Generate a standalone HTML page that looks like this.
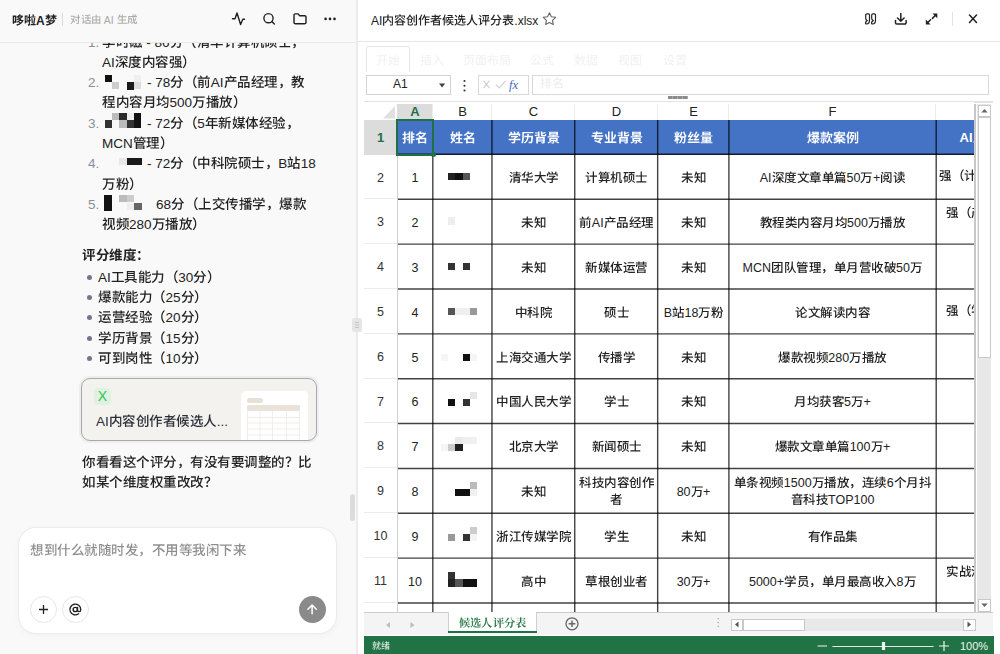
<!DOCTYPE html><html><head><meta charset='utf-8'><style>
*{margin:0;padding:0;box-sizing:border-box}
html,body{width:1000px;height:654px;overflow:hidden;background:#fff;font-family:"Liberation Sans", sans-serif;}
.a{position:absolute;white-space:nowrap}
.ln{position:absolute;left:102px;font-size:13.5px;color:#222;line-height:20px;white-space:nowrap}
.num{position:absolute;left:88px;font-size:13.5px;color:#8a8f99;line-height:20px}
.bul{position:absolute;left:86.5px;width:5px;height:5px;border-radius:50%;background:#717790}
.cell{position:absolute;display:flex;align-items:center;justify-content:center;text-align:center;font-size:12.5px;color:#222;line-height:17px;white-space:normal}
.hd{color:#fff;font-weight:bold;font-size:13px;white-space:nowrap}
.rh{position:absolute;left:364px;width:33px;display:flex;align-items:center;justify-content:center;font-size:12.5px;color:#333}
svg{position:absolute;overflow:visible}
.g{display:inline-block;position:relative;width:1em;height:1em;vertical-align:-0.12em;font-style:normal;text-decoration:none}.g s{position:absolute;left:0;top:0;color:transparent;text-decoration:none}.g svg{position:absolute;left:0;top:0;width:1em;height:1em;fill:currentColor;overflow:visible}</style></head><body><svg width='0' height='0' style='position:absolute'><defs><symbol id='r674e' viewBox='0 0 100 100'><path d='M45 4v10h-39v9h29c-9 8-21 14-32 18c2 2 5 5 6 8c13-5 27-14 36-25v20h9v-20c10 10 23 19 37 24c1-2 4-6 6-8c-12-3-24-10-32-17h30v-9h-41v-10zM45 60v5h-40v9h40v12c0 1-1 1-2 2c-2 0-9 0-15-1c1 3 3 7 4 9c8 0 13 0 17-1c4-2 5-4 5-9v-12h41v-9h-41v-1c9-4 18-9 25-14l-6-5l-2 1h-49v8h37c-5 2-9 4-14 6z'/></symbol><symbol id='r65f6' viewBox='0 0 100 100'><path d='M47 44c5 7 11 18 15 24l8-5c-3-6-10-16-16-23zM31 48v21h-15v-21zM31 40h-15v-20h15zM8 12v74h8v-8h24v-66zM76 4v19h-32v9h32v51c0 2-1 3-3 3c-2 0-10 0-17 0c1 2 3 6 3 9c10 0 17 0 21-1c4-2 5-5 5-11v-51h12v-9h-12v-19z'/></symbol><symbol id='r78c1' viewBox='0 0 100 100'><path d='M4 9v7h10c-2 17-5 32-12 43c2 2 4 7 4 9c2-2 3-5 4-7v31h8v-8h15v-45h-15c2-7 3-15 4-23h12v-7zM18 47h8v29h-8zM66 92c2-1 5-1 23-4c1 2 1 5 1 7l7-2c-1-6-3-16-7-24l-6 2c1 3 2 6 3 10l-12 2c7-11 15-25 20-39l-8-3c-2 4-3 8-5 12l-9 1c4-6 7-14 10-21l-8-3h21v-9h-16c2-4 5-10 7-15l-9-2c-2 5-5 12-7 17h-17l6-3c-1-4-4-10-8-14l-7 3c3 4 5 10 7 14h-16v9h38c-1 8-6 18-7 20c-1 3-2 5-4 5c1 2 3 6 3 8c2-1 4-1 13-2c-4 7-7 13-9 16c-2 4-4 7-6 7c1 3 2 7 2 8zM36 92c1 0 4-1 21-4c1 2 1 5 1 7l7-1c-1-7-3-17-6-24l-6 1c1 3 2 7 3 10l-11 2c7-11 15-25 20-39l-7-3c-2 4-4 8-6 12l-8 1c4-6 8-14 10-21l-8-3c-2 9-6 18-8 21c-1 2-2 4-4 4c1 3 2 7 3 8c1-1 3-1 12-2c-4 8-7 14-9 16c-3 4-5 7-7 8c1 2 2 6 3 7z'/></symbol><symbol id='r5206' viewBox='0 0 100 100'><path d='M68 5l-9 3c6 12 14 24 22 33h-59c8-9 15-21 20-33l-10-3c-6 15-16 29-28 38c2 2 6 5 8 7c2-2 5-4 7-6v6h18c-2 16-8 31-31 38c2 2 5 6 6 9c26-10 32-27 35-47h25c-2 23-3 33-5 35c-1 1-2 1-4 1c-3 0-9 0-15 0c2 2 3 6 4 9c6 1 12 1 15 0c4 0 6-1 8-4c4-4 5-15 7-46v-3c2 3 5 5 7 8c2-3 5-7 8-8c-11-9-23-24-29-37z'/></symbol><symbol id='rff08' viewBox='0 0 100 100'><path d='M68 50c0 20 8 36 20 48l8-4c-11-11-19-26-19-44c0-18 8-33 19-44l-8-4c-12 12-20 28-20 48z'/></symbol><symbol id='r6e05' viewBox='0 0 100 100'><path d='M8 12c5 3 12 8 16 11l6-7c-4-4-11-8-17-11zM3 38c6 3 13 8 17 12l6-8c-4-3-12-8-18-11zM6 89l9 6c5-10 10-22 14-33l-8-5c-4 11-10 24-15 32zM45 68h33v6h-33zM45 61v-6h33v6zM57 4v7h-25v7h25v5h-22v7h22v6h-29v7h68v-7h-30v-6h23v-7h-23v-5h26v-7h-26v-7zM36 48v48h9v-15h33v5c0 2 0 2-2 2c-1 0-6 0-10 0c1 2 2 6 2 8c7 0 12 0 15-1c3-2 4-4 4-8v-39z'/></symbol><symbol id='r534e' viewBox='0 0 100 100'><path d='M53 5v19c-6 2-12 4-18 6c2 2 3 5 4 7c4-1 9-3 14-4v7c0 9 2 12 13 12c2 0 14 0 16 0c9 0 12-4 13-16c-3 0-7-2-9-3c0 9-1 11-4 11c-3 0-13 0-15 0c-4 0-5-1-5-4v-10c11-4 22-8 30-13l-7-8c-6 5-14 9-23 12v-16zM32 3c-7 11-17 21-28 28c2 1 5 5 7 7c3-3 7-6 10-9v25h10v-34c3-5 7-9 9-14zM5 66v9h40v21h10v-21h40v-9h-40v-12h-10v12z'/></symbol><symbol id='r8ba1' viewBox='0 0 100 100'><path d='M13 11c5 5 13 11 16 16l6-7c-3-4-11-11-16-15zM4 35v9h16v34c0 4-4 7-6 8c2 2 4 7 5 9c2-2 5-5 25-19c-1-1-3-6-3-8l-12 8v-41zM62 4v32h-25v10h25v50h10v-50h24v-10h-24v-32z'/></symbol><symbol id='r7b97' viewBox='0 0 100 100'><path d='M27 43h48v5h-48zM27 54h48v5h-48zM27 33h48v4h-48zM58 3c-2 5-5 11-10 15c-1 2-3 3-4 5c2 1 5 2 7 4h-21l6-3c0-1-2-4-3-6h15l1-7h-25c1-2 2-4 3-6l-9-2c-3 8-9 15-15 20c2 1 6 4 7 6c4-3 7-7 9-11h4c2 3 4 6 5 9h-11v37h13v7v1h-25v8h22c-3 3-9 7-20 10c2 1 4 4 6 6c16-4 22-10 25-16h25v16h10v-16h22v-8h-22v-8h12v-37h-10l6-3c-1-2-2-4-4-6h17v-7h-30c1-2 2-4 3-6zM63 72h-23v-8h23zM53 27c2-3 5-6 7-9h7c2 3 5 6 6 9z'/></symbol><symbol id='r673a' viewBox='0 0 100 100'><path d='M49 9v33c0 15-1 35-14 48c2 2 5 5 7 6c14-14 16-38 16-54v-24h17v63c0 8 0 10 2 12c2 2 4 2 6 2c2 0 4 0 6 0c2 0 4 0 5-1c2-1 3-3 3-6c1-3 1-10 1-16c-2 0-5-2-7-4c0 7 0 12 0 14c0 2-1 3-1 4c0 0-1 1-2 1c0 0-1 0-2 0c-1 0-1-1-2-1c0 0 0-2 0-5v-72zM21 4v21h-16v9h15c-4 13-11 28-18 36c2 2 4 6 5 8c5-6 10-16 14-26v44h9v-44c3 5 7 10 9 14l6-8c-3-2-12-13-15-17v-7h14v-9h-14v-21z'/></symbol><symbol id='r7855' viewBox='0 0 100 100'><path d='M70 80c7 4 17 12 21 16l5-7c-4-5-14-11-21-16zM64 38v20c0 10-3 24-26 32c2 1 5 4 6 6c25-9 29-25 29-38v-20zM46 26v48h9v-40h26v39h9v-47h-21l3-9h22v-9h-50v9h19c-1 3-1 6-2 9zM5 8v9h11c-2 15-7 28-14 37c2 2 4 8 4 11c2-3 4-5 5-7v34h8v-8h19v-44h-19c3-8 5-15 6-23h15v-9zM19 48h11v28h-11z'/></symbol><symbol id='r58eb' viewBox='0 0 100 100'><path d='M45 4v31h-40v9h40v38h-34v9h79v-9h-35v-38h40v-9h-40v-31z'/></symbol><symbol id='rff0c' viewBox='0 0 100 100'><path d='M17 100c12-4 19-12 19-23c0-8-4-13-10-13c-4 0-8 3-8 8c0 5 4 8 8 8h1c0 6-5 11-12 14z'/></symbol><symbol id='r6df1' viewBox='0 0 100 100'><path d='M33 9v19h8v-11h43v10h9v-18zM50 22c-4 8-12 15-19 19c2 2 5 5 7 7c7-6 16-14 20-23zM66 26c7 6 15 16 18 21l8-5c-4-6-13-14-20-20zM8 12c5 3 13 7 16 10l5-8c-4-3-11-7-17-9zM3 39c6 3 14 8 18 11l5-8c-4-3-12-8-18-10zM5 88l7 7c6-10 11-21 16-32l-6-6c-6 11-12 24-17 31zM58 42v10h-26v8h20c-6 11-15 20-26 24c2 2 5 5 7 7c9-5 18-14 25-24v29h9v-29c6 10 14 19 22 24c2-2 5-6 7-7c-9-5-18-14-24-24h21v-8h-26v-10z'/></symbol><symbol id='r5ea6' viewBox='0 0 100 100'><path d='M39 24v8h-15v8h15v16h40v-16h15v-8h-15v-8h-10v8h-21v-8zM69 40v9h-21v-9zM74 69c-4 4-10 8-16 10c-6-3-12-6-15-10zM25 61v8h12l-4 1c4 5 9 10 15 13c-9 3-18 4-28 5c1 2 3 6 4 8c12-2 23-4 34-8c9 4 21 7 33 8c1-2 4-6 6-8c-11-1-20-2-29-5c9-5 16-11 20-19l-6-3h-2zM47 5c1 3 2 5 3 8h-38v27c0 15-1 37-9 52c3 1 7 3 9 4c8-16 9-40 9-56v-18h74v-9h-34c-1-3-3-7-5-10z'/></symbol><symbol id='r5185' viewBox='0 0 100 100'><path d='M9 20v77h10v-67h26c0 13-4 28-25 40c2 1 6 5 7 7c12-8 19-17 23-26c9 8 18 18 22 24l8-6c-6-7-17-19-27-27c1-4 2-8 2-12h27v55c0 1-1 2-3 2c-2 0-9 0-15 0c1 3 2 7 3 9c9 0 15 0 19-1c4-2 5-5 5-10v-65h-36v-16h-10v16z'/></symbol><symbol id='r5bb9' viewBox='0 0 100 100'><path d='M32 24c-5 8-14 14-23 19c2 1 5 5 7 7c9-5 19-14 25-23zM58 30c9 6 20 14 25 20l7-7c-6-5-17-13-26-19zM49 33c-10 15-27 27-46 34c3 2 5 5 6 8c5-2 9-4 13-6v27h9v-3h38v3h10v-28c3 2 7 4 11 5c2-2 4-5 6-7c-16-7-29-14-41-26l2-3zM31 85v-14h38v14zM32 62c7-4 13-10 18-16c6 7 13 12 20 16zM42 5c2 2 3 5 4 7h-38v20h9v-11h66v11h9v-20h-35c-1-3-3-6-5-9z'/></symbol><symbol id='r5f3a' viewBox='0 0 100 100'><path d='M54 17h25v10h-25zM45 9v26h17v8h-19v28h19v13l-24 1l2 9c12-1 30-2 46-3c1 2 2 4 3 6l8-3c-2-6-7-16-12-22l-7 2c1 3 3 6 4 8l-11 1v-12h20v-28h-20v-8h17v-26zM51 50h11v13h-11zM71 50h11v13h-11zM8 31c-1 10-2 23-4 32h24c-2 15-3 22-4 23c-1 1-2 2-4 2c-2 0-6 0-10-1c1 3 2 6 2 9c5 0 10 0 12 0c3-1 5-1 7-4c3-3 5-12 6-34c0-1 0-4 0-4h-23c1-4 1-10 2-14h21v-31h-31v8h22v14z'/></symbol><symbol id='rff09' viewBox='0 0 100 100'><path d='M32 50c0-20-8-36-20-48l-8 4c11 11 19 26 19 44c0 18-8 33-19 44l8 4c12-12 20-28 20-48z'/></symbol><symbol id='r524d' viewBox='0 0 100 100'><path d='M60 37v41h8v-41zM80 34v51c0 2-1 2-2 2c-2 0-8 0-13 0c1 3 3 7 3 9c8 0 13 0 16-2c4-1 5-4 5-9v-51zM71 3c-2 5-5 11-9 16h-29l5-2c-2-4-6-9-9-13l-9 3c3 3 6 8 8 12h-23v9h90v-9h-22c3-4 6-8 8-13zM40 59v9h-20v-9zM40 52h-20v-8h20zM11 36v60h9v-21h20v11c0 2-1 2-2 2c-1 0-6 0-10 0c1 2 2 6 3 8c7 0 11 0 14-2c3-1 4-3 4-8v-50z'/></symbol><symbol id='r4ea7' viewBox='0 0 100 100'><path d='M68 25c-2 5-5 12-8 16h-25l7-3c-1-4-5-10-8-14l-8 4c3 4 6 9 8 13h-22v14c0 11-1 25-9 36c2 1 6 5 8 6c9-11 11-29 11-42v-5h71v-9h-23c3-4 6-8 9-13zM42 6c2 2 4 6 5 9h-36v9h80v-9h-33c-1-3-4-8-7-12z'/></symbol><symbol id='r54c1' viewBox='0 0 100 100'><path d='M31 17h38v16h-38zM22 8v34h57v-34zM8 52v44h9v-5h18v5h9v-44zM17 82v-21h18v21zM54 52v44h9v-5h20v5h10v-44zM63 82v-21h20v21z'/></symbol><symbol id='r7ecf' viewBox='0 0 100 100'><path d='M4 82l1 9c10-3 22-6 33-9l-1-8c-12 3-25 6-33 8zM6 46c1-1 4-1 15-3c-4 6-8 10-9 12c-4 4-6 6-9 6c1 3 3 7 3 9c3-1 7-2 32-7c0-2 0-6 0-8l-18 3c8-9 15-18 22-28l-9-6c-2 4-4 7-6 11l-12 1c6-8 12-19 16-28l-9-5c-4 12-11 25-13 28c-3 3-4 6-6 6c1 3 2 7 3 9zM42 9v8h34c-9 13-25 22-40 27c2 2 4 6 5 8c9-3 18-8 26-13c9 4 19 9 25 13l5-8c-5-3-14-7-23-11c7-6 13-13 17-21l-7-4l-2 1zM43 55v8h19v22h-25v9h59v-9h-24v-22h20v-8z'/></symbol><symbol id='r7406' viewBox='0 0 100 100'><path d='M49 35h13v11h-13zM70 35h13v11h-13zM49 16h13v11h-13zM70 16h13v11h-13zM32 85v8h65v-8h-26v-12h23v-9h-23v-10h21v-46h-51v46h21v10h-22v9h22v12zM3 77l2 10c9-3 21-7 32-11l-1-9l-11 3v-22h10v-9h-10v-20h11v-9h-32v9h12v20h-11v9h11v25c-5 2-9 3-13 4z'/></symbol><symbol id='r6559' viewBox='0 0 100 100'><path d='M62 4c-2 12-5 24-10 34v-8h-7c4-6 8-14 11-22l-9-2c-2 5-4 10-7 14v-7h-11v-9h-9v9h-12v9h12v8h-16v8h23c-2 3-4 5-7 7h-8v6c-3 2-6 4-9 6c1 2 5 5 6 7c6-3 11-7 17-12h8c-3 3-6 6-10 8v7l-21 2l1 8l20-2v12c0 1 0 1-1 1c-2 0-6 0-11 0c2 2 3 6 3 8c7 0 11 0 14-1c3-1 4-4 4-8v-13l20-2v-8l-20 2v-4c5-4 11-8 15-13c2 2 4 4 6 5c2-2 4-6 6-9c2 9 4 17 8 24c-6 8-13 15-23 19c2 2 4 7 5 9c10-5 17-11 23-18c5 7 10 13 18 17c1-2 4-6 6-8c-7-4-14-10-18-18c5-11 9-24 11-39h6v-9h-28c2-5 3-11 4-17zM33 45c2-2 4-5 6-7h13c-2 4-3 6-5 9l-4-3l-1 1zM29 22h11c-2 2-4 5-6 8h-5zM80 31c-1 11-3 20-7 28c-3-8-6-18-7-28z'/></symbol><symbol id='r7a0b' viewBox='0 0 100 100'><path d='M55 16h27v16h-27zM46 8v32h45v-32zM45 66v8h19v12h-26v8h59v-8h-24v-12h19v-8h-19v-10h21v-8h-51v8h21v10zM35 5c-7 3-20 6-31 8c1 2 2 5 2 7c5 0 9-1 14-2v14h-16v9h15c-4 10-10 22-17 29c2 2 4 6 5 9c5-6 9-14 13-23v40h9v-41c3 4 7 9 8 11l5-7c-2-3-10-11-13-14v-4h12v-9h-12v-16c5-1 9-2 13-4z'/></symbol><symbol id='r6708' viewBox='0 0 100 100'><path d='M20 9v31c0 16-2 36-17 50c2 1 5 4 7 6c9-8 14-19 17-30h46v17c0 3-1 3-3 3c-2 0-11 0-18 0c1 3 3 7 4 10c10 0 17 0 21-2c4-1 6-4 6-10v-75zM30 18h43v15h-43zM30 42h43v15h-44c0-6 1-11 1-15z'/></symbol><symbol id='r5747' viewBox='0 0 100 100'><path d='M48 43c6 5 14 12 18 16l5-6c-3-4-11-11-17-15zM40 75l4 9c10-6 24-13 37-21l-3-7c-13 7-28 15-38 19zM3 74l3 10c10-5 23-12 34-18l-2-8l-13 6v-28h11l-1 1c2 1 5 5 7 7c4-4 8-10 12-16h30c0 39-2 55-5 58c-1 2-2 2-4 2c-3 0-9 0-16-1c2 3 3 7 3 9c6 0 13 1 16 0c4 0 7-1 9-5c4-5 5-21 6-67c0-1 0-5 0-5h-34c2-4 4-8 6-13l-9-2c-4 12-12 24-20 32v-9h-11v-22h-9v22h-12v9h12v33c-5 2-9 4-13 5z'/></symbol><symbol id='r4e07' viewBox='0 0 100 100'><path d='M6 11v9h26c-1 25-2 54-29 69c2 2 5 5 7 7c19-11 26-29 29-48h36c-1 24-3 35-6 38c-1 1-2 1-5 1c-2 0-9 0-17-1c2 3 3 7 4 9c7 1 13 1 17 1c4-1 7-2 10-5c4-4 6-16 7-48c0-1 0-4 0-4h-45c1-7 1-13 1-19h53v-9z'/></symbol><symbol id='r64ad' viewBox='0 0 100 100'><path d='M16 4v19h-12v9h12v20c-5 1-10 3-14 4l2 9l12-4v25c0 1-1 2-2 2c-1 0-5 0-9 0c1 2 2 6 3 8c6 0 10 0 13-1c2-2 3-4 3-9v-28l8-3c1 2 3 4 4 5l4-2v38h8v-4h33v4h9v-38l2 1c1-2 4-5 6-7c-8-3-16-9-22-15h19v-8h-13c2-3 4-8 6-12l-8-3c-1 5-4 11-7 15h-4v-15c8 0 16-2 22-3l-5-7c-12 3-33 5-50 6c0 1 2 4 2 6c7 0 14 0 22-1v14h-12l7-2c-1-3-4-7-6-11l-7 2c2 4 4 8 5 11h-12v8h18c-5 6-12 11-19 15l-1-6l-9 2v-16h10v-9h-10v-19zM60 40v15h9v-15c5 6 12 13 19 17h-46c7-4 13-10 18-17zM60 64v7h-12v-7zM68 64h13v7h-13zM60 78v7h-12v-7zM68 78h13v7h-13z'/></symbol><symbol id='r653e' viewBox='0 0 100 100'><path d='M20 6c2 4 4 10 5 13l9-2c-2-4-4-9-6-14zM60 4c-2 16-8 33-16 43v-3c1-1 1-4 1-4h-21v-12h24v-9h-44v9h11v20c0 14-1 29-13 42c2 2 5 4 7 6c13-14 15-31 15-47h12c-1 25-2 35-3 37c-1 1-2 1-3 1c-2 0-5 0-9 0c1 2 2 6 3 9c4 0 8 0 10-1c3 0 5-1 7-3c2-4 3-14 3-43c2 2 6 5 7 7c2-4 5-7 7-11c2 9 5 17 8 25c-5 8-13 14-23 18c2 2 5 7 6 9c9-5 16-11 22-19c5 8 12 14 20 18c1-2 5-6 7-8c-9-4-16-10-21-18c6-11 10-24 12-39h8v-9h-31c2-6 3-11 4-17zM63 31h17c-2 11-4 21-8 29c-4-8-7-18-9-28z'/></symbol><symbol id='r5e74' viewBox='0 0 100 100'><path d='M4 65v9h46v22h10v-22h36v-9h-36v-18h28v-9h-28v-14h31v-9h-59c2-3 3-6 4-9l-10-3c-4 13-12 26-22 35c3 1 7 4 9 6c5-6 10-12 14-20h23v14h-29v27zM30 65v-18h20v18z'/></symbol><symbol id='r65b0' viewBox='0 0 100 100'><path d='M36 68c3 4 6 11 8 15l6-4c-1-4-5-10-8-15zM13 65c-2 6-6 12-9 16c1 1 4 3 6 5c4-5 8-12 10-19zM55 13v35c0 13-1 30-9 42c2 1 6 4 8 5c9-13 10-33 10-47v-2h13v50h9v-50h10v-9h-32v-18c10-1 21-4 30-7l-8-7c-7 3-20 6-31 8zM21 5c1 3 2 6 3 9h-18v8h44v-8h-16c-1-4-3-8-5-11zM37 22c-1 4-4 10-5 14h-14l5-1c0-4-2-9-4-13l-7 2c2 4 3 9 3 12h-11v8h20v10h-19v8h19v23c0 1 0 2-1 2c-1 0-4 0-8 0c1 2 3 5 3 7c5 0 9 0 11-1c3-1 4-3 4-7v-24h17v-8h-17v-10h19v-8h-12c2-3 4-8 5-12z'/></symbol><symbol id='r5a92' viewBox='0 0 100 100'><path d='M28 32c0 13-3 24-6 32c-2-2-4-4-7-6c2-7 4-16 5-26zM6 62c4 3 8 6 13 10c-4 8-10 14-16 17c2 2 4 5 5 7c7-4 13-10 17-17c3 3 5 6 7 8l6-7c-2-3-5-6-9-10c5-11 7-26 8-46h-5h-2h-8c1-7 2-14 2-20h-8c0 6-1 13-2 20h-9v8h7c-2 11-4 22-6 30zM47 4v10h-8v8h8v30h16v8h-24v8h19c-6 8-14 15-23 19c2 1 5 5 7 7c7-4 15-12 21-20v22h9v-22c5 8 12 15 19 20c1-3 5-6 7-8c-8-4-16-11-22-18h19v-8h-23v-8h14v-30h9v-8h-9v-10h-9v10h-21v-10zM77 22v8h-21v-8zM77 37v7h-21v-7z'/></symbol><symbol id='r4f53' viewBox='0 0 100 100'><path d='M24 4c-5 15-13 29-22 39c2 2 5 7 6 9c2-2 5-6 7-9v53h9v-69c3-7 6-13 9-20zM42 70v9h15v17h10v-17h15v-9h-15v-31c6 17 14 32 24 42c1-3 5-6 7-8c-10-9-20-25-26-41h24v-9h-29v-19h-10v19h-27v9h22c-6 16-15 33-26 42c2 1 5 5 7 7c9-9 18-25 24-41v30z'/></symbol><symbol id='r9a8c' viewBox='0 0 100 100'><path d='M3 72l1 8c8-2 17-4 26-7l-1-7c-10 3-19 5-26 6zM46 52c3 8 6 18 6 24l8-2c-1-6-4-16-6-24zM64 50c2 7 3 17 4 24l8-2c-1-6-3-16-5-23zM10 23c-1 11-2 26-3 35h26c-1 19-2 27-4 29c-1 1-2 1-4 1c-2 0-6 0-11 0c2 2 2 5 3 7c5 1 9 1 12 0c3 0 5-1 7-3c3-3 4-13 6-38c0-1 0-4 0-4h-8c1-11 3-29 3-42h-31v8h23c-1 12-2 25-3 34h-10c0-8 1-18 2-27zM53 34v8h31v-7c3 3 6 6 9 8c1-3 3-7 5-9c-9-6-20-15-26-24l2-4l-8-3c-6 13-17 25-29 33c1 1 4 5 5 7c9-6 18-15 25-25c5 5 10 11 16 16zM44 84v8h51v-8h-14c5-9 10-22 14-32l-9-2c-3 10-8 24-13 34z'/></symbol><symbol id='r7ba1' viewBox='0 0 100 100'><path d='M20 44v52h10v-3h46v3h9v-25h-55v-6h50v-21zM76 86h-46v-8h46zM43 26c1 1 2 4 3 6h-37v17h9v-10h65v10h9v-17h-36c-1-3-3-6-4-8zM30 51h41v7h-41zM16 3c-2 9-7 17-12 23c2 1 6 3 8 4c3-3 6-7 8-12h6c2 4 4 8 5 11l8-3c-1-2-2-5-4-8h14v-7h-26c1-2 2-4 3-6zM59 3c-2 7-5 15-10 19c2 1 6 3 8 4c2-2 4-5 6-8h5c3 4 6 8 8 11l7-3c-1-2-3-5-5-8h16v-7h-28c1-2 2-4 2-6z'/></symbol><symbol id='r4e2d' viewBox='0 0 100 100'><path d='M45 4v17h-36v49h10v-6h26v32h10v-32h26v6h10v-49h-36v-17zM19 55v-25h26v25zM81 55h-26v-25h26z'/></symbol><symbol id='r79d1' viewBox='0 0 100 100'><path d='M49 16c6 4 13 10 16 14l7-6c-4-4-11-10-17-14zM46 42c6 4 13 10 16 15l7-6c-4-5-11-11-17-15zM37 5c-8 3-21 6-32 8c1 2 2 5 2 7c4 0 9-1 13-2v14h-16v9h15c-4 10-10 22-17 29c2 2 4 6 5 9c5-6 9-14 13-23v40h9v-44c3 5 7 10 8 14l6-8c-2-3-11-13-14-16v-1h14v-9h-14v-16c5-1 9-2 13-4zM42 68l1 9l32-5v24h9v-26l13-2l-1-8l-12 1v-57h-9v59z'/></symbol><symbol id='r9662' viewBox='0 0 100 100'><path d='M58 5c2 3 4 7 5 11h-25v18h8v8h41v-8h8v-18h-22c-1-4-3-9-6-13zM47 34v-10h39v10zM39 52v8h13c-1 14-5 24-22 29c2 2 5 5 6 7c19-6 24-18 25-36h9v24c0 8 2 11 10 11c1 0 6 0 8 0c6 0 8-3 9-17c-2 0-6-2-8-3c0 10 0 12-2 12c-1 0-5 0-6 0c-2 0-2 0-2-3v-24h17v-8zM7 8v88h9v-80h11c-2 7-5 15-7 22c6 8 8 14 8 19c0 3-1 6-2 7c-1 0-2 1-3 1c-1 0-3 0-5 0c1 2 2 6 2 8c2 0 5 0 7 0c2-1 4-1 5-2c3-2 4-7 4-13c0-6-1-13-8-21c3-8 7-18 10-26l-7-4l-1 1z'/></symbol><symbol id='r7ad9' viewBox='0 0 100 100'><path d='M5 22v9h40v-9zM9 36c2 11 4 25 5 35l7-2c0-9-2-23-5-34zM17 6c3 5 5 12 6 16l9-3c-1-4-4-10-7-15zM32 34c-1 12-4 29-6 39c-8 2-16 3-22 5l2 9c11-3 25-6 38-9l-1-9l-9 2c2-10 5-24 7-36zM46 51v45h10v-4h27v4h9v-45h-20v-19h24v-9h-24v-19h-10v47zM56 83v-23h27v23z'/></symbol><symbol id='r7c89' viewBox='0 0 100 100'><path d='M4 12c2 7 5 16 5 22l7-2c0-6-2-15-5-22zM35 10c-1 6-4 16-7 22l7 2c2-6 5-15 8-22zM4 38v9h13c-3 10-9 21-14 27c1 3 3 7 4 10c5-6 9-14 12-22v34h9v-35c3 4 6 9 8 12l6-7c-2-3-11-12-14-16v-3h12v-6c1 2 2 6 3 8c1-1 2-2 3-3v6h11c-2 17-7 30-20 37c2 2 5 5 7 7c13-9 20-23 22-44h13c-1 23-2 32-4 34c-1 1-2 1-3 1c-2 0-6 0-10 0c2 2 3 6 3 8c4 1 9 1 11 0c3 0 5-1 7-3c3-4 4-15 5-45l1-2l2 3c1-3 4-6 6-8c-9-9-14-19-17-35l-9 2c3 15 7 26 15 36h-37c8-9 13-21 16-36l-9-1c-2 14-7 25-16 32h-12v-34h-9v34z'/></symbol><symbol id='r4e0a' viewBox='0 0 100 100'><path d='M42 5v77h-37v10h90v-10h-43v-38h36v-9h-36v-30z'/></symbol><symbol id='r4ea4' viewBox='0 0 100 100'><path d='M31 28c-6 8-16 15-25 20c2 2 6 5 8 7c8-5 19-15 26-23zM61 33c9 7 20 16 25 23l8-7c-5-6-17-15-26-21zM36 46l-8 3c4 9 9 17 15 24c-10 7-23 12-38 15c1 2 4 6 5 8c16-3 29-9 40-17c11 8 24 14 40 17c1-3 4-7 6-9c-16-2-28-7-39-14c7-7 13-15 17-25l-10-3c-3 9-8 16-14 22c-6-6-11-13-14-21zM41 6c2 3 5 7 6 11h-41v9h88v-9h-39l2-1c-1-4-4-9-7-14z'/></symbol><symbol id='r4f20' viewBox='0 0 100 100'><path d='M26 4c-6 15-15 29-24 39c1 2 4 7 5 9c3-2 5-6 8-10v54h9v-68c4-7 8-14 10-21zM46 76c10 6 21 15 27 20l7-6c-3-3-7-6-11-9c8-8 16-17 23-25l-7-4l-2 1h-30l3-11h40v-8h-38l3-10h30v-9h-28l3-9l-10-2l-2 11h-19v9h17l-3 10h-20v8h17c-2 8-4 14-6 20h35c-4 4-9 9-13 14c-3-2-6-4-9-6z'/></symbol><symbol id='r5b66' viewBox='0 0 100 100'><path d='M45 53v7h-39v9h39v16c0 2-1 2-3 2c-2 0-9 0-16 0c2 3 4 7 4 9c9 0 15 0 19-1c4-2 6-4 6-10v-16h40v-9h-40v-3c8-4 17-9 23-15l-6-5l-2 1h-47v8h37c-5 3-10 6-15 7zM42 6c3 4 6 10 7 14h-20l4-2c-2-4-6-9-9-14l-8 4c2 4 6 8 8 12h-17v21h9v-13h68v13h9v-21h-15c3-4 6-8 9-13l-10-3c-2 5-6 11-9 16h-15l5-2c-1-4-5-11-8-15z'/></symbol><symbol id='r7206' viewBox='0 0 100 100'><path d='M8 24c-1 8-2 19-5 25l6 2c3-7 4-18 4-26zM30 21c-1 7-3 16-5 21l5 2c2-5 4-13 6-20zM46 71c2 2 4 5 6 7l6-4c-2-2-4-5-7-7zM48 23h34v5h-34zM48 12h34v5h-34zM16 4v35c0 18-1 36-13 51c2 1 5 4 6 6c6-8 10-16 12-25c3 5 6 11 8 15l6-7c-2-3-9-14-12-18c1-8 1-15 1-22v-35zM71 46v6h-13v-6zM71 40h-13v-6h13zM40 6v28h9v6h-12v6h12v6h-15v7h14c-5 4-11 7-16 9c1 2 4 4 5 6c7-3 15-9 20-15h18c4 6 11 12 18 16c1-2 3-5 5-6c-5-2-11-6-16-10h14v-7h-16v-6h13v-6h-13v-6h11v-28zM34 86l2 7c8-3 16-7 25-10v5c0 1-1 2-2 2c-1 0-5 0-9 0c2 2 3 4 3 6c6 0 10 0 13-1c2-1 3-3 3-7v-5c7 3 15 7 19 10l5-5c-4-3-10-6-16-8c3-3 5-6 7-8l-5-4c-2 3-5 6-8 9l-2-1v-14h-8v14c-10 4-21 8-27 10z'/></symbol><symbol id='r6b3e' viewBox='0 0 100 100'><path d='M11 66c-2 7-5 15-8 20c2 1 5 2 7 4c3-6 7-14 9-22zM37 69c3 5 6 12 7 16l7-3c-1-4-4-11-7-16zM67 37v5c0 13-2 33-19 48c2 2 6 5 7 7c9-9 14-18 17-27c4 11 10 21 19 26c1-2 4-6 7-8c-12-6-19-20-23-36c1-4 1-7 1-10v-5zM24 4v8h-19v8h19v7h-17v8h42v-8h-17v-7h19v-8h-19v-8zM4 56v8h20v23c0 1-1 1-2 1c-1 0-4 0-8 0c1 2 2 6 3 8c5 0 9 0 12-1c3-1 4-4 4-8v-23h19v-8zM88 22h-1h-21c1-6 2-11 2-17l-9-1c-2 15-5 29-11 39v-2h-40v8h40v-3c2 1 6 3 7 5c3-6 6-13 8-21h23c-2 7-4 13-5 18l8 2c2-7 5-18 7-27l-6-2z'/></symbol><symbol id='r89c6' viewBox='0 0 100 100'><path d='M44 8v54h9v-46h29v46h10v-54zM63 23v18c0 16-3 35-28 49c2 1 5 5 6 6c13-7 21-16 26-26v16c0 7 3 9 10 9h8c10 0 11-4 12-20c-2-1-5-2-8-4c0 14-1 17-4 17h-6c-3 0-3-1-3-4v-24h-6c2-6 2-13 2-18v-19zM14 8c4 4 7 9 9 13h-17v8h23c-6 12-16 24-26 31c2 2 4 6 4 9c4-2 7-6 11-9v36h9v-41c3 4 6 9 8 12l6-7c-2-2-8-10-12-14c5-7 8-15 11-22l-5-4l-2 1h-9l7-5c-2-3-5-8-9-12z'/></symbol><symbol id='r9891' viewBox='0 0 100 100'><path d='M70 39c-1 34-2 45-25 51c1 2 3 5 4 7c26-8 28-21 28-58zM72 80c7 5 16 12 20 17l5-6c-4-5-13-11-19-16zM12 48c-2 7-5 15-9 20c2 1 5 3 7 4c4-5 8-14 10-22zM54 27v47h8v-40h22v40h9v-47h-18l4-9h16v-9h-43v9h18c-1 3-2 6-3 9zM42 49c-2 9-5 16-10 22v-29h18v-8h-16v-11h14v-8h-14v-11h-8v30h-8v-22h-8v22h-6v8h20v31h7c-6 8-15 13-27 16c2 2 4 5 5 8c23-8 35-22 41-46z'/></symbol><symbol id='b8bc4' viewBox='0 0 100 100'><path d='M82 23c-1 7-3 17-5 24l9 2c2-6 5-15 8-24zM38 25c2 8 4 17 5 24l10-3c0-6-3-16-5-23zM8 12c5 5 12 12 15 16l8-8c-3-4-11-11-16-15zM36 8v11h23v34h-25v11h25v33h12v-33h26v-11h-26v-34h22v-11zM4 34v11h11v32c0 4-3 7-5 9c2 2 5 7 6 10c1-3 5-5 22-20c-2-2-4-7-5-10l-7 6v-38h-11z'/></symbol><symbol id='b5206' viewBox='0 0 100 100'><path d='M69 4l-11 4c5 11 12 22 20 32h-53c7-9 14-20 19-32l-13-4c-6 15-16 30-28 38c3 2 8 7 10 9c3-1 5-3 7-5v6h16c-2 14-8 27-30 35c2 2 6 7 7 10c26-9 33-26 35-45h21c-1 20-2 29-4 31c-1 1-2 1-4 1c-2 0-7 0-13 0c2 3 4 8 4 12c6 0 12 0 15 0c4-1 7-2 9-5c4-4 5-16 6-46c2 2 4 4 6 5c2-3 6-7 9-10c-10-8-22-23-28-36z'/></symbol><symbol id='b7ef4' viewBox='0 0 100 100'><path d='M3 81l3 12c10-3 23-7 35-10l-1-10c-14 3-28 7-37 8zM6 47c1-1 4-2 13-3c-4 5-7 9-8 10c-3 4-5 6-8 7c1 3 3 8 4 10c2-1 6-3 31-7c0-3 0-7 0-10l-16 2c6-8 13-18 18-28l-9-5c-2 4-4 8-6 11l-9 1c6-8 11-18 15-27l-11-5c-3 11-10 24-12 27c-2 3-4 6-6 6c1 3 3 8 4 11zM69 51v9h-12v-9zM66 8c3 4 5 9 7 13h-13c2-5 4-10 5-14l-11-4c-3 12-10 27-18 36c2 3 5 8 6 11c1-1 2-3 4-5v52h11v-7h40v-11h-17v-9h13v-10h-13v-9h13v-11h-13v-8h15v-11h-19l8-3c-2-4-4-10-7-14zM69 40h-12v-8h12zM69 70v9h-12v-9z'/></symbol><symbol id='b5ea6' viewBox='0 0 100 100'><path d='M39 25v7h-14v9h14v16h41v-16h14v-9h-14v-7h-12v7h-18v-7zM68 41v7h-18v-7zM71 70c-3 4-8 6-13 8c-5-2-10-5-13-8zM26 61v9h11l-5 2c4 4 8 8 13 11c-8 1-16 3-24 3c2 3 4 7 5 10c11-1 22-3 32-6c9 3 20 6 32 7c2-3 5-8 7-11c-9 0-17-1-25-3c7-5 13-11 18-19l-8-4l-2 1zM46 5c1 2 2 4 3 7h-38v26c0 16-1 38-9 54c4 0 9 3 11 5c9-17 10-42 10-59v-15h73v-11h-34c-1-3-2-7-4-10z'/></symbol><symbol id='bff1a' viewBox='0 0 100 100'><path d='M25 41c5 0 9-4 9-9c0-6-4-10-9-10c-5 0-9 4-9 10c0 5 4 9 9 9zM25 89c5 0 9-4 9-10c0-5-4-9-9-9c-5 0-9 4-9 9c0 6 4 10 9 10z'/></symbol><symbol id='r5de5' viewBox='0 0 100 100'><path d='M5 80v9h90v-9h-40v-56h35v-10h-80v10h34v56z'/></symbol><symbol id='r5177' viewBox='0 0 100 100'><path d='M21 8v58h-16v9h27c-6 5-19 11-28 15c2 1 5 5 6 6c10-3 23-10 31-16l-8-5h32l-5 5c10 5 22 12 29 17l8-7c-7-5-19-11-30-15h28v-9h-15v-58zM30 66v-8h41v8zM30 30h41v7h-41zM30 23v-7h41v7zM30 44h41v8h-41z'/></symbol><symbol id='r80fd' viewBox='0 0 100 100'><path d='M37 47v7h-19v-7zM10 39v57h8v-19h19v9c0 1-1 2-2 2c-1 0-5 0-9 0c1 2 2 6 3 8c6 0 10 0 13-1c3-2 4-4 4-9v-47zM18 62h19v7h-19zM85 11c-5 3-13 6-21 9v-16h-9v32c0 9 3 12 13 12c2 0 14 0 16 0c8 0 11-4 12-16c-3-1-6-2-8-4c-1 10-2 12-5 12c-3 0-12 0-14 0c-4 0-5-1-5-4v-9c10-2 20-6 28-9zM86 55c-5 4-13 7-22 11v-16h-9v33c0 10 3 13 13 13c2 0 14 0 16 0c9 0 12-4 13-18c-3 0-7-2-9-3c0 10-1 12-4 12c-3 0-13 0-14 0c-5 0-6 0-6-4v-10c10-3 21-6 29-11zM8 33c3-1 6-1 32-3c1 2 2 4 3 5l8-3c-2-7-7-16-12-22l-8 3c2 3 4 6 6 10l-19 1c4-5 9-12 12-18l-10-3c-3 8-8 15-10 17c-2 3-3 4-5 4c1 3 3 8 3 9z'/></symbol><symbol id='r529b' viewBox='0 0 100 100'><path d='M40 4v19v2h-32v10h31c-1 18-8 39-34 54c2 2 6 5 7 8c29-17 36-41 37-62h32c-2 33-4 46-7 50c-2 1-3 1-5 1c-3 0-9 0-15 0c2 2 3 7 3 9c6 1 12 1 16 0c4 0 7-1 9-4c5-5 7-20 9-61c0-2 0-5 0-5h-41v-2v-19z'/></symbol><symbol id='r8fd0' viewBox='0 0 100 100'><path d='M38 9v9h51v-9zM6 14c6 4 14 10 18 14l6-7c-4-3-12-9-18-13zM38 76c3-1 8-2 44-5c1 3 2 5 4 8l8-5c-4-7-12-20-18-30l-8 4c3 4 6 10 9 15l-29 2c5-7 10-16 14-24h34v-9h-65v9h19c-3 9-8 18-10 20c-2 3-4 5-6 6c2 3 3 7 4 9zM26 38h-22v9h13v30c-4 2-9 6-14 11l7 9c4-6 9-12 12-12c3 0 6 3 10 5c7 4 15 6 28 6c11 0 27-1 34-1c1-3 2-8 3-11c-10 2-26 2-37 2c-11 0-20 0-26-4c-4-2-6-4-8-5z'/></symbol><symbol id='r8425' viewBox='0 0 100 100'><path d='M33 48h35v7h-35zM24 41v21h53v-21zM8 28v20h9v-12h66v12h9v-20zM16 67v30h9v-4h51v3h9v-29zM25 85v-10h51v10zM63 4v7h-27v-7h-9v7h-21v9h21v6h9v-6h27v6h10v-6h21v-9h-21v-7z'/></symbol><symbol id='r5386' viewBox='0 0 100 100'><path d='M11 8v34c0 14-1 35-8 49c2 1 7 4 8 5c8-15 9-38 9-54v-25h75v-9zM49 22c0 5 0 10-1 16h-22v8h22c-2 19-8 34-27 43c3 2 5 5 7 7c20-11 27-29 29-50h24c-2 25-3 36-6 38c-1 1-2 2-4 2c-2 0-8 0-14-1c1 3 3 7 3 9c6 1 12 1 15 0c4 0 6-1 9-4c3-4 5-16 6-48c0-2 0-4 0-4h-32c0-6 1-11 1-16z'/></symbol><symbol id='r80cc' viewBox='0 0 100 100'><path d='M72 51v7h-44v-7zM19 44v52h9v-17h44v7c0 2 0 2-2 2c-2 0-8 0-13 0c1 2 3 6 3 8c8 0 14 0 17-1c4-1 5-4 5-9v-42zM28 65h44v8h-44zM32 4v8h-24v7h24v8c-10 2-20 3-27 4l2 8l25-5v8h9v-38zM54 4v25c0 9 3 12 13 12c3 0 14 0 16 0c8 0 11-3 12-13c-3-1-7-2-9-4c0 7 0 9-4 9c-2 0-12 0-13 0c-5 0-5-1-5-4v-6c9-2 19-5 27-9l-6-6c-5 2-13 5-21 7v-11z'/></symbol><symbol id='r666f' viewBox='0 0 100 100'><path d='M26 24h48v6h-48zM26 13h48v5h-48zM28 60h44v8h-44zM62 82c8 4 20 9 26 13l6-6c-6-4-18-9-26-12zM28 77c-6 4-16 9-24 11c2 2 5 5 7 7c8-3 19-9 26-15zM43 38c1 1 1 2 2 3h-39v8h88v-8h-39c-1-1-2-3-3-5h31v-29h-67v29h32zM19 54v21h26v13c0 1 0 1-1 1c-2 0-7 0-12 0c2 2 3 5 3 7c7 0 12 0 15-1c4-1 5-3 5-7v-13h27v-21z'/></symbol><symbol id='r53ef' viewBox='0 0 100 100'><path d='M5 10v10h68v64c0 2-1 2-3 2c-2 0-11 0-18 0c1 3 3 8 4 10c10 0 17 0 21-2c5-1 6-4 6-10v-64h12v-10zM24 42h23v20h-23zM15 33v46h9v-8h33v-38z'/></symbol><symbol id='r5230' viewBox='0 0 100 100'><path d='M63 12v61h9v-61zM83 5v78c0 2-1 2-2 3c-2 0-8 0-13-1c1 3 3 7 3 9c8 0 13 0 17-1c3-2 4-4 4-10v-78zM6 83l2 9c13-2 32-6 50-10l-1-8l-20 4v-14h19v-8h-19v-10h-9v10h-19v8h19v15c-8 2-16 3-22 4zM12 45c2-1 6-2 36-4c1 2 2 4 3 5l7-5c-2-5-9-14-14-21l-7 4c2 3 4 6 7 9l-23 2c4-5 8-11 11-17h26v-8h-51v8h14c-3 6-6 12-7 14c-2 2-4 4-5 4c1 2 2 7 3 9z'/></symbol><symbol id='r5c97' viewBox='0 0 100 100'><path d='M11 7v21h78v-21h-9v12h-26v-15h-9v15h-25v-12zM10 34v62h10v-53h61v42c0 2-1 3-3 3c-2 0-8 0-15-1c2 3 3 7 3 9c9 0 15 0 19-1c4-2 5-4 5-9v-52zM24 53c7 4 14 8 21 13c-7 5-15 10-23 13c2 2 5 5 6 7c9-4 17-9 24-15c7 5 12 10 16 14l7-7c-4-4-10-8-16-13c5-5 10-11 14-17l-8-3c-4 5-8 11-13 15c-8-4-15-9-22-13z'/></symbol><symbol id='r6027' viewBox='0 0 100 100'><path d='M7 23c0 8-2 19-5 26l8 2c2-7 4-19 4-27zM34 84v9h62v-9h-25v-23h20v-9h-20v-19h22v-9h-22v-20h-9v20h-11c1-4 2-9 3-14l-9-2c-1 10-4 19-7 27c-1-4-4-11-6-15l-6 2v-18h-10v92h10v-72c2 5 5 12 6 16l5-3c-1 3-2 5-3 7c2 1 6 3 8 4c2-4 5-9 6-15h14v19h-21v9h21v23z'/></symbol><symbol id='r521b' viewBox='0 0 100 100'><path d='M82 5v80c0 1 0 2-2 2c-2 0-9 0-15 0c1 3 2 7 3 9c9 0 15 0 19-2c3-1 5-4 5-9v-80zM63 15v56h9v-56zM18 40h-2c6-6 12-14 17-22c7 8 13 16 18 22zM31 4c-6 12-16 26-29 35c2 1 6 5 7 7c2-2 3-3 5-4v40c0 10 3 13 14 13c2 0 15 0 17 0c10 0 12-4 13-18c-2-1-6-2-8-4c0 12-1 14-6 14c-2 0-13 0-15 0c-5 0-6-1-6-5v-34h19c0 11-1 15-2 17c-1 1-2 1-3 1c-2 0-5 0-9-1c2 2 3 6 3 8c4 0 8 0 10 0c3 0 5-1 6-3c3-2 4-9 5-26v-3l1 2l7-6c-5-7-15-18-23-27l2-4z'/></symbol><symbol id='r4f5c' viewBox='0 0 100 100'><path d='M52 5c-5 14-13 29-22 38c2 1 6 5 8 7c4-6 9-13 13-21h6v67h10v-23h29v-9h-29v-13h27v-9h-27v-13h30v-9h-41c2-4 4-9 5-13zM27 4c-5 15-14 29-24 39c2 2 4 7 5 10c3-3 6-7 9-10v53h9v-68c4-7 7-14 10-21z'/></symbol><symbol id='r8005' viewBox='0 0 100 100'><path d='M83 7c-4 4-7 9-11 13v-5h-24v-11h-9v11h-25v9h25v11h-34v8h37c-12 8-25 14-39 19c1 2 4 6 5 8c6-2 12-5 18-8v34h9v-3h38v3h10v-43h-39c4-3 9-6 14-10h37v-8h-27c9-7 16-15 23-24zM48 35v-11h20c-4 4-9 7-13 11zM35 76h38v9h-38zM35 69v-8h38v8z'/></symbol><symbol id='r5019' viewBox='0 0 100 100'><path d='M30 24v53h8v-53zM41 63v8h22c-3 7-9 13-25 19c2 1 4 4 6 6c14-5 21-11 25-18c4 7 11 14 23 18c1-3 4-6 6-8c-15-4-21-11-24-17h22v-8h-23v-1v-11h20v-8h-35c1-2 2-4 3-7l-9-2c-2 9-7 17-12 22c2 2 6 4 7 5c3-2 5-6 7-10h10v11v1zM46 8v8h32l-2 10h-35v8h54v-8h-10c1-5 2-12 3-18h-7h-1zM22 4c-4 15-11 30-19 40c1 2 4 8 5 10c2-3 4-6 6-9v51h9v-68c3-7 6-14 8-22z'/></symbol><symbol id='r9009' viewBox='0 0 100 100'><path d='M5 12c6 5 13 12 16 17l7-6c-3-5-10-12-16-16zM44 7c-3 8-7 17-12 23c2 1 6 4 7 5c3-3 5-6 7-10h14v13h-28v9h17c-1 11-5 20-20 25c3 2 5 6 6 8c17-7 22-18 24-33h8v20c0 9 2 12 11 12c1 0 7 0 8 0c7 0 10-3 11-16c-3-1-7-2-9-4c0 10 0 11-2 11c-2 0-6 0-7 0c-2 0-2 0-2-3v-20h18v-9h-26v-13h22v-8h-22v-13h-9v13h-10c1-3 2-6 2-8zM26 42h-21v9h12v28c-4 2-9 6-13 10l6 8c6-6 11-12 15-12c2 0 5 3 9 5c7 4 15 6 27 6c9 0 26-1 33-2c0-2 2-7 3-9c-10 1-25 2-36 2c-11 0-19-1-25-5c-5-2-7-5-10-5z'/></symbol><symbol id='r4eba' viewBox='0 0 100 100'><path d='M44 4c0 16 1 63-40 84c3 3 6 6 7 8c23-13 34-33 39-52c5 18 16 40 40 52c2-3 4-6 7-8c-35-16-41-56-43-69c1-6 1-11 1-15z'/></symbol><symbol id='r4f60' viewBox='0 0 100 100'><path d='M44 47c-3 12-7 23-13 31c2 1 6 4 8 5c6-8 11-21 14-34zM75 49c5 11 10 25 11 34l10-3c-2-10-7-23-12-34zM46 4c-3 14-9 28-17 37c2 2 6 5 8 7c3-5 7-11 9-17h14v54c0 2 0 2-2 2c-1 0-5 0-10 0c2 3 3 7 4 9c6 0 10 0 14-1c3-2 4-5 4-10v-54h16c-1 5-1 10-2 13l8 2c1-6 3-15 4-23l-6-1h-2h-38c2-5 4-10 5-16zM25 4c-5 15-14 29-24 39c2 2 5 7 5 9c4-3 6-6 9-10v54h9v-68c4-7 8-14 10-21z'/></symbol><symbol id='r770b' viewBox='0 0 100 100'><path d='M35 67h40v6h-40zM35 61v-6h40v6zM35 79h40v7h-40zM82 4c-16 3-46 5-70 5c0 2 1 5 1 7c9 0 18 0 27-1l-2 6h-25v7h22c-1 2-1 4-2 6h-27v8h22c-6 10-14 19-25 25c2 2 5 6 6 8c6-4 12-9 17-14v36h9v-4h40v4h10v-49h-49c1-2 2-4 3-6h55v-8h-51l3-6h43v-7h-41l2-6c14-1 28-2 38-4z'/></symbol><symbol id='r8fd9' viewBox='0 0 100 100'><path d='M5 13c5 5 12 11 14 16l8-6c-3-4-9-11-14-15zM26 41h-21v9h12v27c-5 1-9 5-14 9l7 10c4-6 9-11 12-11c2 0 6 2 10 5c7 3 16 4 28 4c10 0 26 0 34-1c0-3 2-7 3-10c-11 1-26 2-37 2c-11 0-20-1-26-4c-4-2-6-3-8-5zM32 37c8 5 16 12 24 18c-7 7-16 12-27 16c2 2 5 6 6 8c11-5 21-11 28-19c9 7 16 14 21 19l7-7c-5-5-13-12-22-18c6-8 10-16 13-26h13v-9h-31l4-2c-2-4-5-10-8-14l-9 3c3 4 5 9 7 13h-29v9h43c-2 7-6 14-10 20c-8-6-16-12-23-16z'/></symbol><symbol id='r4e2a' viewBox='0 0 100 100'><path d='M45 34v62h10v-62zM50 3c-10 17-28 31-47 39c3 2 5 6 7 9c15-7 29-18 40-31c15 15 28 24 40 31c2-3 5-7 8-9c-14-6-28-15-42-30l3-5z'/></symbol><symbol id='r8bc4' viewBox='0 0 100 100'><path d='M82 22c-1 8-4 18-6 25l8 2c2-6 5-16 8-25zM39 24c2 8 4 18 5 24l8-2c0-6-3-16-5-24zM9 12c5 5 12 12 15 16l6-7c-3-4-10-10-15-15zM36 8v10h24v35h-27v9h27v34h9v-34h27v-9h-27v-35h23v-10zM4 35v9h13v34c0 5-3 8-5 9c2 2 4 5 4 8c2-3 5-5 22-18c-1-2-3-6-4-8l-8 7v-41z'/></symbol><symbol id='r6709' viewBox='0 0 100 100'><path d='M38 4c-1 4-3 8-4 12h-28v9h24c-6 13-15 24-27 32c2 1 5 5 7 7c5-4 10-9 15-14v46h9v-19h40v8c0 2-1 2-3 2c-1 0-8 0-13 0c1 3 2 7 2 9c9 0 14 0 18-1c4-2 5-5 5-9v-51h-48c2-3 4-7 5-10h54v-9h-50c1-3 2-7 4-10zM34 60h40v9h-40zM34 52v-9h40v9z'/></symbol><symbol id='r6ca1' viewBox='0 0 100 100'><path d='M8 12c6 3 14 8 18 11l6-7c-4-3-13-8-19-11zM3 39c6 3 15 8 19 11l5-8c-4-3-13-7-19-10zM6 89l8 6c6-9 12-22 17-32l-7-6c-5 11-13 24-18 32zM44 7v11c0 8-2 16-15 21c2 2 5 5 6 7c15-7 18-18 18-28v-2h18v12c0 9 1 13 10 13c2 0 7 0 9 0c2 0 5 0 6-1c0-2 0-6 0-9c-2 1-5 1-6 1c-2 0-7 0-8 0c-2 0-2-1-2-4v-21zM77 56c-4 7-9 13-15 17c-6-5-11-10-15-17zM34 47v9h8l-4 2c4 8 10 15 16 20c-8 5-17 8-27 10c2 2 4 6 5 8c11-2 21-6 30-11c8 5 18 9 29 11c1-2 4-6 6-8c-10-2-19-5-27-10c9-7 16-16 20-28l-6-3h-2z'/></symbol><symbol id='r8981' viewBox='0 0 100 100'><path d='M66 66c-3 4-7 8-12 12c-7-2-14-4-21-5c2-2 4-5 6-7zM11 23v27h27c-2 2-3 5-5 8h-28v8h23c-4 4-7 8-10 12c8 1 16 3 24 5c-10 3-22 5-36 5c2 2 3 6 4 8c19-1 34-4 45-10c12 4 22 7 30 10l8-7c-8-3-17-6-28-9c4-4 8-8 11-14h19v-8h-51c2-3 3-5 4-7l-5-1h47v-27h-25v-7h28v-8h-87v8h27v7zM42 16h14v7h-14zM20 31h13v11h-13zM42 31h14v11h-14zM65 31h15v11h-15z'/></symbol><symbol id='r8c03' viewBox='0 0 100 100'><path d='M9 11c6 5 13 12 16 16l6-6c-3-5-10-11-15-15zM4 35v9h13v32c0 6-4 10-6 12c2 1 5 4 6 6c1-2 4-4 17-15c-1 5-3 9-6 12c2 1 6 4 7 5c10-13 11-35 11-50v-30h38v70c0 1 0 2-2 2c-1 0-6 0-10 0c1 2 2 6 2 8c8 0 12 0 15-1c3-2 4-5 4-9v-78h-55v38c0 9 0 19-3 29c-1-2-2-4-2-6l-7 6v-40zM61 19v7h-9v7h9v9h-11v7h31v-7h-12v-9h10v-7h-10v-7zM51 56v29h7v-5h20v-24zM58 63h13v10h-13z'/></symbol><symbol id='r6574' viewBox='0 0 100 100'><path d='M20 70v16h-16v8h92v-8h-42v-7h28v-7h-28v-7h35v-7h-78v7h34v21h-16v-16zM63 4c-3 9-7 18-14 24v-8h-16v-4h18v-7h-18v-5h-8v5h-19v7h19v4h-17v19h14c-5 4-12 9-18 11c1 2 4 4 5 6c5-2 11-6 16-11v10h8v-12c4 3 9 6 12 9l4-6c-3-2-8-5-12-7h12v-10c2 1 5 4 6 6c2-2 4-4 5-6c2 4 5 8 8 11c-5 4-11 8-19 10c2 1 5 5 6 7c7-3 13-6 19-11c4 5 10 8 17 11c1-2 4-6 6-8c-7-2-13-5-18-9c4-5 8-11 10-18h6v-8h-27c2-2 3-5 4-8zM16 26h9v7h-9zM33 26h8v7h-8zM33 39h3l-3 3zM80 22c-2 5-4 9-7 13c-3-4-6-9-8-13z'/></symbol><symbol id='r7684' viewBox='0 0 100 100'><path d='M54 46c6 8 12 18 15 24l8-5c-3-6-10-16-15-23zM59 3c-3 14-8 27-15 36v-19h-16c2-5 4-10 5-15l-10-2c-1 5-2 12-3 17h-12v74h9v-8h27v-46c2 1 6 3 8 5c3-5 6-11 9-17h23c-1 38-2 53-5 57c-1 1-3 1-5 1c-2 0-8 0-14 0c1 2 2 6 3 9c5 0 11 0 15 0c4-1 6-2 9-5c4-5 5-21 7-66c0-2 0-5 0-5h-30c2-4 3-9 4-13zM17 28h19v19h-19zM17 78v-23h19v23z'/></symbol><symbol id='rff1f' viewBox='0 0 100 100'><path d='M19 63h10c-2-15 17-17 17-32c0-12-8-19-20-19c-10 0-17 4-23 11l7 6c4-5 9-8 14-8c8 0 11 5 11 11c0 10-19 15-16 31zM24 89c4 0 7-3 7-8c0-4-3-7-7-7c-4 0-8 3-8 7c0 5 4 8 8 8z'/></symbol><symbol id='r6bd4' viewBox='0 0 100 100'><path d='M12 96c2-2 7-4 34-13c-1-2-1-7-1-10l-23 8v-38h24v-9h-24v-29h-10v75c0 4-3 7-5 8c2 2 4 6 5 8zM52 4v74c0 12 4 16 14 16c2 0 12 0 14 0c11 0 14-7 15-28c-3 0-7-2-9-4c-1 18-2 23-6 23c-3 0-11 0-13 0c-4 0-5-1-5-7v-26c11-7 23-15 32-23l-8-9c-6 7-15 15-24 21v-37z'/></symbol><symbol id='r5982' viewBox='0 0 100 100'><path d='M39 33c-2 12-5 23-9 31c-3-3-7-6-11-9c2-7 4-15 5-22zM8 58c6 4 12 9 18 14c-6 8-13 14-22 17c2 2 4 5 6 8c9-5 17-10 23-18c3 3 7 7 9 9l6-8c-2-3-6-6-10-10c6-11 9-26 10-46h-5h-2h-15c2-7 3-14 4-20h-10c0 6-2 13-3 20h-13v9h11c-2 9-4 19-7 25zM53 14v80h9v-8h21v6h10v-78zM62 77v-54h21v54z'/></symbol><symbol id='r67d0' viewBox='0 0 100 100'><path d='M23 4v9h-17v8h17v31h22v7h-39v9h32c-9 8-22 15-35 19c2 2 5 5 7 7c12-4 26-13 35-23v25h10v-25c9 10 23 19 36 23c1-2 4-6 6-8c-12-3-26-10-35-18h33v-9h-40v-7h21v-31h18v-8h-18v-9h-10v9h-33v-9zM66 21v7h-33v-7zM66 36v8h-33v-8z'/></symbol><symbol id='r7ef4' viewBox='0 0 100 100'><path d='M4 82l2 9c9-3 22-6 34-9l-1-8c-13 3-26 6-35 8zM6 46c2-1 4-1 15-3c-4 6-8 11-9 13c-4 3-6 6-8 6c1 2 2 7 3 8c2-1 6-2 30-7c0-2 0-5 1-8l-19 3c7-8 15-19 21-30l-8-4c-2 4-4 8-6 12l-11 1c5-9 11-19 15-30l-8-3c-4 11-11 24-13 28c-2 3-4 5-6 6c1 2 3 6 3 8zM70 50v10h-15v-10zM66 7c3 5 6 11 7 15h-16c3-5 5-10 6-15l-9-3c-3 12-10 26-18 36c2 2 4 6 5 8c1-2 3-4 5-7v55h9v-6h41v-9h-18v-12h14v-9h-14v-10h14v-9h-14v-11h17v-8h-21l7-4c-1-4-4-10-7-14zM70 41h-15v-11h15zM70 69v12h-15v-12z'/></symbol><symbol id='r6743' viewBox='0 0 100 100'><path d='M84 22c-3 16-9 29-16 40c-6-11-10-24-13-40zM86 12h-1h-42v10h4h-1c3 20 8 35 16 48c-7 8-16 14-25 18c2 2 4 6 6 8c9-4 17-10 25-18c6 7 13 13 22 19c2-3 4-6 7-8c-10-6-17-12-23-19c10-14 17-32 20-56l-6-2zM20 4v20h-16v9h14c-3 13-10 28-16 36c1 3 4 7 5 10c5-7 10-17 13-28v45h10v-48c4 5 9 12 11 16l5-9c-2-3-13-15-16-18v-4h12v-9h-12v-20z'/></symbol><symbol id='r91cd' viewBox='0 0 100 100'><path d='M16 34v31h29v6h-33v8h33v7h-40v7h90v-7h-41v-7h35v-8h-35v-6h31v-31h-31v-5h41v-8h-41v-6c12-1 22-2 31-4l-5-7c-16 3-44 4-67 5c1 2 2 5 2 7c9 0 20 0 30-1v6h-39v8h39v5zM25 53h20v6h-20zM54 53h22v6h-22zM25 40h20v7h-20zM54 40h22v7h-22z'/></symbol><symbol id='r6539' viewBox='0 0 100 100'><path d='M61 31h19c-2 11-5 22-9 30c-5-9-8-19-10-30zM7 10v10h27v19h-26v38c0 3-1 5-3 6c1 2 3 7 4 9c2-2 6-4 35-15c0-2-1-6-1-9l-25 9v-29h25c2 2 5 5 6 6c2-3 5-6 6-10c3 10 6 19 10 26c-5 8-13 14-23 18c2 2 5 6 6 9c9-5 17-11 23-18c5 7 12 13 20 17c1-3 4-6 6-8c-8-4-15-10-20-17c6-11 10-24 13-40h6v-9h-32c2-6 3-11 4-17l-9-1c-3 16-8 31-16 41v-35z'/></symbol><symbol id='r60f3' viewBox='0 0 100 100'><path d='M27 68v15c0 9 3 11 16 11c2 0 17 0 19 0c10 0 13-3 14-16c-2-1-6-2-8-4c-1 10-2 12-6 12c-4 0-16 0-19 0c-5 0-6-1-6-3v-15zM41 65c5 5 11 11 14 15l6-6c-3-4-9-10-13-14zM76 68c4 7 9 16 11 21l9-4c-2-6-8-14-12-21zM13 66c-2 7-5 15-9 21l8 4c4-6 7-15 9-21zM60 31h22v8h-22zM60 46h22v8h-22zM60 16h22v8h-22zM51 9v53h40v-53zM23 4v14h-18v8h16c-4 10-11 20-18 25c2 1 5 4 6 6c5-4 10-10 14-17v23h9v-23c4 4 9 8 11 10l5-7c-2-2-13-9-16-12v-5h15v-8h-15v-14z'/></symbol><symbol id='r4ec0' viewBox='0 0 100 100'><path d='M28 4c-6 15-15 30-25 39c2 3 5 8 5 10c4-3 7-7 10-11v54h9v-69c4-7 7-13 9-20zM60 5v33h-27v9h27v49h10v-49h26v-9h-26v-33z'/></symbol><symbol id='r4e48' viewBox='0 0 100 100'><path d='M43 4c-8 14-23 31-38 42c3 2 6 5 8 7c15-12 30-29 40-45zM64 58c4 6 8 12 12 18l-47 4c16-14 32-31 47-52l-10-5c-15 23-35 43-42 49c-7 6-11 9-14 10c1 2 3 7 4 9c4-1 11-1 67-6c2 4 4 7 5 10l9-5c-4-10-14-25-23-36z'/></symbol><symbol id='r5c31' viewBox='0 0 100 100'><path d='M18 38h20v11h-20zM13 60c-2 9-5 17-9 23c2 1 5 3 7 5c4-7 7-17 10-26zM36 62c3 6 6 13 7 18l7-3c-1-5-4-12-7-18zM77 11c4 5 8 12 10 16l6-4c-1-5-6-11-10-15zM10 31v25h15v31c0 1-1 1-2 1c-1 0-4 0-7 0c1 2 2 6 2 8c6 0 9 0 12-2c2-1 3-3 3-7v-31h14v-25zM21 5c2 3 3 7 4 11h-20v8h46v-8h-16c-1-4-3-9-5-13zM65 4c0 8 0 17 0 25h-13v9h12c-1 20-6 40-20 53c2 1 5 4 6 6c13-12 19-30 22-49v34c0 7 0 9 2 10c2 2 4 2 7 2c1 0 5 0 6 0c2 0 4 0 6-1c2-1 3-2 3-4c1-2 2-7 2-12c-3-1-6-3-8-4c0 5 0 9 0 11c0 2-1 2-1 3c-1 0-2 0-3 0c-1 0-2 0-3 0c-1 0-2 0-2 0c-1-1-1-2-1-4v-38h-8l1-7h23v-9h-22c0-8 0-17 0-25z'/></symbol><symbol id='r968f' viewBox='0 0 100 100'><path d='M67 4c-1 3-2 7-3 10h-14v8h11c-3 8-8 14-14 19l1 1h-15v8h8v27c-4 1-8 5-12 11l6 8c3-6 7-13 9-13c2 0 6 3 9 6c6 4 12 5 21 5c6 0 16 0 21 0c0-3 1-7 2-9c-7 1-17 1-23 1c-8 0-14-1-20-5c-2-1-3-2-5-3v-35c2 1 4 3 5 4c2-2 4-4 5-6v40h8v-16h17v8c0 1-1 1-2 1c0 0-3 0-6 0c1 2 2 5 2 7c5 0 8 0 11-1c2-2 3-4 3-7v-43h-26c2-2 3-5 4-8h26v-8h-23c1-3 2-6 2-9zM67 51h17v7h-17zM67 44v-7h17v7zM8 8v88h8v-80h9c-2 7-4 17-6 24c5 8 7 14 7 20c0 3-1 5-2 6c-1 1-2 1-3 1c-1 0-2 0-4 0c2 3 2 6 2 8c2 0 4 0 6 0c2 0 3-1 5-2c2-2 4-6 4-12c0-7-2-14-8-22c3-7 5-15 7-23c4 5 8 11 10 16l6-4c-1-4-6-11-10-16l-5 3l1-4l-6-3h-1z'/></symbol><symbol id='r53d1' viewBox='0 0 100 100'><path d='M67 9c4 5 10 11 12 15l8-5c-3-4-9-10-13-15zM14 37c1-2 5-2 11-2h13c-6 20-17 36-36 46c3 2 6 5 8 8c12-8 22-17 28-29c4 6 8 12 14 17c-9 5-18 9-28 11c2 2 4 6 5 9c11-3 21-8 30-14c9 7 19 11 32 14c1-3 4-7 6-9c-12-2-22-6-30-11c8-7 15-17 19-30l-6-3h-2h-32c1-3 2-6 3-9h45v-9h-42c1-7 2-14 3-21l-10-2c-1 8-3 16-4 23h-17c3-6 6-12 8-18l-10-2c-2 8-6 16-7 18c-1 2-3 4-4 4c1 2 2 7 3 9zM59 72c-6-6-11-12-15-18h29c-3 6-8 12-14 18z'/></symbol><symbol id='r4e0d' viewBox='0 0 100 100'><path d='M55 42c12 8 27 20 34 28l8-8c-8-8-23-19-34-27zM7 10v10h42c-9 16-26 33-45 42c2 2 5 6 6 8c14-6 25-16 35-27v53h10v-66c3-3 5-6 7-10h31v-10z'/></symbol><symbol id='r7528' viewBox='0 0 100 100'><path d='M15 10v36c0 15-1 32-12 45c2 1 6 4 7 6c8-8 11-19 13-31h23v29h10v-29h24v18c0 2-1 3-3 3c-1 0-8 0-15 0c2 2 3 6 3 9c10 0 16 0 19-2c4-1 5-4 5-10v-74zM24 20h22v14h-22zM80 20v14h-24v-14zM24 42h22v15h-22c0-3 0-7 0-10zM80 42v15h-24v-15z'/></symbol><symbol id='r7b49' viewBox='0 0 100 100'><path d='M22 76c6 5 13 11 16 16l7-6c-3-4-9-10-15-14h35v14c0 1 0 2-2 2c-2 0-8 0-14 0c1 2 3 6 4 8c8 0 13 0 17-1c4-1 5-4 5-9v-14h18v-8h-18v-8h21v-8h-41v-7h31v-8h-31v-6h-1c2-2 4-5 6-8h5c3 4 6 9 7 12l8-4c-1-2-2-5-4-8h19v-7h-31c1-3 2-5 3-7l-9-2c-2 6-5 11-9 16v-7h-25c2-2 2-4 3-7l-9-2c-3 9-9 17-15 23c2 1 6 4 7 5c4-3 7-7 10-12h3c2 4 3 9 4 11l8-3c0-2-1-5-3-8h17c-2 2-4 4-5 5l3 3h-2v6h-30v8h30v7h-40v8h60v8h-57v8h19z'/></symbol><symbol id='r6211' viewBox='0 0 100 100'><path d='M70 11c6 5 13 12 16 17l7-5c-3-5-10-12-15-17zM82 46c-3 5-7 11-11 16c-2-6-3-13-4-20h28v-9h-29c0-9-1-19-1-29h-10c0 10 1 20 2 29h-22v-16c6-1 12-3 17-5l-7-8c-9 4-25 7-40 9c2 3 3 6 3 8c6 0 12-1 18-2v14h-21v9h21v16c-9 1-16 2-22 4l2 9l20-4v18c0 1-1 2-3 2c-1 0-7 0-13 0c1 3 3 7 3 9c8 0 14 0 17-1c4-2 5-5 5-10v-20l18-4l-1-9l-17 4v-14h23c1 10 2 20 5 28c-7 6-15 11-23 15c2 2 5 6 6 8c7-4 14-8 20-14c4 11 10 18 18 18c8 0 12-5 13-22c-2-1-6-3-8-5c0 12-1 17-4 17c-4 0-8-5-11-15c6-7 12-14 17-23z'/></symbol><symbol id='r95f2' viewBox='0 0 100 100'><path d='M8 26v70h8v-70zM11 9c6 5 12 13 15 19l8-6c-4-5-10-12-16-18zM36 8v8h47v68c0 2-1 2-3 2c-2 0-8 0-15 0c2 3 3 7 3 10c10 0 16-1 19-2c4-2 5-4 5-10v-76zM46 26v12h-22v8h18c-5 10-13 20-21 25c1 1 4 4 5 7c8-6 14-14 20-23v33h8v-33c7 7 13 15 17 20l7-6c-5-6-13-15-21-23h21v-8h-24v-12z'/></symbol><symbol id='r4e0b' viewBox='0 0 100 100'><path d='M5 11v9h38v76h10v-50c11 6 23 13 30 19l7-9c-8-6-24-15-35-20l-2 2v-18h42v-9z'/></symbol><symbol id='r6765' viewBox='0 0 100 100'><path d='M75 25c-3 6-7 14-10 20l8 2c4-5 8-12 12-19zM18 29c3 5 7 13 8 18l9-3c-1-5-5-13-9-18zM45 4v11h-35v9h35v24h-40v9h34c-9 11-23 22-36 27c2 2 5 6 7 8c12-6 26-17 35-29v33h10v-34c9 13 23 24 35 31c2-3 5-6 7-8c-13-6-27-17-36-28h34v-9h-40v-24h36v-9h-36v-11z'/></symbol><symbol id='b54c6' viewBox='0 0 100 100'><path d='M6 13v68h12v-8h18v-48c2 2 6 5 7 7c6-3 11-6 16-10h17c-3 3-6 6-10 9c-3-2-6-4-8-5l-9 5c2 2 5 4 7 5c-6 3-13 6-19 7c2 2 5 7 6 9c7-2 14-4 21-8c-6 8-14 16-27 21c2 2 6 6 7 8c9-4 16-9 22-14h15c-2 4-5 8-9 11c-2-2-6-4-8-5l-9 5c3 2 6 5 9 7c-9 5-19 9-29 11c2 2 5 7 6 10c26-7 47-20 56-46l-8-4l-2 1h-12c1-3 3-5 4-7l-8-1c9-7 17-15 22-25l-8-4h-2h-14c1-2 3-4 5-6l-12-3c-5 7-14 15-26 21v-11zM18 24h7v37h-7z'/></symbol><symbol id='b5566' viewBox='0 0 100 100'><path d='M60 36c3 14 4 33 4 44l10-2c0-11-2-29-4-44zM6 12v68h9v-9h15v-59zM15 23h6v37h-6zM59 20v10h37v-10h-21l9-3c-1-4-3-10-5-15l-10 2c2 5 4 12 4 16zM55 83v11h42v-11h-11c3-13 6-32 8-48l-11-2c-1 15-4 36-7 50zM40 3v20h-7v10h7v18l-9 3l3 11l6-2v22c0 1 0 1-2 1c-1 0-4 0-7 0c2 3 3 8 3 11c6 0 10-1 13-2c2-2 3-5 3-10v-27l8-3l-1-9l-7 2v-15h7v-10h-7v-20z'/></symbol><symbol id='b68a6' viewBox='0 0 100 100'><path d='M42 43c-6 8-21 16-34 21c2 2 7 6 9 8c7-2 14-6 20-10h31c-4 4-10 8-16 12c-5-3-12-6-16-9l-10 7c4 2 9 4 13 7c-9 3-21 5-32 7c2 2 5 8 6 11c31-5 60-16 73-40l-8-6l-2 1h-26c2-2 3-3 4-4zM22 3v9h-17v10h13c-4 6-10 12-16 15c3 2 6 6 8 9c4-4 8-8 12-14v15h11v-15c3 3 7 7 9 9l6-10c-2-1-10-7-14-9h14v-10h-15v-9zM66 3v9h-15v10h12c-5 6-11 11-17 14c2 2 6 6 8 9c4-3 8-7 12-12v14h11v-16c4 6 9 11 14 14c1-2 5-6 7-8c-6-4-12-9-16-15h14v-10h-19v-9z'/></symbol><symbol id='r5bf9' viewBox='0 0 100 100'><path d='M49 49c5 7 9 16 11 22l8-4c-2-6-6-15-11-22zM8 43c6 5 12 12 18 18c-6 12-13 22-22 27c2 2 5 6 7 8c9-6 16-15 22-27c4 5 8 10 10 15l7-7c-3-5-7-12-13-18c5-11 8-25 9-41l-6-2h-1h-32v9h29c-1 10-3 19-6 27c-5-6-10-10-16-15zM75 4v23h-27v9h27v48c0 2 0 2-2 2c-2 0-7 0-13 0c1 3 2 8 3 10c8 0 14 0 17-2c4-1 5-4 5-10v-48h11v-9h-11v-23z'/></symbol><symbol id='r8bdd' viewBox='0 0 100 100'><path d='M9 12c5 4 12 11 15 15l6-7c-3-4-10-10-15-14zM42 59v37h9v-3h30v3h10v-37h-20v-16h25v-9h-25v-18c7-1 15-2 21-4l-7-8c-11 4-31 7-49 8c1 2 3 6 3 8c7 0 15-1 22-2v16h-25v9h25v16zM51 84v-17h30v17zM4 35v9h13v32c0 5-3 9-6 11c2 1 5 5 6 7c1-2 4-5 22-19c-1-2-3-5-4-8l-9 8v-40z'/></symbol><symbol id='r7531' viewBox='0 0 100 100'><path d='M20 61h25v20h-25zM80 61v20h-26v-20zM20 52v-20h25v20zM80 52h-26v-20h26zM45 4v19h-34v73h9v-5h60v5h9v-73h-35v-19z'/></symbol><symbol id='r751f' viewBox='0 0 100 100'><path d='M22 5c-3 14-10 28-18 37c3 1 7 4 9 5c3-4 7-9 10-15h22v20h-29v9h29v23h-40v9h90v-9h-40v-23h31v-9h-31v-20h35v-10h-35v-18h-10v18h-18c2-4 4-10 5-15z'/></symbol><symbol id='r6210' viewBox='0 0 100 100'><path d='M53 4c0 5 0 10 1 16h-42v28c0 13-1 31-9 43c2 1 7 4 8 6c9-13 11-33 11-47h16c0 15-1 21-2 22c-1 1-2 1-3 1c-2 0-6 0-10 0c1 2 3 6 3 9c4 0 9 0 12 0c2-1 4-2 6-4c2-2 3-11 3-33c0-1 0-4 0-4h-25v-12h32c1 16 4 30 7 42c-6 7-13 13-22 17c2 2 6 6 7 8c7-4 14-9 19-15c5 9 11 15 18 15c8 0 12-5 13-23c-2-1-6-3-8-5c0 13-2 18-4 18c-4 0-8-5-12-14c8-10 13-21 18-34l-10-2c-3 9-6 17-11 25c-3-9-4-20-5-32h32v-9h-11l5-6c-4-3-11-8-17-11l-6 6c5 3 12 7 16 11h-20c0-6 0-11 0-16z'/></symbol><symbol id='r8868' viewBox='0 0 100 100'><path d='M24 96c3-1 7-3 35-11c0-2-1-6-1-9l-23 7v-20c5-4 10-8 14-12c8 21 21 35 42 43c1-3 4-7 6-9c-9-3-17-7-24-13c6-4 13-8 19-13l-8-6c-4 4-11 9-16 13c-4-5-7-10-10-16h36v-8h-40v-7h32v-8h-32v-7h36v-8h-36v-8h-9v8h-35v8h35v7h-30v8h30v7h-39v8h31c-9 8-22 15-34 19c2 2 5 5 6 7c5-2 11-4 16-7v12c0 4-3 6-5 7c2 2 4 6 4 8z'/></symbol><symbol id='r5f00' viewBox='0 0 100 100'><path d='M64 19v27h-26v-4v-23zM5 46v9h23c-2 12-7 25-23 35c2 1 6 5 7 7c18-12 24-27 26-42h26v41h10v-41h21v-9h-21v-27h18v-9h-84v9h20v23v4z'/></symbol><symbol id='r59cb' viewBox='0 0 100 100'><path d='M46 55v41h8v-4h28v4h9v-41zM54 84v-20h28v20zM43 48c3-1 8-2 43-5c2 3 3 5 3 7l9-4c-3-8-10-19-17-28l-8 4c3 4 6 8 9 13l-28 2c6-9 12-20 17-31l-10-2c-4 12-12 25-15 29c-2 3-4 6-6 6c1 3 3 7 3 9zM21 33h9c-1 11-3 21-6 29c-3-2-6-5-9-7c2-7 4-14 6-22zM6 58c4 4 10 8 14 12c-4 9-10 15-16 19c2 1 4 5 5 7c8-4 13-11 18-19c3 3 6 7 8 9l6-7c-2-3-6-7-10-11c4-11 7-26 8-44h-5h-2h-10c2-7 2-13 3-19l-9-1c0 6-1 13-2 20h-10v9h8c-2 9-4 19-6 25z'/></symbol><symbol id='r63d2' viewBox='0 0 100 100'><path d='M74 63v8h10v12h-14v-47h25v-9h-25v-11c8-1 15-3 21-4l-5-8c-11 3-30 6-46 6c1 3 2 6 2 8c6 0 13-1 20-1v10h-25v9h25v47h-14v-12h10v-8h-10v-11c3-1 7-2 11-3l-5-8c-4 2-10 4-15 6v49h9v-4h36v5h8v-53h-18v8h10v11zM15 4v19h-10v9h10v21l-12 3l2 9l10-3v24c0 1 0 1-1 1c-1 0-4 0-8 0c2 3 3 7 3 9c6 0 9 0 12-2c2-1 3-4 3-8v-26l11-4l-1-8l-10 2v-18h9v-9h-9v-19z'/></symbol><symbol id='r5165' viewBox='0 0 100 100'><path d='M28 13c7 5 12 10 16 16c-6 28-18 48-40 59c2 2 7 6 8 8c20-12 32-30 40-54c11 19 18 41 40 54c1-4 3-9 5-11c-33-20-31-57-63-80z'/></symbol><symbol id='r9875' viewBox='0 0 100 100'><path d='M45 42v18c0 11-5 22-40 29c2 2 4 5 5 7c39-8 45-22 45-36v-18zM54 78c12 5 27 13 34 19l6-8c-8-5-23-13-34-18zM16 28v47h10v-38h49v38h10v-47h-36c2-3 3-7 5-10h40v-9h-87v9h36c-1 3-2 7-4 10z'/></symbol><symbol id='r9762' viewBox='0 0 100 100'><path d='M40 55h19v10h-19zM40 48v-9h19v9zM40 73h19v9h-19zM6 10v9h37c0 3-1 7-2 11h-31v66h9v-5h61v5h10v-66h-39l3-11h41v-9zM19 82v-43h13v43zM80 82h-13v-43h13z'/></symbol><symbol id='r5e03' viewBox='0 0 100 100'><path d='M39 3c-1 5-3 10-5 15h-28v10h24c-7 12-16 24-28 32c2 2 5 6 6 8c5-3 10-7 14-12v31h9v-34h19v43h10v-43h20v23c0 2-1 2-2 2c-2 0-8 0-13 0c1 2 3 6 3 8c8 0 13 0 17-1c3-1 4-4 4-9v-32h-29v-12h-10v12h-19c3-5 7-11 9-16h54v-10h-50c2-4 3-8 5-12z'/></symbol><symbol id='r5c40' viewBox='0 0 100 100'><path d='M15 9v24c0 16-1 39-13 55c2 1 6 4 8 6c8-12 12-28 13-42h59c-1 23-2 32-4 34c-1 2-2 2-3 2c-2 0-7 0-11-1c1 3 2 7 2 9c6 0 10 0 13 0c3 0 6-1 8-4c3-3 4-15 5-45c0-1 0-4 0-4h-68v-7h61v-27zM24 17h51v11h-51zM31 59v32h8v-6h30v-26zM39 66h21v12h-21z'/></symbol><symbol id='r516c' viewBox='0 0 100 100'><path d='M31 6c-5 15-15 29-26 38c2 2 6 5 8 7c11-10 22-26 29-42zM68 6l-10 3c8 15 20 32 31 42c2-3 5-7 8-9c-11-8-23-23-29-36zM16 90c4-1 10-2 61-5c3 4 5 8 6 11l10-5c-5-9-15-23-24-34l-9 4c4 4 8 10 11 15l-42 2c9-11 19-25 27-40l-11-4c-7 16-20 34-24 38c-3 5-6 8-9 8c1 3 3 8 4 10z'/></symbol><symbol id='r5f0f' viewBox='0 0 100 100'><path d='M71 9c5 4 11 9 14 13l6-6c-3-4-9-9-14-12zM56 4c0 6 0 12 0 18h-51v9h51c3 36 11 65 28 65c8 0 12-4 13-22c-3-2-6-4-8-6c-1 13-2 19-4 19c-9 0-16-24-19-56h29v-9h-29c0-6 0-12 0-18zM6 84l2 10c13-3 31-7 48-11l-1-9l-20 4v-25h18v-9h-44v9h17v27z'/></symbol><symbol id='r6570' viewBox='0 0 100 100'><path d='M44 5c-2 4-5 10-8 13l6 3c3-3 6-8 9-13zM8 8c2 5 5 10 6 14l7-4c-1-3-4-8-6-12zM39 63c-2 4-5 8-8 12c-3-2-7-4-10-5l4-7zM10 73c4 2 10 4 15 7c-7 4-14 7-21 9c1 1 3 5 4 7c9-3 17-6 24-12c4 2 6 4 8 6l6-7c-2-1-5-3-8-5c6-5 10-12 12-21l-5-2h-1h-15l2-4l-9-2c0 2-1 4-2 6h-13v8h9c-2 4-4 7-6 10zM25 4v18h-20v7h17c-5 6-12 12-19 14c2 2 4 5 5 7c6-3 12-8 17-13v11h8v-13c5 4 10 8 12 10l5-7c-2-1-9-6-14-9h17v-7h-20v-18zM62 4c-2 18-7 35-15 45c2 2 6 5 7 6c3-3 5-7 6-11c3 9 5 17 9 24c-6 9-13 16-24 21c2 2 4 6 5 8c10-5 18-12 23-20c5 8 11 14 18 19c2-3 5-6 7-8c-8-4-15-11-20-20c5-10 9-22 11-37h6v-8h-27c1-6 2-12 3-18zM80 31c-2 11-4 19-6 27c-4-8-6-17-8-27z'/></symbol><symbol id='r636e' viewBox='0 0 100 100'><path d='M48 64v32h9v-3h28v3h8v-32h-19v-11h22v-8h-22v-10h19v-27h-54v30c0 16-1 38-11 53c2 1 6 4 8 5c8-11 11-28 12-43h18v11zM48 16h36v11h-36zM48 35h18v10h-18v-7zM57 85v-13h28v13zM16 4v19h-12v9h12v20l-13 4l2 9l11-3v23c0 1-1 2-2 2c-1 0-5 0-9 0c1 2 2 6 3 8c6 1 10 0 13-1c2-2 3-4 3-9v-26l11-4l-1-8l-10 3v-18h11v-9h-11v-19z'/></symbol><symbol id='r56fe' viewBox='0 0 100 100'><path d='M37 61c8 1 18 5 24 8l4-6c-6-3-16-6-24-8zM27 73c14 2 31 6 41 9l4-6c-10-4-27-7-40-9zM8 8v88h9v-4h66v4h9v-88zM17 84v-68h66v68zM41 17c-5 8-13 16-22 21c2 1 5 4 7 5c2-1 5-3 7-6c3 3 6 5 10 8c-8 3-17 6-25 8c1 1 3 5 4 7c9-2 20-6 29-10c8 4 17 7 26 9c1-2 3-5 5-7c-8-2-16-4-24-7c8-5 14-11 18-17l-5-3h-2h-24c1-1 3-3 4-5zM39 32h24c-4 4-8 6-13 9c-4-3-8-5-11-9z'/></symbol><symbol id='r8bbe' viewBox='0 0 100 100'><path d='M11 11c6 5 13 11 16 16l6-7c-3-4-10-10-16-15zM4 35v9h13v33c0 5-3 8-5 10c2 1 4 5 5 8c2-3 5-5 23-19c-1-2-3-6-4-8l-10 8v-41zM48 7v11c0 7-2 15-15 21c2 1 5 5 7 7c14-7 17-18 17-28v-2h16v14c0 8 1 12 10 12c1 0 5 0 7 0c2 0 4 0 6-1c-1-2-1-6-1-8c-2 0-4 1-5 1c-2 0-5 0-6 0c-2 0-2-2-2-4v-23zM79 56c-4 7-8 13-14 18c-6-5-11-11-14-18zM38 47v9h6l-2 1c4 9 9 16 15 22c-7 4-15 7-24 9c1 2 3 6 4 8c10-2 19-6 27-11c8 5 17 9 27 12c1-3 4-7 6-9c-9-2-18-5-25-9c8-7 15-17 19-29l-6-3h-2z'/></symbol><symbol id='r7f6e' viewBox='0 0 100 100'><path d='M66 14h14v7h-14zM43 14h14v7h-14zM20 14h14v7h-14zM18 45v42h-13v7h90v-7h-13v-42h-31l1-5h40v-7h-39l1-5h36v-21h-79v21h33v5h-37v7h36l-1 5zM27 87v-5h45v5zM27 61h45v5h-45zM27 56v-5h45v5zM27 71h45v5h-45z'/></symbol><symbol id='r6392' viewBox='0 0 100 100'><path d='M17 4v19h-12v9h12v20l-13 4l1 9l12-3v23c0 2 0 2-2 2c-1 0-5 0-9 0c2 2 3 6 3 9c7 0 11-1 13-2c3-2 4-4 4-9v-26l11-3l-1-9l-10 3v-18h10v-9h-10v-19zM38 62v9h16v25h9v-92h-9v16h-14v8h14v13h-14v9h14v12zM71 4v92h9v-25h16v-9h-16v-12h14v-9h-14v-13h15v-8h-15v-16z'/></symbol><symbol id='r540d' viewBox='0 0 100 100'><path d='M25 36c5 4 10 8 14 12c-11 5-23 10-35 12c2 2 4 6 5 9c5-2 10-3 16-5v32h9v-4h42v4h9v-43h-36c15-9 28-21 36-36l-7-4l-1 1h-33c2-3 4-6 6-9l-10-2c-6 10-18 20-34 28c2 1 5 5 6 7c10-4 17-10 24-16h35c-6 8-14 15-23 21c-4-4-11-9-16-12zM76 83h-42v-21h42z'/></symbol><symbol id='b6392' viewBox='0 0 100 100'><path d='M16 3v19h-12v11h12v18c-5 1-10 2-13 3l2 12l11-3v21c0 1-1 1-2 1c-1 0-5 0-9 0c2 3 3 8 4 11c6 0 11 0 14-2c3-2 4-5 4-10v-24l10-3l-1-11l-9 2v-15h9v-11h-9v-19zM37 61v11h15v25h12v-93h-12v15h-13v10h13v11h-12v11h12v10zM70 4v93h12v-25h15v-10h-15v-11h13v-11h-13v-11h14v-10h-14v-15z'/></symbol><symbol id='b540d' viewBox='0 0 100 100'><path d='M24 38c3 3 8 6 12 10c-10 5-22 9-33 11c2 3 5 8 6 11c5-1 10-3 15-4v31h12v-4h38v4h12v-45h-33c14-9 26-20 33-35l-9-5l-2 1h-29c2-3 4-5 6-8l-14-3c-6 10-17 20-33 27c2 2 6 7 8 10c9-5 16-10 23-15h32c-6 7-13 13-21 18c-4-4-10-8-14-11zM74 82h-38v-19h38z'/></symbol><symbol id='b59d3' viewBox='0 0 100 100'><path d='M28 34c-1 9-2 17-4 24l-7-5c1-6 3-12 5-19zM40 84v11h57v-11h-21v-20h17v-11h-17v-17h19v-11h-19v-21h-12v21h-9c2-5 3-10 3-14l-11-2c-2 11-5 22-9 31c1-5 1-11 2-16l-7-1h-2h-7c1-7 2-13 3-19l-12-1c0 6-1 13-2 20h-9v11h7c-2 9-4 17-6 24c4 3 9 7 14 11c-4 9-9 15-16 18c2 3 5 7 7 10c7-5 13-11 18-20c3 3 5 6 7 8l7-10c-3-3-6-6-9-9c2-6 3-13 5-21c2 1 6 3 8 5c2-4 4-9 6-14h12v17h-18v11h18v20z'/></symbol><symbol id='b5b66' viewBox='0 0 100 100'><path d='M44 53v7h-39v11h39v12c0 2-1 2-3 2c-2 0-9 0-16 0c2 3 4 8 5 11c9 0 15 0 20-1c4-2 6-5 6-11v-13h39v-11h-39v-2c8-4 17-10 23-15l-8-6h-2h-46v11h32c-4 2-8 4-11 5zM41 6c2 4 5 9 6 13h-17l4-2c-1-4-5-9-9-13l-10 4c3 4 5 8 7 11h-15v22h11v-11h64v11h12v-22h-15c3-4 6-8 9-11l-13-4c-2 4-5 10-8 15h-13l5-2c-1-5-4-11-7-15z'/></symbol><symbol id='b5386' viewBox='0 0 100 100'><path d='M10 7v35c0 15-1 35-8 48c3 2 9 5 11 7c8-15 9-38 9-55v-24h73v-11zM48 23c0 5 0 9 0 14h-22v11h21c-2 17-8 30-25 40c2 2 6 6 7 8c20-11 27-28 30-48h20c-1 22-2 32-4 34c-2 1-3 1-5 1c-2 0-8 0-14 0c3 3 4 8 4 12c6 0 12 0 16 0c4-1 6-2 9-5c4-5 5-17 7-48c0-1 0-5 0-5h-32c1-5 1-9 1-14z'/></symbol><symbol id='b80cc' viewBox='0 0 100 100'><path d='M71 53v5h-41v-5zM17 44v53h13v-17h41v5c0 1-1 2-3 2c-1 0-8 0-13-1c2 3 4 8 4 11c8 0 14 0 18-2c5-1 6-4 6-10v-41zM30 66h41v6h-41zM31 3v8h-23v9h23v6c-10 2-19 3-26 4l2 10l24-5v7h12v-39zM53 3v25c0 10 3 13 15 13c2 0 12 0 14 0c9 0 12-3 13-13c-3-1-8-3-10-4c-1 6-1 7-4 7c-2 0-10 0-11 0c-4 0-5 0-5-3v-5c9-2 19-5 27-8l-7-8c-5 2-13 4-20 6v-10z'/></symbol><symbol id='b666f' viewBox='0 0 100 100'><path d='M27 25h45v4h-45zM27 14h45v4h-45zM30 62h40v5h-40zM60 83c9 4 21 9 26 13l8-8c-6-3-17-8-26-11zM27 76c-6 5-15 9-24 11c3 2 7 6 9 9c8-4 19-9 26-15zM42 38l2 2h-39v10h89v-10h-38c0-1-1-2-2-4h30v-30h-68v30h30zM18 54v22h26v10c0 1 0 2-2 2c-1 0-6 0-10 0c1 2 2 6 3 9c7 0 12 0 16-1c4-2 5-4 5-9v-11h26v-22z'/></symbol><symbol id='b4e13' viewBox='0 0 100 100'><path d='M40 2l-3 10h-24v12h21l-2 8h-27v12h24c-3 7-5 14-7 19h10h3h32c-4 5-9 9-14 13c-7-2-15-4-22-6l-6 9c16 5 37 13 48 19l7-11c-4-2-9-4-14-6c8-8 17-17 24-24l-10-6l-2 1h-39l2-8h53v-12h-49l2-8h40v-12h-37l2-8z'/></symbol><symbol id='b4e1a' viewBox='0 0 100 100'><path d='M6 27c5 13 10 29 12 39l12-5c-2-9-8-25-13-37zM83 24c-3 12-9 26-14 36v-56h-12v76h-14v-76h-12v76h-26v12h90v-12h-26v-19l9 5c5-10 12-24 16-36z'/></symbol><symbol id='b7c89' viewBox='0 0 100 100'><path d='M4 12c1 7 3 16 4 22l9-2c-1-6-3-15-5-22zM34 9c-1 6-3 14-5 21v-27h-11v34h-14v11h11c-3 9-8 19-13 26c2 3 5 8 6 12c4-5 7-12 10-19v30h11v-32c3 3 5 7 7 10l7-10c-2-2-10-11-14-14v-3h11v-8c2 3 3 7 3 9c1-1 2-2 3-3v6h9c-1 17-6 29-18 36c2 2 6 7 7 9c14-9 20-24 23-45h11c-1 22-2 30-4 32c-1 1-2 2-3 2c-2 0-5 0-9-1c2 3 3 8 4 11c4 0 8 0 11 0c3-1 5-2 7-5c3-3 4-15 5-44l1 1c1-4 5-8 8-10c-9-8-14-18-17-34l-11 2c3 15 7 26 14 35h-33c8-9 12-21 15-34l-12-2c-2 13-6 25-15 31v1h-10v-5l7 2c3-6 6-15 8-23z'/></symbol><symbol id='b4e1d' viewBox='0 0 100 100'><path d='M5 81v11h91v-11zM12 75c3-1 8-2 36-3c-1-3 0-8 0-11l-22 1c9-11 19-24 26-37l-10-5c-3 5-6 11-10 16l-10 1c6-9 11-19 16-30l-12-4c-4 12-11 26-13 29c-3 3-4 6-6 6c1 3 3 9 3 11c2-1 5-1 15-2c-3 5-6 8-8 10c-3 4-6 7-9 7c2 3 3 9 4 11zM54 75c3-2 8-2 39-4c0-2 0-7 1-11l-26 2c10-11 20-23 28-36l-11-6c-3 6-6 11-9 16h-12c6-8 12-18 16-29l-11-4c-4 12-11 25-14 29c-2 3-4 5-6 6c1 3 3 8 3 10c2 0 5-1 16-2c-4 5-7 9-9 11c-4 4-6 6-9 7c1 3 3 8 4 11z'/></symbol><symbol id='b91cf' viewBox='0 0 100 100'><path d='M29 21h41v4h-41zM29 12h41v4h-41zM17 6v25h65v-25zM5 34v8h91v-8zM27 61h17v4h-17zM56 61h17v4h-17zM27 52h17v3h-17zM56 52h17v3h-17zM4 86v8h92v-8h-40v-4h31v-8h-31v-3h29v-25h-69v25h28v3h-31v8h31v4z'/></symbol><symbol id='b7206' viewBox='0 0 100 100'><path d='M6 24c0 8-1 19-4 25l8 3c2-8 3-19 4-27zM29 20c0 7-2 16-4 21l6 3c2-5 5-14 7-21zM46 72c2 2 4 5 5 7l7-5c-1-2-4-5-6-7zM50 23h30v4h-30zM50 13h30v3h-30zM15 4v34c0 18-1 36-13 50c3 2 6 6 8 8c6-7 9-15 12-24c2 6 5 11 7 15l7-8c-2-3-9-15-12-19c1-7 1-14 1-22v-34zM70 47v4h-10v-4zM70 39h-10v-5h10zM40 5v29h9v5h-12v8h12v4h-15v9h12c-4 3-10 5-14 7c2 1 4 5 6 7c7-3 15-9 20-14h17c4 6 11 12 17 14c2-2 5-5 7-7c-5-1-10-4-14-7h11v-9h-15v-4h12v-8h-12v-5h10v-29zM34 86l4 8c6-3 14-7 22-10v3c0 1 0 2-1 2c-1 0-5 0-8 0c1 2 3 5 3 8c6 0 10 0 13-1c3-2 4-4 4-8v-4c6 4 12 7 16 10l6-7c-3-2-8-5-14-8c3-2 5-4 7-6l-7-5c-2 3-4 6-7 8h-1v-14h-11v13c-9 4-19 8-26 11z'/></symbol><symbol id='b6b3e' viewBox='0 0 100 100'><path d='M9 66c-1 7-4 15-7 20c2 1 7 3 9 4c3-5 6-14 8-21zM36 70c3 5 5 12 6 16l10-4c-1-4-4-11-7-16zM66 39v4c0 13-2 32-18 46c2 2 7 6 9 8c7-7 12-15 15-23c4 10 10 18 18 23c2-3 5-8 8-10c-11-6-18-19-21-34c0-3 0-7 0-9v-5zM22 4v7h-18v10h18v5h-15v10h42v-10h-15v-5h17v-10h-17v-7zM3 55v9h19v22c0 0 0 1-1 1c-1 0-4 0-7 0c1 3 2 7 3 10c5 0 9 0 13-2c3-1 4-4 4-9v-22h18v-9zM87 21h-2h-18c1-5 2-11 3-16l-12-2c-1 14-4 28-10 38v-1h-41v10h41v-4c3 2 6 4 8 6c3-6 6-12 8-20h20c-1 6-3 12-4 17l10 3c2-8 5-19 7-29l-8-2z'/></symbol><symbol id='b6848' viewBox='0 0 100 100'><path d='M5 64v10h30c-8 6-21 10-33 12c3 3 6 7 8 10c12-3 24-9 34-16v17h12v-18c9 8 22 14 35 17c1-3 5-8 7-10c-12-2-24-6-33-12h31v-10h-40v-6h-12v6zM41 6l2 4h-36v15h11v-5h22c-2 2-4 4-5 7h-30v9h22c-4 4-7 7-10 10c7 1 13 2 19 3c-8 2-18 3-30 4c2 2 3 6 4 9c19-2 33-4 44-9c12 3 22 6 29 9l10-8c-7-2-17-5-27-8c4-2 7-6 9-10h20v-9h-47l4-5l-8-2h38v5h11v-15h-38c-1-3-3-6-4-8zM62 36c-3 3-6 6-9 8c-6-2-12-3-18-4l4-4z'/></symbol><symbol id='b4f8b' viewBox='0 0 100 100'><path d='M67 14v57h10v-57zM83 4v78c0 2-1 3-3 3c-2 0-7 0-13-1c1 4 3 9 3 12c9 0 15 0 19-2c3-2 5-5 5-12v-78zM35 61c3 2 6 5 8 8c-4 8-9 15-15 19c3 2 6 6 8 9c16-12 24-34 27-66l-7-1h-2h-8c1-4 2-7 2-11h16v-11h-34v11h7c-3 15-7 28-14 37c3 2 7 6 9 8c4-6 8-14 11-23h9c-1 6-3 12-4 17l-7-5zM18 3c-4 14-9 27-16 37c2 3 4 10 5 13c2-2 3-4 4-6v50h11v-73c3-6 5-12 7-18z'/></symbol><symbol id='b5de5' viewBox='0 0 100 100'><path d='M4 78v12h92v-12h-40v-52h34v-13h-80v13h33v52z'/></symbol><symbol id='b5177' viewBox='0 0 100 100'><path d='M20 8v57h-16v10h25c-6 5-17 10-26 13c3 3 7 7 9 9c10-3 22-10 30-16l-8-6h30l-6 7c11 4 23 11 29 15l10-9c-6-3-16-8-26-13h25v-10h-15v-57zM32 65v-6h36v6zM32 31h36v5h-36zM32 23v-6h36v6zM32 45h36v5h-36z'/></symbol><symbol id='b80fd' viewBox='0 0 100 100'><path d='M35 49v5h-15v-5zM9 39v58h11v-19h15v7c0 1 0 1-2 1c-1 0-5 0-8 0c1 3 3 8 3 11c6 0 11 0 14-2c4-2 5-5 5-10v-46zM20 63h15v6h-15zM85 9c-5 3-12 6-19 9v-15h-11v31c0 11 3 14 14 14c3 0 11 0 14 0c9 0 12-4 14-16c-4-1-8-3-11-5c0 9-1 11-4 11c-2 0-10 0-11 0c-4 0-5-1-5-4v-6c9-3 19-6 26-10zM86 54c-5 4-12 7-19 10v-14h-12v32c0 11 3 14 15 14c2 0 11 0 14 0c9 0 12-4 14-18c-4-1-8-2-11-4c0 10-1 12-5 12c-2 0-9 0-11 0c-4 0-4-1-4-4v-8c9-3 19-7 26-11zM9 34c2-1 6-1 30-3c1 1 2 3 2 5l11-5c-2-6-7-15-11-22l-11 4c2 3 4 6 5 9l-14 1c3-5 7-11 10-17l-12-3c-3 7-8 14-9 16c-2 2-4 4-5 4c1 3 3 9 4 11z'/></symbol><symbol id='b529b' viewBox='0 0 100 100'><path d='M38 3v21h-30v12h30c-2 18-9 38-34 52c3 2 8 6 10 10c28-16 35-41 37-62h28c-2 30-4 43-7 46c-1 2-2 2-5 2c-2 0-8 0-15 0c3 3 4 8 5 12c6 0 12 0 16 0c4-1 7-2 10-6c5-5 6-20 9-60c0-2 0-6 0-6h-41v-21z'/></symbol><symbol id='r5927' viewBox='0 0 100 100'><path d='M45 4c0 8 0 17-1 28h-38v9h36c-4 19-14 37-38 47c3 2 6 6 7 8c23-11 34-28 39-46c8 21 20 37 39 46c2-3 5-7 7-9c-19-8-32-25-38-46h36v-9h-40c1-10 1-20 1-28z'/></symbol><symbol id='r672a' viewBox='0 0 100 100'><path d='M45 4v15h-32v10h32v15h-39v10h34c-9 12-23 23-37 29c2 2 5 6 7 8c12-6 25-17 35-29v34h10v-35c9 13 23 24 35 30c2-2 5-6 7-8c-14-6-28-17-37-29h35v-10h-40v-15h33v-10h-33v-15z'/></symbol><symbol id='r77e5' viewBox='0 0 100 100'><path d='M54 12v82h9v-8h19v6h9v-80zM63 77v-56h19v56zM14 4c-2 11-6 23-11 31c2 1 6 4 7 5c3-4 6-9 8-14h6v14v4h-20v9h19c-1 12-6 26-20 36c2 1 5 5 7 7c10-8 16-18 20-28c5 6 12 15 15 20l7-8c-3-4-15-17-20-22l1-5h18v-9h-17v-3v-15h14v-9h-27c1-4 2-8 3-12z'/></symbol><symbol id='r6587' viewBox='0 0 100 100'><path d='M42 6c3 4 5 11 7 15h-44v9h15c6 15 14 28 23 38c-10 9-24 15-40 19c2 3 5 7 6 9c16-5 30-12 41-21c11 9 25 16 41 21c1-3 4-7 6-9c-15-4-29-11-39-19c9-10 17-23 22-38h16v-9h-46l9-3c-1-4-4-10-7-15zM50 61c-8-9-15-19-20-31h39c-4 13-10 23-19 31z'/></symbol><symbol id='r7ae0' viewBox='0 0 100 100'><path d='M25 59h50v6h-50zM25 46h50v6h-50zM16 40v31h29v6h-40v8h40v11h10v-11h40v-8h-40v-6h29v-31zM65 19c-1 2-3 6-4 9h-22c-1-3-3-7-4-9zM42 4c2 2 3 5 4 7h-35v8h23l-8 1c1 3 2 5 3 8h-24v7h90v-7h-24l4-8l-8-1h22v-8h-33c-1-3-2-6-4-9z'/></symbol><symbol id='r5355' viewBox='0 0 100 100'><path d='M24 45h21v9h-21zM55 45h22v9h-22zM24 29h21v9h-21zM55 29h22v9h-22zM70 4c-2 5-6 12-10 17h-23l4-2c-2-4-6-11-10-15l-8 4c3 4 7 9 9 13h-18v41h31v8h-40v9h40v17h10v-17h40v-9h-40v-8h32v-41h-16c3-4 6-9 9-14z'/></symbol><symbol id='r7bc7' viewBox='0 0 100 100'><path d='M24 60v36h9v-15h11v13h7v-13h11v13h8v-13h12v7c0 1-1 2-2 2c-1 0-5 0-8 0c0 2 2 4 2 6c6 0 10 0 13-1c3-1 3-3 3-7v-28zM33 74v-7h11v7zM82 74h-12v-7h12zM51 74v-7h11v7zM44 26c1 2 2 4 4 6h-32v16c0 14-1 30-12 43c2 1 6 4 7 6c11-13 13-29 13-43h64v-22h-30c-1-2-2-5-4-7c2-2 4-4 6-7h7c3 4 5 8 7 11l8-3c-1-2-3-5-4-8h16v-7h-30c1-2 2-4 3-6l-9-2c-3 7-8 14-14 19c1 0 3 1 5 2zM25 39h54v8h-54zM18 3c-3 9-9 18-16 23c3 2 6 4 8 6c4-4 7-9 10-14h4c2 4 4 8 5 11l8-3c-1-2-2-5-4-8h15v-7h-24c1-2 2-4 3-6z'/></symbol><symbol id='r9605' viewBox='0 0 100 100'><path d='M36 45h27v10h-27zM8 27v69h10v-69zM10 9c4 5 9 11 11 15l8-6c-2-4-8-9-12-13zM31 25c3 3 6 8 7 12h-10v25h10c-1 10-5 17-17 21c2 1 5 5 5 7c14-6 19-15 20-28h6v16c0 7 2 10 10 10c1 0 6 0 8 0c5 0 8-3 8-13c-2-1-5-2-7-3c0 7 0 8-2 8c-1 0-5 0-6 0c-2 0-2 0-2-2v-16h11v-25h-10c2-4 5-9 8-14l-9-2c-2 5-6 11-9 16h-11l5-3c-1-3-5-9-8-13zM35 9v8h48v69c0 1-1 2-2 2c-1 0-5 0-9-1c1 3 2 7 2 9c7 0 11 0 14-2c3-1 4-4 4-8v-77z'/></symbol><symbol id='r8bfb' viewBox='0 0 100 100'><path d='M44 43c5 3 11 7 14 10l4-5c-3-3-9-7-14-9zM68 78c8 6 18 14 23 19l6-6c-5-6-15-13-23-18zM9 12c6 4 13 11 16 15l7-7c-4-4-11-10-17-15zM36 28v8h48c-1 4-3 8-4 11l8 2c2-5 4-13 6-20l-6-1h-1h-17v-8h20v-8h-20v-8h-10v8h-20v8h20v8zM4 35v9h13v34c0 6-3 9-4 10c1 2 3 5 4 7c2-2 5-5 20-18c-1-2-2-4-3-7h24c-4 7-12 14-26 20c2 1 5 5 6 7c18-7 27-17 31-27h26v-8h-24c1-4 1-8 1-11v-12h-9v12c0 3 0 7-1 11h-10l4-4c-4-4-10-8-15-10l-5 4c5 3 11 7 14 10h-16v8v-1l-8 6v-40z'/></symbol><symbol id='r7c7b' viewBox='0 0 100 100'><path d='M74 5c-3 5-7 11-10 15l8 2c3-3 8-9 12-14zM17 9c4 4 8 10 10 14h-20v8h31c-8 8-21 14-33 17c2 2 4 5 6 8c13-4 25-11 34-21v15h10v-12c12 5 26 13 34 17l5-7c-8-5-22-11-34-17h34v-8h-39v-19h-10v19h-16l7-4c-2-4-6-9-11-13zM45 52c0 4-1 7-1 10h-38v9h34c-5 8-15 13-36 17c2 2 4 6 5 8c24-4 35-12 41-23c8 13 21 20 41 23c1-2 4-6 6-8c-18-2-31-8-38-17h35v-9h-40c0-3 1-6 1-10z'/></symbol><symbol id='r56e2' viewBox='0 0 100 100'><path d='M8 8v88h10v-3h64v3h10v-88zM18 84v-68h64v68zM54 20v12h-31v8h28c-8 11-20 20-30 25c2 2 5 5 6 6c9-5 19-12 27-21v20c0 1 0 1-2 1c-1 0-5 0-9 0c1 2 2 6 3 8c6 0 10 0 13-1c3-2 4-4 4-8v-30h14v-8h-14v-12z'/></symbol><symbol id='r961f' viewBox='0 0 100 100'><path d='M9 8v88h9v-80h14c-2 7-5 15-8 22c8 7 10 14 10 19c0 3-1 6-3 7c-1 0-2 0-3 0c-2 0-3 0-6 0c2 3 3 7 3 9c2 0 5 0 7 0c2 0 4-1 6-2c3-2 5-7 5-13c0-6-2-13-10-21c4-8 8-17 11-26l-7-4l-1 1zM61 4c0 33 1 68-27 85c2 2 6 5 7 7c14-9 21-22 25-38c4 14 11 29 25 38c1-2 4-5 7-7c-23-15-27-46-28-56c1-9 1-19 1-29z'/></symbol><symbol id='r6536' viewBox='0 0 100 100'><path d='M60 32h20c-2 11-5 21-9 30c-5-9-9-18-11-28zM58 4c-3 17-8 33-17 43c2 2 6 6 7 8c2-3 5-7 7-10c3 9 6 18 11 25c-6 8-13 14-23 19c2 2 5 6 6 8c9-5 16-11 22-19c5 8 12 14 19 18c2-2 5-6 7-8c-8-4-15-10-21-18c6-10 11-23 13-38h7v-9h-33c2-6 3-12 4-18zM9 79c2-2 5-3 23-9v26h9v-91h-9v55l-14 5v-50h-9v48c0 5-2 6-3 7c1 2 3 7 3 9z'/></symbol><symbol id='r7834' viewBox='0 0 100 100'><path d='M5 8v9h11c-2 15-7 28-14 37c2 2 4 8 4 11c2-3 4-5 5-7v34h8v-8h18v-44h-17c2-8 4-15 6-23h13v-9zM19 48h10v28h-10zM44 19v26c0 14-1 33-10 47c2 0 6 3 7 4c8-11 10-27 11-41c3 8 8 16 13 22c-6 5-12 9-19 12c2 2 4 5 6 7c6-3 13-7 19-12c5 5 12 9 19 12c2-2 4-6 6-7c-7-3-14-7-19-12c7-9 12-19 15-33l-5-2h-2h-13v-15h13c-1 4-2 9-3 11l7 2c2-5 4-13 6-20l-6-2l-2 1h-15v-15h-8v15zM64 27v15h-12v-15zM82 51c-3 7-7 14-11 20c-5-6-9-13-12-20z'/></symbol><symbol id='r8bba' viewBox='0 0 100 100'><path d='M10 12c6 4 14 12 18 16l6-7c-4-4-12-11-18-16zM80 45c-6 5-17 10-25 15v-19h-9c8-7 14-16 19-24c7 12 17 23 27 29c1-2 4-5 6-7c-10-6-22-19-28-31l2-3l-10-2c-6 12-16 27-31 37c2 2 5 5 7 8c2-2 5-4 7-7v39c0 11 3 14 15 14c3 0 17 0 20 0c10 0 13-4 14-19c-2-1-6-2-8-4c-1 12-2 14-7 14c-3 0-15 0-18 0c-5 0-6-1-6-5v-11c9-4 22-10 31-16zM4 35v9h14v34c0 5-2 9-4 10c1 2 4 5 5 7c1-2 4-5 21-19c-1-1-2-5-3-8l-9 8v-41z'/></symbol><symbol id='r89e3' viewBox='0 0 100 100'><path d='M26 36v11h-8v-11zM32 36h8v11h-8zM17 29c2-3 3-6 5-9h11c-1 3-2 6-4 9zM18 4c-3 12-8 24-15 31c2 1 5 4 7 6v-1v16c0 11 0 26-7 36c2 1 5 3 7 5c4-7 6-16 7-24h9v18h6v-3c1 2 2 5 3 7c4 0 7 0 10-1c2-2 3-4 3-8v-57h-10c2-4 4-9 6-13l-6-4l-1 1h-13c1-3 2-5 2-8zM26 54v12h-8c0-4 0-7 0-10v-2zM32 54h8v12h-8zM32 73h8v13c0 1 0 1-1 1c-1 1-4 1-7 0zM58 42c-2 8-5 17-9 22c2 1 5 3 7 4c2-2 3-6 5-9h10v11h-20v8h20v18h9v-18h16v-8h-16v-11h14v-8h-14v-9h-9v9h-8c1-2 2-5 2-7zM51 9v7h12c-1 9-5 16-15 21c2 1 4 4 5 6c13-5 17-15 19-27h13c-1 11-1 15-2 16c-1 1-2 1-3 1c-1 0-5 0-8 0c1 2 2 5 2 7c4 1 8 1 10 0c3 0 4-1 6-2c2-3 3-10 4-26c0-1 0-3 0-3z'/></symbol><symbol id='r6d77' viewBox='0 0 100 100'><path d='M9 11c6 3 14 8 18 11l5-7c-4-3-11-7-17-10zM4 40c6 3 13 8 16 11l6-7c-4-3-11-8-17-10zM7 90l8 5c4-10 9-22 13-33l-7-5c-5 12-10 25-14 33zM56 42c4 3 7 7 10 10h-18l1-13h11zM29 52v8h9c-1 8-3 16-4 22h43c0 2-1 4-1 4c-2 2-2 2-4 2c-2 0-6 0-11 0c1 2 2 5 2 7c5 1 10 1 13 0c3 0 5-1 7-4c2-1 3-4 3-9h8v-9h-6c0-3 0-8 1-13h8v-8h-8l1-17c0-1 0-4 0-4h-49c0 6-1 13-2 21zM54 63c3 3 8 7 10 10h-19l2-13h11zM62 39h19l-1 13h-12l4-3c-2-3-6-7-10-10zM60 60h20c0 6-1 10-1 13h-13l4-2c-2-3-6-8-10-11zM44 4c-4 11-10 22-17 30c2 1 7 4 8 5c4-4 7-10 11-16h48v-9h-44c1-2 2-5 3-8z'/></symbol><symbol id='r901a' viewBox='0 0 100 100'><path d='M6 13c6 5 13 13 17 17l7-6c-4-5-12-12-18-17zM26 41h-22v9h13v27c-4 2-9 6-14 11l6 8c5-7 10-13 13-13c2 0 6 4 10 6c7 4 15 5 27 5c11 0 28 0 36-1c0-2 1-7 2-9c-10 1-26 2-37 2c-12 0-20 0-27-4c-3-2-5-4-7-5zM37 7v7h39c-4 3-8 6-11 8c-5-2-10-4-15-6l-6 5c6 2 12 5 18 8h-26v51h9v-15h15v15h8v-15h15v7c0 1 0 1-1 1c-2 0-6 0-10 0c2 2 2 5 3 8c6 0 11 0 13-2c3-1 4-3 4-7v-43h-13c-2-1-4-3-6-4c7-4 14-9 19-14l-6-5l-2 1zM83 36v7h-15v-7zM45 50h15v8h-15zM45 43v-7h15v7zM83 50v8h-15v-8z'/></symbol><symbol id='r56fd' viewBox='0 0 100 100'><path d='M59 56c3 4 7 8 9 11h-14v-15h19v-8h-19v-12h21v-8h-51v8h21v12h-18v8h18v15h-22v8h54v-8h-9l6-3c-2-4-6-8-9-11zM8 8v88h10v-5h64v5h10v-88zM18 83v-66h64v66z'/></symbol><symbol id='r6c11' viewBox='0 0 100 100'><path d='M11 97c3-2 7-3 37-11c0-2-1-6-1-9l-26 7v-22h29c5 19 16 33 30 33c8 0 11-3 13-19c-3-1-6-3-9-5c0 11-1 15-4 15c-7 0-15-10-20-24h31v-9h-34c-1-5-1-9-2-14h28v-31h-72v72c0 5-3 7-5 8c2 2 4 6 5 9zM48 53h-27v-14h25c0 5 1 9 2 14zM21 17h53v13h-53z'/></symbol><symbol id='r83b7' viewBox='0 0 100 100'><path d='M71 33c5 3 10 9 13 12l7-5c-3-4-9-8-13-12zM60 28v15v3h-22v8h22c-2 12-8 26-25 36c2 2 5 5 7 7c14-9 20-20 24-30c5 13 12 23 24 29c1-2 4-6 6-8c-14-5-22-18-26-34h24v-8h-25v-2v-16zM62 4v7h-24v-7h-9v7h-23v9h23v7h9v-7h24v6h10v-6h22v-9h-22v-7zM32 28c-2 3-5 5-7 7c-3-3-6-6-10-8l-6 5c4 2 7 5 9 8c-4 3-9 6-14 8c1 1 4 4 5 6c5-2 9-5 14-8c1 3 2 5 3 8c-5 7-15 14-23 17c2 2 5 5 6 7c6-3 13-8 18-14v3c0 9-1 16-3 19c-1 1-2 1-3 2c-2 0-6 0-11 0c2 2 3 5 3 8c5 0 8 0 12-1c2 0 4-1 5-3c5-5 6-14 6-25c0-9-1-18-6-26c3-2 7-5 9-8z'/></symbol><symbol id='r5ba2' viewBox='0 0 100 100'><path d='M37 36h27c-4 4-8 8-14 11c-5-3-10-7-14-10zM38 22c-5 7-15 16-29 21c2 2 5 5 7 7c5-2 10-5 14-8c3 4 7 7 11 10c-11 5-25 9-38 11c2 2 4 6 5 8c5-1 10-2 14-3v28h10v-3h37v3h9v-29c4 1 9 2 13 3c1-3 4-7 6-9c-14-2-27-5-38-10c8-5 15-11 19-19l-6-4l-2 1h-26c1-2 3-3 4-5zM50 57c6 3 13 6 21 8h-41c7-2 14-5 20-8zM32 85v-12h37v12zM42 5c2 2 3 5 4 7h-39v21h10v-12h66v12h10v-21h-36c-1-3-4-6-5-9z'/></symbol><symbol id='r5317' viewBox='0 0 100 100'><path d='M3 74l4 10l24-10v22h10v-91h-10v23h-25v10h25v26c-11 4-21 8-28 10zM88 20c-6 6-14 12-22 17v-32h-10v73c0 13 3 16 13 16c2 0 13 0 15 0c10 0 13-7 14-25c-3-1-7-3-9-5c-1 17-2 21-6 21c-2 0-11 0-13 0c-4 0-4-1-4-6v-32c10-5 21-12 29-18z'/></symbol><symbol id='r4eac' viewBox='0 0 100 100'><path d='M27 40h46v14h-46zM68 72c6 7 14 16 17 22l9-6c-4-5-12-14-19-21zM22 68c-3 6-11 14-17 20c2 1 5 4 7 6c7-6 14-15 20-23zM41 6c2 3 4 6 5 10h-40v9h88v-9h-36c-2-4-5-9-8-13zM18 32v30h27v24c0 1 0 2-2 2c-2 0-8 0-14 0c1 2 3 6 3 9c9 0 14 0 18-2c4-1 5-4 5-9v-24h28v-30z'/></symbol><symbol id='r95fb' viewBox='0 0 100 100'><path d='M8 27v69h10v-69zM10 9c4 4 10 10 12 14l7-5c-2-4-8-10-12-14zM35 8v9h48v68c0 2-1 2-2 2c-1 0-6 0-10 0c1 3 2 7 3 9c6 0 11 0 14-2c3-1 4-4 4-9v-77zM60 34v7h-21v-7zM21 72l1 8l38-3v11h9v-12l9-1v-7l-9 1v-35h6v-7h-51v7h6v37zM60 48v7h-21v-7zM60 62v7l-21 2v-9z'/></symbol><symbol id='r6280' viewBox='0 0 100 100'><path d='M61 4v15h-23v9h23v13h-21v9h4h-1c4 10 9 19 15 26c-7 6-16 9-26 12c2 2 4 6 5 8c11-3 20-7 28-13c7 6 16 11 26 13c2-2 4-6 6-8c-9-2-18-6-25-11c9-9 16-20 20-34l-6-2h-2h-14v-13h24v-9h-24v-15zM52 50h28c-3 8-8 15-14 21c-6-6-11-13-14-21zM17 4v19h-13v9h13v20c-5 2-10 3-14 4l3 9l11-3v24c0 1-1 1-2 1c-1 1-6 1-10 0c1 3 2 7 3 9c7 0 11 0 14-2c3-1 4-4 4-8v-27l12-3l-2-9l-10 3v-18h11v-9h-11v-19z'/></symbol><symbol id='r6761' viewBox='0 0 100 100'><path d='M29 70c-5 6-14 12-21 16c2 2 5 5 7 7c7-5 16-13 21-20zM63 75c7 5 15 13 18 19l7-6c-4-5-12-13-18-18zM65 20c-4 5-9 9-15 12c-6-3-11-7-15-12zM37 3c-5 9-15 19-30 26c2 2 5 5 7 7c5-3 10-6 15-10c4 4 8 8 12 11c-11 5-25 8-38 10c2 2 4 6 5 9c14-3 30-7 42-14c12 6 26 10 41 13c1-3 4-7 6-9c-14-2-27-4-37-9c8-6 15-13 20-21l-6-4h-2h-30c2-2 4-4 5-7zM45 49v10h-31v8h31v19c0 2 0 2-1 2c-2 0-6 0-10 0c2 2 3 6 3 8c6 0 11 0 14-1c3-2 4-4 4-8v-20h31v-8h-31v-10z'/></symbol><symbol id='r8fde' viewBox='0 0 100 100'><path d='M8 9c5 6 11 14 13 19l8-6c-3-5-9-12-14-17zM26 37h-22v9h13v30c-5 2-10 6-15 12l7 9c4-7 9-13 12-13c2 0 5 3 10 6c7 4 15 5 29 5c10 0 28 0 35-1c0-3 2-8 3-10c-10 1-26 2-38 2c-12 0-21-1-27-5c-3-2-5-3-7-5zM38 48c0-1 4-2 9-2h15v12h-30v9h30v17h9v-17h23v-9h-23v-12h19v-8h-19v-12h-9v12h-15c3-5 6-10 8-16h38v-8h-35l3-8l-10-2c-1 3-2 6-3 10h-16v8h13c-2 5-4 9-5 11c-2 3-4 6-6 6c2 3 3 7 4 9z'/></symbol><symbol id='r7eed' viewBox='0 0 100 100'><path d='M47 43c4 3 9 7 12 9l4-5c-2-3-8-6-12-8zM40 52c4 3 10 7 12 10l5-6c-3-2-9-6-13-8zM69 78c7 6 17 13 21 19l6-6c-4-5-14-13-22-18zM4 81l2 9c9-3 20-8 30-12l-1-8c-12 5-23 9-31 11zM40 28v8h44c-1 4-3 8-4 11l8 2c2-5 4-13 6-20l-6-1h-1h-16v-8h18v-8h-18v-8h-10v8h-17v8h17v8zM64 39v12c0 3 0 7-1 11h-25v8h22c-4 7-11 14-24 20c2 1 4 5 5 7c17-7 25-17 29-27h24v-8h-22c0-4 1-8 1-11v-12zM6 46c2-1 4-1 14-2c-4 5-7 10-9 12c-3 4-5 6-7 7c1 2 2 6 3 7c2-1 5-2 29-9c-1-2-1-5-1-8l-15 4c6-8 13-18 18-28l-7-5c-2 4-4 8-6 12h-10c5-8 11-18 15-28l-8-4c-4 12-11 24-13 28c-2 3-4 5-6 6c1 2 3 6 3 8z'/></symbol><symbol id='r6296' viewBox='0 0 100 100'><path d='M46 16c7 4 14 10 18 14l5-8c-3-4-11-9-17-12zM42 42c6 3 14 8 18 12l6-8c-5-3-13-8-19-11zM74 4v57l-35 6l1 9l34-6v26h9v-27l14-3l-1-8l-13 2v-56zM18 4v19h-14v9h14v20c-6 2-11 3-15 4l3 9l12-3v23c0 2-1 2-2 2c-2 0-6 0-10 0c1 2 2 6 2 9c7 0 12 0 15-2c3-2 4-4 4-9v-26l13-4l-2-9l-11 4v-18h12v-9h-12v-19z'/></symbol><symbol id='r97f3' viewBox='0 0 100 100'><path d='M42 4c2 3 3 6 4 8h-35v9h56c-1 4-4 10-6 15h-23l1-1c-1-4-3-10-6-14l-9 2c2 3 4 9 5 13h-24v8h90v-8h-24c2-4 5-9 7-13l-10-2h22v-9h-33c-1-3-3-6-5-9zM28 76h45v9h-45zM28 68v-8h45v8zM18 52v44h10v-3h45v3h10v-44z'/></symbol><symbol id='r6d59' viewBox='0 0 100 100'><path d='M8 11c5 3 12 8 16 11l6-7c-4-3-12-8-17-10zM3 38c6 3 13 8 17 10l6-7c-4-3-12-7-17-10zM5 90l9 5c4-9 9-21 12-32l-7-5c-4 12-10 24-14 32zM38 4v19h-11v9h11v20l-13 4l3 9l10-3v22c0 1 0 2-2 2c-1 0-5 0-9-1c1 3 2 7 2 10c7 0 11-1 14-2c3-2 4-4 4-9v-25l11-5l-1-8l-10 3v-17h10v-9h-10v-19zM61 13v34c0 14-1 31-10 43c2 1 6 4 7 5c10-12 12-33 12-48v-2h9v51h9v-51h8v-9h-26v-17c8-2 17-5 24-8l-7-7c-6 3-17 7-26 9z'/></symbol><symbol id='r6c5f' viewBox='0 0 100 100'><path d='M10 12c5 3 14 8 17 12l6-8c-4-3-12-8-18-11zM4 39c6 3 14 8 18 11l6-8c-5-3-13-7-19-10zM7 89l8 6c6-9 13-21 18-32l-7-6c-6 11-13 24-19 32zM32 81v9h64v-9h-28v-59h23v-10h-54v10h21v59z'/></symbol><symbol id='r96c6' viewBox='0 0 100 100'><path d='M45 59v6h-40v8h32c-9 6-23 12-35 15c2 2 5 5 6 8c13-4 27-11 37-19v19h9v-20c11 8 25 15 37 19c1-2 4-6 6-8c-12-3-25-8-34-14h32v-8h-41v-6zM49 33v6h-23v-6zM47 6c1 2 2 5 3 8h-19c2-3 3-6 5-9l-10-2c-4 9-12 20-23 28c2 1 5 4 6 6c3-2 5-4 8-6v30h9v-3h66v-7h-34v-6h27v-6h-27v-6h27v-6h-27v-6h31v-7h-29c-1-3-3-8-5-11zM49 27h-23v-6h23zM49 45v6h-23v-6z'/></symbol><symbol id='r9ad8' viewBox='0 0 100 100'><path d='M30 33h41v8h-41zM20 26v21h61v-21zM43 5l3 9h-40v8h88v-8h-38c-1-4-2-8-4-11zM9 52v44h9v-36h64v27c0 1-1 2-2 2c-1 0-6 0-11 0c1 2 3 5 3 7c7 0 12 0 15-2c3-1 4-2 4-7v-35zM28 65v26h9v-5h34v-21zM37 72h25v8h-25z'/></symbol><symbol id='r8349' viewBox='0 0 100 100'><path d='M26 49h48v8h-48zM26 35h48v7h-48zM16 28v36h29v8h-39v9h39v15h9v-15h41v-9h-41v-8h30v-36zM6 10v9h22v7h9v-7h25v7h10v-7h22v-9h-22v-6h-10v6h-25v-6h-9v6z'/></symbol><symbol id='r6839' viewBox='0 0 100 100'><path d='M19 4v19h-15v8h15c-3 13-9 29-16 37c2 2 4 6 5 9c4-6 8-16 11-26v45h9v-49c2 5 5 10 6 13l6-6c-2-3-9-15-12-18v-5h11v-8h-11v-19zM79 34v10h-27v-10zM79 26h-27v-10h27zM43 96c2-1 6-2 26-7c0-2 0-6 0-9l-17 4v-31h8c6 20 15 35 31 43c1-3 4-6 6-8c-8-4-14-9-19-15c5-3 11-7 16-11l-6-7c-4 3-9 8-14 11c-2-4-4-9-5-13h19v-45h-45v74c0 4-2 6-4 7c2 2 4 5 4 7z'/></symbol><symbol id='r4e1a' viewBox='0 0 100 100'><path d='M84 26c-3 12-10 26-15 36l7 4c6-10 12-24 17-36zM7 28c5 12 11 28 13 37l10-4c-3-9-9-24-14-35zM58 5v77h-16v-77h-9v77h-27v10h89v-10h-28v-77z'/></symbol><symbol id='r5458' viewBox='0 0 100 100'><path d='M28 16h44v10h-44zM18 8v26h64v-26zM44 56v9c0 7-3 18-38 24c2 2 5 6 6 8c37-8 43-21 43-32v-9zM53 82c12 4 28 11 37 15l4-8c-8-4-25-10-36-13zM15 42v37h9v-29h52v28h10v-36z'/></symbol><symbol id='r6700' viewBox='0 0 100 100'><path d='M26 25h48v6h-48zM26 13h48v6h-48zM17 7v30h66v-30zM38 49v6h-15v-6zM4 83l1 8l33-4v9h10v-10h5v-8h-5v-29h47v-7h-90v7h9v33zM51 55v7h7l-3 1c3 7 6 13 11 18c-5 4-10 6-16 8c2 2 4 5 5 7c6-2 12-5 17-10c6 5 12 8 19 10c1-2 4-6 6-7c-7-2-13-5-18-8c6-7 11-15 14-25l-5-2l-2 1zM63 62h19c-2 5-6 10-10 14c-4-4-7-9-9-14zM38 62v6h-15v-6zM38 74v6l-15 1v-7z'/></symbol><symbol id='r5b9e' viewBox='0 0 100 100'><path d='M53 79c13 5 27 11 35 17l5-8c-8-5-22-12-35-16zM24 33c5 3 11 8 14 11l6-6c-3-4-9-8-15-11zM14 48c5 3 12 8 15 12l6-8c-4-3-10-8-16-10zM8 14v22h10v-13h64v13h10v-22h-34c-2-3-4-8-6-11l-10 3c2 2 3 5 4 8zM7 62v8h35c-6 8-16 14-34 18c2 2 4 6 5 8c23-5 34-14 40-26h41v-8h-38c2-10 3-21 3-34h-10c0 13 0 25-4 34z'/></symbol><symbol id='r6218' viewBox='0 0 100 100'><path d='M76 11c4 5 8 11 10 15l7-4c-2-4-6-10-10-15zM8 48v47h8v-6h25v5h9v-46h-18v-18h20v-8h-20v-18h-10v44zM16 80v-23h25v23zM63 4c0 10 1 20 1 29l-13 2l1 8l13-1c1 11 3 22 5 30c-6 7-13 12-20 16c2 2 5 4 7 6c5-3 11-7 16-12c3 9 8 14 14 14c4 0 9-4 11-20c-2 0-6-3-7-5c-1 10-2 15-4 15c-3-1-5-5-8-12c7-9 12-19 15-29l-7-4c-2 8-6 15-10 22c-2-7-3-14-3-23l22-3l-1-8l-22 3c-1-9-1-18-1-28z'/></symbol><symbol id='r6d3e' viewBox='0 0 100 100'><path d='M8 12c6 3 14 8 18 11l5-7c-4-4-12-8-18-11zM3 39c6 3 14 7 17 11l5-8c-4-3-11-8-17-10zM6 88l7 7c5-10 11-22 15-32l-6-6c-5 11-12 24-16 31zM53 95c2-1 5-3 24-11c-1-2-2-5-2-8l-13 6v-45l6-1c3 26 9 47 23 59c1-3 4-7 7-8c-8-5-13-14-16-25c4-3 10-7 15-11l-7-7c-3 3-7 7-11 11c-1-7-3-13-4-21c6-1 11-2 15-4l-7-7c-7 3-19 6-30 7v51c0 4-2 6-3 7c1 2 2 5 3 7zM36 14v25c0 16-1 38-11 53c2 1 6 3 7 5c11-17 13-41 13-58v-18c16-2 34-5 47-9l-8-8c-11 4-31 8-48 10z'/></symbol><symbol id='s5019' viewBox='0 0 100 100'><path d='M42 21l-14-1v61h2c4 0 8-2 8-3v-54c3 0 4-1 4-3zM86 56l-6 8h-9c1-5 1-10 1-16h18c2 0 3-1 3-2c-4-3-11-9-11-9l-6 8h-20c2-2 3-5 4-7c2 0 3-1 4-2l-14-4h45c1 0 2-1 2-2c-3-4-9-9-9-9l-5 8h-3l2-15c2 0 2-1 3-2l-10-7l-4 5h-27l1 3h27l-3 16h-29l1 3h8c-1 10-5 21-8 28h1c5-3 9-7 12-12h6c0 6 0 11 0 16h-20l1 2h18c-2 12-8 21-26 29l1 2c24-7 33-17 36-31c2 10 7 24 19 31c0-7 3-10 9-11v-1c-14-4-22-12-26-19h23c1 0 2 0 3-1c-5-4-12-9-12-9zM26 33l-6-2c3-6 6-13 8-21c3 0 4-1 4-2l-15-5c-3 19-9 39-15 53h1c3-3 6-6 9-10v51h2c4 0 8-2 8-3v-59c2 0 3-1 4-2z'/></symbol><symbol id='s9009' viewBox='0 0 100 100'><path d='M8 5l-1 1c4 6 9 14 11 21c11 8 20-14-10-22zM85 33l-6 9h-11v-16h22c2 0 3-1 3-2c-4-4-11-9-11-9l-6 8h-8v-15c3 0 4-1 4-2l-15-2v19h-9c1-3 3-7 4-10c2 0 3-1 4-3l-15-3c-1 12-4 24-7 32l1 1c4-4 8-9 11-14h11v16h-23l1 2h12c-1 15-3 26-17 35c-1-1-2-2-4-3v-32c3-1 5-2 6-3l-12-9l-6 7h-10v3h12v35c-4 2-8 5-12 7l8 12c0-1 1-1 0-2c3-6 7-12 9-15c1-1 2-2 4 0c8 11 17 15 37 15c10 0 20 0 28 0c0-4 3-8 7-9v-1c-11 0-20 0-31 0c-16 0-26-1-34-4c18-7 25-18 27-36h6v26c0 6 1 8 9 8h6c11 0 15-2 15-6c0-2-1-3-3-4v-13h-2c-1 5-3 11-3 12c-1 1-1 1-2 1c-1 0-2 0-4 0h-3c-2 0-2 0-2-1v-23h18c1 0 2 0 2-1c-4-4-11-10-11-10z'/></symbol><symbol id='s4eba' viewBox='0 0 100 100'><path d='M52 9c2 0 3-1 3-3l-16-1c0 31 1 64-36 90l1 2c38-18 45-44 47-69c3 32 10 55 35 68c2-6 5-10 11-11l1-2c-35-12-44-35-46-74z'/></symbol><symbol id='s8bc4' viewBox='0 0 100 100'><path d='M94 27l-14-5c-1 8-4 20-8 29l1 1c7-6 14-16 18-23c2 0 3-1 3-2zM38 24h-2c3 7 6 16 6 24c10 9 21-11-4-24zM11 4h-1c3 5 7 11 8 17c11 7 20-13-7-17zM26 35c2-1 4-1 4-2l-10-8l-5 5h-12l1 3h11v41c0 3-1 4-5 6l8 12c1 0 3-2 4-4c8-9 15-17 19-22l-1-1l-14 8zM87 47l-6 8h-12v-39h22c2 0 3 0 3-2c-4-4-12-9-12-9l-6 8h-41v3h22v39h-27l1 3h26v39h2c6 0 10-3 10-4v-35h26c2 0 3-1 3-2c-4-4-11-9-11-9z'/></symbol><symbol id='s5206' viewBox='0 0 100 100'><path d='M48 10l-15-6c-5 15-15 34-31 47l1 1c21-9 34-26 41-41c3 0 4 0 4-1zM68 5l-8-3l-1 1c4 24 14 39 30 49c1-5 5-9 9-11v-1c-14-5-28-16-34-30c1-2 3-4 4-5zM49 45h-32l1 3h18c-1 14-4 32-30 48l1 1c34-13 39-32 41-49h18c-1 20-2 33-5 35c-1 1-2 1-4 1c-3 0-10 0-15 0v1c4 1 9 2 11 4c1 2 2 5 2 8c7 0 11-1 14-4c5-5 8-18 9-43c2-1 3-1 4-2l-10-9l-7 6z'/></symbol><symbol id='s8868' viewBox='0 0 100 100'><path d='M60 4l-16-2v13h-34v3h34v11h-30l1 3h29v12h-40l1 2h32c-7 11-20 22-35 29l1 1c9-2 17-5 25-9v14c0 2-1 3-6 5l8 12c1 0 2-1 2-2c13-7 24-14 29-18v-1c-8 2-15 4-21 5v-22c5-4 10-8 14-13c5 25 16 40 34 47c0-5 4-10 9-13v-1c-10-2-20-6-27-12c8-3 16-7 21-10c2 0 3 0 4-1l-13-9c-3 5-9 12-15 18c-5-5-8-12-11-20h37c2 0 3 0 3-1c-4-4-11-10-11-10l-6 9h-23v-12h30c1 0 2-1 2-2c-4-4-10-9-10-9l-6 8h-16v-11h34c1 0 2 0 2-2c-4-4-11-9-11-9l-6 8h-19v-8c3-1 3-2 4-3z'/></symbol><symbol id='r7eea' viewBox='0 0 100 100'><path d='M4 82l2 9c9-3 22-6 34-9l-1-8c-13 3-26 6-35 8zM6 46c2-1 4-1 15-3c-4 6-7 11-9 13c-3 4-6 6-8 6c1 3 2 7 3 8c2-1 5-2 28-6v-5c2 2 5 6 6 7c3-1 5-2 8-4v34h9v-4h24v4h9v-44h-27c3-3 6-6 9-9h23v-9h-16c6-7 11-14 14-23l-8-2c-2 4-4 7-6 11v-5h-13v-11h-9v11h-15v8h15v11h-20v9h22c-7 6-16 12-25 16v-3l-16 2c8-8 15-18 21-29l-8-4c-2 3-4 7-6 11l-11 1c5-9 11-19 15-29l-8-4c-4 12-11 24-13 28c-2 3-4 5-6 6c1 2 3 6 3 8zM67 23h11c-3 4-6 8-9 11h-2zM58 76h24v8h-24zM58 68v-8h24v8z'/></symbol></defs></svg>
<div class='a' style='left:0px;top:0px;width:356px;height:654px;background:#f9f9f9'></div>
<div class='num' style='top:32.5px'>1.</div>
<div class='ln' style='top:32.5px'><i class=g><s>李</s><svg><use href='#r674e'/></svg></i><i class=g><s>时</s><svg><use href='#r65f6'/></svg></i><i class=g><s>磁</s><svg><use href='#r78c1'/></svg></i> - 86<i class=g><s>分</s><svg><use href='#r5206'/></svg></i><i class=g><s>（</s><svg><use href='#rff08'/></svg></i><i class=g><s>清</s><svg><use href='#r6e05'/></svg></i><i class=g><s>华</s><svg><use href='#r534e'/></svg></i><i class=g><s>计</s><svg><use href='#r8ba1'/></svg></i><i class=g><s>算</s><svg><use href='#r7b97'/></svg></i><i class=g><s>机</s><svg><use href='#r673a'/></svg></i><i class=g><s>硕</s><svg><use href='#r7855'/></svg></i><i class=g><s>士</s><svg><use href='#r58eb'/></svg></i><i class=g><s>，</s><svg><use href='#rff0c'/></svg></i></div>
<div class='ln' style='top:52.5px'>AI<i class=g><s>深</s><svg><use href='#r6df1'/></svg></i><i class=g><s>度</s><svg><use href='#r5ea6'/></svg></i><i class=g><s>内</s><svg><use href='#r5185'/></svg></i><i class=g><s>容</s><svg><use href='#r5bb9'/></svg></i><i class=g><s>强</s><svg><use href='#r5f3a'/></svg></i><i class=g><s>）</s><svg><use href='#rff09'/></svg></i></div>
<div class='num' style='top:72.5px'>2.</div>
<div class='a' style='left:104.5px;top:75px;width:7.5px;height:7px;background:#111'></div>
<div class='a' style='left:112px;top:82px;width:7.3px;height:7px;background:#cdcdcd'></div>
<div class='a' style='left:126.7px;top:82px;width:7.5px;height:7.5px;background:#1a1a1a'></div>
<div class='a' style='left:134.2px;top:75px;width:7.3px;height:7px;background:#efefef'></div>
<div class='a' style='left:134.2px;top:82px;width:7.3px;height:7px;background:#dcdcdc'></div>
<div class='ln' style='top:72.5px;left:147px'>- 78<i class=g><s>分</s><svg><use href='#r5206'/></svg></i><i class=g><s>（</s><svg><use href='#rff08'/></svg></i><i class=g><s>前</s><svg><use href='#r524d'/></svg></i>AI<i class=g><s>产</s><svg><use href='#r4ea7'/></svg></i><i class=g><s>品</s><svg><use href='#r54c1'/></svg></i><i class=g><s>经</s><svg><use href='#r7ecf'/></svg></i><i class=g><s>理</s><svg><use href='#r7406'/></svg></i><i class=g><s>，</s><svg><use href='#rff0c'/></svg></i><i class=g><s>教</s><svg><use href='#r6559'/></svg></i></div>
<div class='ln' style='top:92.5px'><i class=g><s>程</s><svg><use href='#r7a0b'/></svg></i><i class=g><s>内</s><svg><use href='#r5185'/></svg></i><i class=g><s>容</s><svg><use href='#r5bb9'/></svg></i><i class=g><s>月</s><svg><use href='#r6708'/></svg></i><i class=g><s>均</s><svg><use href='#r5747'/></svg></i>500<i class=g><s>万</s><svg><use href='#r4e07'/></svg></i><i class=g><s>播</s><svg><use href='#r64ad'/></svg></i><i class=g><s>放</s><svg><use href='#r653e'/></svg></i><i class=g><s>）</s><svg><use href='#rff09'/></svg></i></div>
<div class='num' style='top:113.5px'>3.</div>
<div class='a' style='left:104.6px;top:120px;width:7.5px;height:7.7px;background:#333'></div>
<div class='a' style='left:112.1px;top:113px;width:7.2px;height:7px;background:#bbb'></div>
<div class='a' style='left:119.3px;top:113px;width:7.5px;height:7px;background:#2a2a2a'></div>
<div class='a' style='left:119.3px;top:120px;width:7.5px;height:7.7px;background:#bbb'></div>
<div class='a' style='left:126.8px;top:113px;width:7.5px;height:7px;background:#eee'></div>
<div class='a' style='left:126.8px;top:120px;width:7.5px;height:7.7px;background:#333'></div>
<div class='a' style='left:134.3px;top:113px;width:7.2px;height:14.7px;background:#111'></div>
<div class='ln' style='top:113.5px;left:147px'>- 72<i class=g><s>分</s><svg><use href='#r5206'/></svg></i><i class=g><s>（</s><svg><use href='#rff08'/></svg></i>5<i class=g><s>年</s><svg><use href='#r5e74'/></svg></i><i class=g><s>新</s><svg><use href='#r65b0'/></svg></i><i class=g><s>媒</s><svg><use href='#r5a92'/></svg></i><i class=g><s>体</s><svg><use href='#r4f53'/></svg></i><i class=g><s>经</s><svg><use href='#r7ecf'/></svg></i><i class=g><s>验</s><svg><use href='#r9a8c'/></svg></i><i class=g><s>，</s><svg><use href='#rff0c'/></svg></i></div>
<div class='ln' style='top:133.5px'>MCN<i class=g><s>管</s><svg><use href='#r7ba1'/></svg></i><i class=g><s>理</s><svg><use href='#r7406'/></svg></i><i class=g><s>）</s><svg><use href='#rff09'/></svg></i></div>
<div class='num' style='top:153.5px'>4.</div>
<div class='a' style='left:119.4px;top:158px;width:7.4px;height:7px;background:#e8e8e8'></div>
<div class='a' style='left:126.8px;top:158px;width:14.9px;height:7px;background:#1a1a1a'></div>
<div class='ln' style='top:153.5px;left:147px'>- 72<i class=g><s>分</s><svg><use href='#r5206'/></svg></i><i class=g><s>（</s><svg><use href='#rff08'/></svg></i><i class=g><s>中</s><svg><use href='#r4e2d'/></svg></i><i class=g><s>科</s><svg><use href='#r79d1'/></svg></i><i class=g><s>院</s><svg><use href='#r9662'/></svg></i><i class=g><s>硕</s><svg><use href='#r7855'/></svg></i><i class=g><s>士</s><svg><use href='#r58eb'/></svg></i><i class=g><s>，</s><svg><use href='#rff0c'/></svg></i>B<i class=g><s>站</s><svg><use href='#r7ad9'/></svg></i>18</div>
<div class='ln' style='top:174.5px'><i class=g><s>万</s><svg><use href='#r4e07'/></svg></i><i class=g><s>粉</s><svg><use href='#r7c89'/></svg></i><i class=g><s>）</s><svg><use href='#rff09'/></svg></i></div>
<div class='num' style='top:194.5px'>5.</div>
<div class='a' style='left:104.2px;top:195.2px;width:7.7px;height:15.4px;background:#111'></div>
<div class='a' style='left:119.4px;top:195.2px;width:7.4px;height:7.3px;background:#bbb'></div>
<div class='a' style='left:126.8px;top:195.2px;width:7.5px;height:7.3px;background:#ccc'></div>
<div class='a' style='left:126.8px;top:202.5px;width:7.5px;height:7.5px;background:#eee'></div>
<div class='a' style='left:134.3px;top:202.5px;width:7.4px;height:7.5px;background:#666'></div>
<div class='ln' style='top:194.5px;left:156px'>68<i class=g><s>分</s><svg><use href='#r5206'/></svg></i><i class=g><s>（</s><svg><use href='#rff08'/></svg></i><i class=g><s>上</s><svg><use href='#r4e0a'/></svg></i><i class=g><s>交</s><svg><use href='#r4ea4'/></svg></i><i class=g><s>传</s><svg><use href='#r4f20'/></svg></i><i class=g><s>播</s><svg><use href='#r64ad'/></svg></i><i class=g><s>学</s><svg><use href='#r5b66'/></svg></i><i class=g><s>，</s><svg><use href='#rff0c'/></svg></i><i class=g><s>爆</s><svg><use href='#r7206'/></svg></i><i class=g><s>款</s><svg><use href='#r6b3e'/></svg></i></div>
<div class='ln' style='top:214.5px'><i class=g><s>视</s><svg><use href='#r89c6'/></svg></i><i class=g><s>频</s><svg><use href='#r9891'/></svg></i>280<i class=g><s>万</s><svg><use href='#r4e07'/></svg></i><i class=g><s>播</s><svg><use href='#r64ad'/></svg></i><i class=g><s>放</s><svg><use href='#r653e'/></svg></i><i class=g><s>）</s><svg><use href='#rff09'/></svg></i></div>
<div class='ln' style='top:245.5px;left:82px;font-weight:bold'><i class=g><s>评</s><svg><use href='#b8bc4'/></svg></i><i class=g><s>分</s><svg><use href='#b5206'/></svg></i><i class=g><s>维</s><svg><use href='#b7ef4'/></svg></i><i class=g><s>度</s><svg><use href='#b5ea6'/></svg></i><i class=g><s>：</s><svg><use href='#bff1a'/></svg></i></div>
<div class='bul' style='top:274.5px'></div>
<div class='ln' style='top:267.5px;left:98px'>AI<i class=g><s>工</s><svg><use href='#r5de5'/></svg></i><i class=g><s>具</s><svg><use href='#r5177'/></svg></i><i class=g><s>能</s><svg><use href='#r80fd'/></svg></i><i class=g><s>力</s><svg><use href='#r529b'/></svg></i><i class=g><s>（</s><svg><use href='#rff08'/></svg></i>30<i class=g><s>分</s><svg><use href='#r5206'/></svg></i><i class=g><s>）</s><svg><use href='#rff09'/></svg></i></div>
<div class='bul' style='top:294.5px'></div>
<div class='ln' style='top:287.5px;left:98px'><i class=g><s>爆</s><svg><use href='#r7206'/></svg></i><i class=g><s>款</s><svg><use href='#r6b3e'/></svg></i><i class=g><s>能</s><svg><use href='#r80fd'/></svg></i><i class=g><s>力</s><svg><use href='#r529b'/></svg></i><i class=g><s>（</s><svg><use href='#rff08'/></svg></i>25<i class=g><s>分</s><svg><use href='#r5206'/></svg></i><i class=g><s>）</s><svg><use href='#rff09'/></svg></i></div>
<div class='bul' style='top:314.5px'></div>
<div class='ln' style='top:307.5px;left:98px'><i class=g><s>运</s><svg><use href='#r8fd0'/></svg></i><i class=g><s>营</s><svg><use href='#r8425'/></svg></i><i class=g><s>经</s><svg><use href='#r7ecf'/></svg></i><i class=g><s>验</s><svg><use href='#r9a8c'/></svg></i><i class=g><s>（</s><svg><use href='#rff08'/></svg></i>20<i class=g><s>分</s><svg><use href='#r5206'/></svg></i><i class=g><s>）</s><svg><use href='#rff09'/></svg></i></div>
<div class='bul' style='top:335.5px'></div>
<div class='ln' style='top:328.5px;left:98px'><i class=g><s>学</s><svg><use href='#r5b66'/></svg></i><i class=g><s>历</s><svg><use href='#r5386'/></svg></i><i class=g><s>背</s><svg><use href='#r80cc'/></svg></i><i class=g><s>景</s><svg><use href='#r666f'/></svg></i><i class=g><s>（</s><svg><use href='#rff08'/></svg></i>15<i class=g><s>分</s><svg><use href='#r5206'/></svg></i><i class=g><s>）</s><svg><use href='#rff09'/></svg></i></div>
<div class='bul' style='top:355.5px'></div>
<div class='ln' style='top:348.5px;left:98px'><i class=g><s>可</s><svg><use href='#r53ef'/></svg></i><i class=g><s>到</s><svg><use href='#r5230'/></svg></i><i class=g><s>岗</s><svg><use href='#r5c97'/></svg></i><i class=g><s>性</s><svg><use href='#r6027'/></svg></i><i class=g><s>（</s><svg><use href='#rff08'/></svg></i>10<i class=g><s>分</s><svg><use href='#r5206'/></svg></i><i class=g><s>）</s><svg><use href='#rff09'/></svg></i></div>
<div class='a' style='left:81px;top:378px;width:236px;height:63px;border:1.5px solid #a9a9ad;border-radius:9px;background:#f3f2ef;box-shadow:0 0 0 2px #eeeeee;overflow:hidden'>
<div class='a' style='left:12px;top:9px;width:17px;height:17px;border-radius:4px;background:#dff2e1;color:#2fc553;font-size:14px;line-height:17px;text-align:center'>X</div>
<div class='a' style='left:14px;top:33px;font-size:13.5px;color:#2b2f36;line-height:20px'>AI<i class=g><s>内</s><svg><use href='#r5185'/></svg></i><i class=g><s>容</s><svg><use href='#r5bb9'/></svg></i><i class=g><s>创</s><svg><use href='#r521b'/></svg></i><i class=g><s>作</s><svg><use href='#r4f5c'/></svg></i><i class=g><s>者</s><svg><use href='#r8005'/></svg></i><i class=g><s>候</s><svg><use href='#r5019'/></svg></i><i class=g><s>选</s><svg><use href='#r9009'/></svg></i><i class=g><s>人</s><svg><use href='#r4eba'/></svg></i>...</div>
<div class='a' style='left:159px;top:12px;width:67px;height:60px;background:#fff;border-radius:5px'>
 <div class='a' style='left:6px;top:7px;width:16px;height:5px;border-radius:3px;background:#e8e0d7'></div>
 <div class='a' style='left:6px;top:14px;width:53px;height:6px;border-radius:1px;background:#ebe3da'></div>
 <svg style='left:0;top:0' width='67' height='60'><g stroke='#efe8e2' stroke-width='0.8' fill='none'>
 <path d='M6.5 20v40M19 20v40M31.5 20v40M45.5 20v40M58.5 20v40M6 26.5h53M6 32h53M6 38h53M6 44h53'/></g></svg>
</div>
</div>
<div class='ln' style='top:452.5px;left:82px'><i class=g><s>你</s><svg><use href='#r4f60'/></svg></i><i class=g><s>看</s><svg><use href='#r770b'/></svg></i><i class=g><s>看</s><svg><use href='#r770b'/></svg></i><i class=g><s>这</s><svg><use href='#r8fd9'/></svg></i><i class=g><s>个</s><svg><use href='#r4e2a'/></svg></i><i class=g><s>评</s><svg><use href='#r8bc4'/></svg></i><i class=g><s>分</s><svg><use href='#r5206'/></svg></i><i class=g><s>，</s><svg><use href='#rff0c'/></svg></i><i class=g><s>有</s><svg><use href='#r6709'/></svg></i><i class=g><s>没</s><svg><use href='#r6ca1'/></svg></i><i class=g><s>有</s><svg><use href='#r6709'/></svg></i><i class=g><s>要</s><svg><use href='#r8981'/></svg></i><i class=g><s>调</s><svg><use href='#r8c03'/></svg></i><i class=g><s>整</s><svg><use href='#r6574'/></svg></i><i class=g><s>的</s><svg><use href='#r7684'/></svg></i><i class=g><s>？</s><svg><use href='#rff1f'/></svg></i><i class=g><s>比</s><svg><use href='#r6bd4'/></svg></i></div>
<div class='ln' style='top:472.5px;left:82px'><i class=g><s>如</s><svg><use href='#r5982'/></svg></i><i class=g><s>某</s><svg><use href='#r67d0'/></svg></i><i class=g><s>个</s><svg><use href='#r4e2a'/></svg></i><i class=g><s>维</s><svg><use href='#r7ef4'/></svg></i><i class=g><s>度</s><svg><use href='#r5ea6'/></svg></i><i class=g><s>权</s><svg><use href='#r6743'/></svg></i><i class=g><s>重</s><svg><use href='#r91cd'/></svg></i><i class=g><s>改</s><svg><use href='#r6539'/></svg></i><i class=g><s>改</s><svg><use href='#r6539'/></svg></i><i class=g><s>？</s><svg><use href='#rff1f'/></svg></i></div>
<div class='a' style='left:19px;top:528px;width:317px;height:105px;background:#fff;border-radius:17px;box-shadow:0 0 0 1px #ececec, 0 2px 8px rgba(0,0,0,0.04)'>
<div class='a' style='left:11px;top:12.5px;font-size:13.5px;color:#8e8e8e;line-height:20px'><i class=g><s>想</s><svg><use href='#r60f3'/></svg></i><i class=g><s>到</s><svg><use href='#r5230'/></svg></i><i class=g><s>什</s><svg><use href='#r4ec0'/></svg></i><i class=g><s>么</s><svg><use href='#r4e48'/></svg></i><i class=g><s>就</s><svg><use href='#r5c31'/></svg></i><i class=g><s>随</s><svg><use href='#r968f'/></svg></i><i class=g><s>时</s><svg><use href='#r65f6'/></svg></i><i class=g><s>发</s><svg><use href='#r53d1'/></svg></i><i class=g><s>，</s><svg><use href='#rff0c'/></svg></i><i class=g><s>不</s><svg><use href='#r4e0d'/></svg></i><i class=g><s>用</s><svg><use href='#r7528'/></svg></i><i class=g><s>等</s><svg><use href='#r7b49'/></svg></i><i class=g><s>我</s><svg><use href='#r6211'/></svg></i><i class=g><s>闲</s><svg><use href='#r95f2'/></svg></i><i class=g><s>下</s><svg><use href='#r4e0b'/></svg></i><i class=g><s>来</s><svg><use href='#r6765'/></svg></i></div>
<div class='a' style='left:11px;top:68px;width:27px;height:27px;border-radius:50%;border:1px solid #e6e6e6;background:#fff'></div>
<div class='a' style='left:43px;top:68px;width:27px;height:27px;border-radius:50%;border:1px solid #e6e6e6;background:#fff'></div>
<div class='a' style='left:280px;top:68px;width:27px;height:27px;border-radius:50%;background:#8a8a8a'></div>
<svg style='left:0;top:0' width='317' height='105'>
 <g stroke='#222' stroke-width='1.3' fill='none'><path d='M20 81.5h9M24.5 77v9'/></g>
 <g stroke='#fff' stroke-width='1.5' fill='none' stroke-linecap='round' stroke-linejoin='round'><path d='M293.1 85.8V77M288.9 81.2l4.2-4.2 4.2 4.2'/></g>
</svg>
<svg style='left:0;top:0' width='317' height='105'><g transform='translate(56.3 81.5) scale(0.54) translate(-12 -12)' fill='none' stroke='#222' stroke-width='2.6' stroke-linecap='round' stroke-linejoin='round'><circle cx='12' cy='12' r='4'/><path d='M16 8v5a3 3 0 0 0 6 0v-1a10 10 0 1 0-3.92 7.94'/></g></svg>
</div>
<div class='a' style='left:0px;top:0px;width:356px;height:43px;background:#f9f9f9;border-bottom:1px solid #e9e9e9'></div>
<div class='a' style='left:12px;top:12.5px;font-size:12px;font-weight:bold;color:#222;line-height:16px'><i class=g><s>哆</s><svg><use href='#b54c6'/></svg></i><i class=g><s>啦</s><svg><use href='#b5566'/></svg></i>A<i class=g><s>梦</s><svg><use href='#b68a6'/></svg></i></div>
<div class='a' style='left:62px;top:13px;width:1px;height:13px;background:#dcdcdc'></div>
<div class='a' style='left:70px;top:12.5px;font-size:10.5px;color:#aaa;line-height:14px'><i class=g><s>对</s><svg><use href='#r5bf9'/></svg></i><i class=g><s>话</s><svg><use href='#r8bdd'/></svg></i><i class=g><s>由</s><svg><use href='#r7531'/></svg></i> AI <i class=g><s>生</s><svg><use href='#r751f'/></svg></i><i class=g><s>成</s><svg><use href='#r6210'/></svg></i></div>
<svg style='left:0;top:0' width='356' height='42'>
<g stroke='#1f1f1f' stroke-width='1.4' fill='none' stroke-linecap='round' stroke-linejoin='round'>
<path d='M232.5 18.8h2.5l2-5.8 3.6 11.5 2.2-5.2h1.7'/>
<circle cx='268.5' cy='18.2' r='4.6'/><path d='M271.9 21.6l2.4 2.4'/>
<path d='M294 15.2v7.2a1.3 1.3 0 0 0 1.3 1.3h9.4a1.3 1.3 0 0 0 1.3-1.3v-5.4a1.3 1.3 0 0 0-1.3-1.3h-5l-1.6-1.8h-2.8a1.3 1.3 0 0 0-1.3 1.3z'/>
</g>
<g fill='#1f1f1f'><circle cx='325.6' cy='18.9' r='1.3'/><circle cx='330' cy='18.9' r='1.3'/><circle cx='334.5' cy='18.9' r='1.3'/></g>
</svg>
<div class='a' style='left:356px;top:0px;width:2px;height:654px;background:#ececec'></div>
<div class='a' style='left:352px;top:318px;width:10px;height:14px;border-radius:2px;background:#e6e6e6'></div>
<svg style='left:0;top:0' width='400' height='400'><g stroke='#bdbdbd' stroke-width='0.8'><path d='M355 322.5h4M355 325h4M355 327.5h4'/></g></svg>
<div class='a' style='left:350px;top:494px;width:5px;height:27px;border-radius:3px;background:#dcdcdc'></div>
<div class='a' style='left:358px;top:0px;width:642px;height:42px;background:#fff;border-bottom:1px solid #e6e6e6'></div>
<div class='a' style='left:371px;top:13px;font-size:12px;color:#222;line-height:16px'>AI<i class=g><s>内</s><svg><use href='#r5185'/></svg></i><i class=g><s>容</s><svg><use href='#r5bb9'/></svg></i><i class=g><s>创</s><svg><use href='#r521b'/></svg></i><i class=g><s>作</s><svg><use href='#r4f5c'/></svg></i><i class=g><s>者</s><svg><use href='#r8005'/></svg></i><i class=g><s>候</s><svg><use href='#r5019'/></svg></i><i class=g><s>选</s><svg><use href='#r9009'/></svg></i><i class=g><s>人</s><svg><use href='#r4eba'/></svg></i><i class=g><s>评</s><svg><use href='#r8bc4'/></svg></i><i class=g><s>分</s><svg><use href='#r5206'/></svg></i><i class=g><s>表</s><svg><use href='#r8868'/></svg></i>.xlsx</div>
<svg style='left:0;top:0' width='1000' height='42'>
<path d='M549.45 12.80 L551.33 16.71 L555.63 17.29 L552.49 20.29 L553.27 24.56 L549.45 22.50 L545.63 24.56 L546.41 20.29 L543.27 17.29 L547.57 16.71Z' fill='none' stroke='#666' stroke-width='1.1' stroke-linejoin='round'/>
<g stroke='#222' stroke-width='1.5' fill='none' stroke-linecap='round' stroke-linejoin='round'>
<path d='M900.8 13.5v7.5M897.5 18l3.3 3.2 3.3-3.2M895.5 20.5v2.2a1.3 1.3 0 0 0 1.3 1.3h8a1.3 1.3 0 0 0 1.3-1.3v-2.2'/>
<path d='M932.4 18.4l3.6-3.6M926.9 23.3l3.7-3.6'/>
<path d='M969.5 15l7 7.5M976.5 15l-7 7.5'/>
</g>
<g fill='#222'><path d='M932.5 13.5h4.8v4.8z'/><path d='M925.8 19.6v4.8h4.8z'/></g>
<g fill='none' stroke='#222' stroke-width='1.2'>
<path d='M865.7 15Q865.7 13.8 867 13.8H868.3Q869.5 13.8 869.5 15V20.5Q869.5 23.8 866.5 24Q865.3 24 865.6 22.5Q866 21.5 867.2 20.5Q865.7 19.8 865.7 18.5Z'/>
<path d='M871.7 15Q871.7 13.8 873 13.8H874.3Q875.5 13.8 875.5 15V20.5Q875.5 23.8 872.5 24Q871.3 24 871.6 22.5Q872 21.5 873.2 20.5Q871.7 19.8 871.7 18.5Z'/>
</g>
</svg>
<div class='a' style='left:952px;top:12px;width:1px;height:14px;background:#e3e3e3'></div>
<div class='a' style='left:366px;top:46px;width:44px;height:26px;border:1px solid #e6e6e6;border-bottom:none;border-radius:2px 2px 0 0'></div>
<div class='a' style='left:348px;top:53px;width:80px;text-align:center;font-size:12px;color:#f2f2f2;line-height:16px'><i class=g><s>开</s><svg><use href='#r5f00'/></svg></i><i class=g><s>始</s><svg><use href='#r59cb'/></svg></i></div>
<div class='a' style='left:392px;top:53px;width:80px;text-align:center;font-size:12px;color:#f2f2f2;line-height:16px'><i class=g><s>插</s><svg><use href='#r63d2'/></svg></i><i class=g><s>入</s><svg><use href='#r5165'/></svg></i></div>
<div class='a' style='left:446.5px;top:53px;width:80px;text-align:center;font-size:12px;color:#f2f2f2;line-height:16px'><i class=g><s>页</s><svg><use href='#r9875'/></svg></i><i class=g><s>面</s><svg><use href='#r9762'/></svg></i><i class=g><s>布</s><svg><use href='#r5e03'/></svg></i><i class=g><s>局</s><svg><use href='#r5c40'/></svg></i></div>
<div class='a' style='left:502px;top:53px;width:80px;text-align:center;font-size:12px;color:#f2f2f2;line-height:16px'><i class=g><s>公</s><svg><use href='#r516c'/></svg></i><i class=g><s>式</s><svg><use href='#r5f0f'/></svg></i></div>
<div class='a' style='left:546px;top:53px;width:80px;text-align:center;font-size:12px;color:#f2f2f2;line-height:16px'><i class=g><s>数</s><svg><use href='#r6570'/></svg></i><i class=g><s>据</s><svg><use href='#r636e'/></svg></i></div>
<div class='a' style='left:590px;top:53px;width:80px;text-align:center;font-size:12px;color:#f2f2f2;line-height:16px'><i class=g><s>视</s><svg><use href='#r89c6'/></svg></i><i class=g><s>图</s><svg><use href='#r56fe'/></svg></i></div>
<div class='a' style='left:634.5px;top:53px;width:80px;text-align:center;font-size:12px;color:#f2f2f2;line-height:16px'><i class=g><s>设</s><svg><use href='#r8bbe'/></svg></i><i class=g><s>置</s><svg><use href='#r7f6e'/></svg></i></div>
<div class='a' style='left:366px;top:75px;width:85px;height:20px;border:1px solid #d4d4d4'></div>
<div class='a' style='left:393px;top:77px;font-size:12px;color:#222;line-height:15px'>A1</div>
<svg style='left:0;top:0' width='1000' height='100'>
<path d='M439 83.5h6.2l-3.1 4z' fill='#444'/>
<g fill='#333'><circle cx='464.5' cy='81' r='1.05'/><circle cx='464.5' cy='85.8' r='1.05'/><circle cx='464.5' cy='90.5' r='1.05'/></g>
<g stroke='#d2d2d2' stroke-width='1.2' fill='none'><path d='M483.6 80.6l5.8 7.6M489.4 80.6l-5.8 7.6M495.8 84.6l3.4 3.4 6.4-7.2'/></g>
</svg>
<div class='a' style='left:509px;top:78px;font-family:"Liberation Serif",serif;font-size:12.5px;color:#3f66bf;line-height:15px'><i>fx</i></div>
<div class='a' style='left:478px;top:75px;width:51px;height:20px;border:1px solid #d9d9d9'></div>
<div class='a' style='left:532px;top:75px;width:457px;height:20px;border:1px solid #d9d9d9'></div>
<div class='a' style='left:540px;top:77px;font-size:12px;color:#eeeeee;line-height:15px'><i class=g><s>排</s><svg><use href='#r6392'/></svg></i><i class=g><s>名</s><svg><use href='#r540d'/></svg></i></div>
<div class='a' style='left:364px;top:101px;width:629px;height:1.5px;background:#e3e3e3'></div>
<div class='a' style='left:668px;top:96px;width:20px;height:3px;background:repeating-linear-gradient(90deg,#8a8a8a 0 2px,#aaa 2px 2.5px)'></div>
<div class='a' style='left:364px;top:101px;width:610px;height:511px;overflow:hidden'><div class='a' style='left:-364px;top:-101px;width:1000px;height:654px'>
<div class='a' style='left:364px;top:102px;width:612px;height:18px;background:#fff'></div>
<div class='a' style='left:397px;top:104px;width:35px;height:14.5px;background:#dcdcdc'></div>
<svg style='left:0;top:0' width='400' height='130'><path d='M383 118.5H395V106z' fill='#e0e0e0'/></svg>
<div class='a' style='left:397px;top:104px;width:36px;text-align:center;font-size:13px;line-height:16px;color:#1e7145;font-weight:bold'>A</div>
<div class='a' style='left:433px;top:104px;width:59px;text-align:center;font-size:13px;line-height:16px;color:#222;font-weight:normal'>B</div>
<div class='a' style='left:492px;top:104px;width:83px;text-align:center;font-size:13px;line-height:16px;color:#222;font-weight:normal'>C</div>
<div class='a' style='left:575px;top:104px;width:83px;text-align:center;font-size:13px;line-height:16px;color:#222;font-weight:normal'>D</div>
<div class='a' style='left:658px;top:104px;width:71px;text-align:center;font-size:13px;line-height:16px;color:#222;font-weight:normal'>E</div>
<div class='a' style='left:729px;top:104px;width:207px;text-align:center;font-size:13px;line-height:16px;color:#222;font-weight:normal'>F</div>
<div class='a' style='left:936px;top:104px;width:112px;text-align:center;font-size:13px;line-height:16px;color:#222;font-weight:normal'>G</div>
<div class='a' style='left:432px;top:104px;width:1px;height:16px;background:#ececec'></div>
<div class='a' style='left:491px;top:104px;width:1px;height:16px;background:#ececec'></div>
<div class='a' style='left:574px;top:104px;width:1px;height:16px;background:#ececec'></div>
<div class='a' style='left:657px;top:104px;width:1px;height:16px;background:#ececec'></div>
<div class='a' style='left:728px;top:104px;width:1px;height:16px;background:#ececec'></div>
<div class='a' style='left:935px;top:104px;width:1px;height:16px;background:#ececec'></div>
<div class='a' style='left:364px;top:120px;width:33px;height:35px;background:#dcdcdc'></div>
<div class='a' style='left:364px;top:120px;width:33px;height:35px;line-height:35px;text-align:center;font-size:13px;font-weight:bold;color:#1e7145'>1</div>
<div class='a' style='left:397px;top:120px;width:580px;height:35px;background:#4472c4'></div>
<div class='cell hd' style='left:397px;top:120px;width:36px;height:35px'><span><i class=g><s>排</s><svg><use href='#b6392'/></svg></i><i class=g><s>名</s><svg><use href='#b540d'/></svg></i></span></div>
<div class='cell hd' style='left:433px;top:120px;width:59px;height:35px'><span><i class=g><s>姓</s><svg><use href='#b59d3'/></svg></i><i class=g><s>名</s><svg><use href='#b540d'/></svg></i></span></div>
<div class='cell hd' style='left:492px;top:120px;width:83px;height:35px'><span><i class=g><s>学</s><svg><use href='#b5b66'/></svg></i><i class=g><s>历</s><svg><use href='#b5386'/></svg></i><i class=g><s>背</s><svg><use href='#b80cc'/></svg></i><i class=g><s>景</s><svg><use href='#b666f'/></svg></i></span></div>
<div class='cell hd' style='left:575px;top:120px;width:83px;height:35px'><span><i class=g><s>专</s><svg><use href='#b4e13'/></svg></i><i class=g><s>业</s><svg><use href='#b4e1a'/></svg></i><i class=g><s>背</s><svg><use href='#b80cc'/></svg></i><i class=g><s>景</s><svg><use href='#b666f'/></svg></i></span></div>
<div class='cell hd' style='left:658px;top:120px;width:71px;height:35px'><span><i class=g><s>粉</s><svg><use href='#b7c89'/></svg></i><i class=g><s>丝</s><svg><use href='#b4e1d'/></svg></i><i class=g><s>量</s><svg><use href='#b91cf'/></svg></i></span></div>
<div class='cell hd' style='left:729px;top:120px;width:207px;height:35px'><span><i class=g><s>爆</s><svg><use href='#b7206'/></svg></i><i class=g><s>款</s><svg><use href='#b6b3e'/></svg></i><i class=g><s>案</s><svg><use href='#b6848'/></svg></i><i class=g><s>例</s><svg><use href='#b4f8b'/></svg></i></span></div>
<div class='cell hd' style='left:936px;top:120px;width:112px;height:35px'><span>AI<i class=g><s>工</s><svg><use href='#b5de5'/></svg></i><i class=g><s>具</s><svg><use href='#b5177'/></svg></i><i class=g><s>能</s><svg><use href='#b80fd'/></svg></i><i class=g><s>力</s><svg><use href='#b529b'/></svg></i></span></div>
<div class='rh' style='top:156px;height:43px'>2</div>
<div class='cell' style='left:397px;top:157px;width:36px;height:43px;white-space:nowrap'><span>1</span></div>
<div class='cell' style='left:433px;top:157px;width:59px;height:43px;white-space:nowrap'><span></span></div>
<div class='cell' style='left:492px;top:157px;width:83px;height:43px;white-space:nowrap'><span><i class=g><s>清</s><svg><use href='#r6e05'/></svg></i><i class=g><s>华</s><svg><use href='#r534e'/></svg></i><i class=g><s>大</s><svg><use href='#r5927'/></svg></i><i class=g><s>学</s><svg><use href='#r5b66'/></svg></i></span></div>
<div class='cell' style='left:575px;top:157px;width:83px;height:43px;white-space:nowrap'><span><i class=g><s>计</s><svg><use href='#r8ba1'/></svg></i><i class=g><s>算</s><svg><use href='#r7b97'/></svg></i><i class=g><s>机</s><svg><use href='#r673a'/></svg></i><i class=g><s>硕</s><svg><use href='#r7855'/></svg></i><i class=g><s>士</s><svg><use href='#r58eb'/></svg></i></span></div>
<div class='cell' style='left:658px;top:157px;width:71px;height:43px;white-space:nowrap'><span><i class=g><s>未</s><svg><use href='#r672a'/></svg></i><i class=g><s>知</s><svg><use href='#r77e5'/></svg></i></span></div>
<div class='cell' style='left:729px;top:157px;width:207px;height:43px;white-space:nowrap'><span>AI<i class=g><s>深</s><svg><use href='#r6df1'/></svg></i><i class=g><s>度</s><svg><use href='#r5ea6'/></svg></i><i class=g><s>文</s><svg><use href='#r6587'/></svg></i><i class=g><s>章</s><svg><use href='#r7ae0'/></svg></i><i class=g><s>单</s><svg><use href='#r5355'/></svg></i><i class=g><s>篇</s><svg><use href='#r7bc7'/></svg></i>50<i class=g><s>万</s><svg><use href='#r4e07'/></svg></i>+<i class=g><s>阅</s><svg><use href='#r9605'/></svg></i><i class=g><s>读</s><svg><use href='#r8bfb'/></svg></i></span></div>
<div class='cell' style='left:936px;top:155px;width:112px;height:43px;justify-content:flex-start;white-space:nowrap;padding-left:3px'><span><i class=g><s>强</s><svg><use href='#r5f3a'/></svg></i><i class=g><s>（</s><svg><use href='#rff08'/></svg></i><i class=g><s>计</s><svg><use href='#r8ba1'/></svg></i><i class=g><s>算</s><svg><use href='#r7b97'/></svg></i></span></div>
<div class='rh' style='top:200px;height:44px'>3</div>
<div class='cell' style='left:397px;top:201px;width:36px;height:44px;white-space:nowrap'><span>2</span></div>
<div class='cell' style='left:433px;top:201px;width:59px;height:44px;white-space:nowrap'><span></span></div>
<div class='cell' style='left:492px;top:201px;width:83px;height:44px;white-space:nowrap'><span><i class=g><s>未</s><svg><use href='#r672a'/></svg></i><i class=g><s>知</s><svg><use href='#r77e5'/></svg></i></span></div>
<div class='cell' style='left:575px;top:201px;width:83px;height:44px;white-space:nowrap'><span><i class=g><s>前</s><svg><use href='#r524d'/></svg></i>AI<i class=g><s>产</s><svg><use href='#r4ea7'/></svg></i><i class=g><s>品</s><svg><use href='#r54c1'/></svg></i><i class=g><s>经</s><svg><use href='#r7ecf'/></svg></i><i class=g><s>理</s><svg><use href='#r7406'/></svg></i></span></div>
<div class='cell' style='left:658px;top:201px;width:71px;height:44px;white-space:nowrap'><span><i class=g><s>未</s><svg><use href='#r672a'/></svg></i><i class=g><s>知</s><svg><use href='#r77e5'/></svg></i></span></div>
<div class='cell' style='left:729px;top:201px;width:207px;height:44px;white-space:nowrap'><span><i class=g><s>教</s><svg><use href='#r6559'/></svg></i><i class=g><s>程</s><svg><use href='#r7a0b'/></svg></i><i class=g><s>类</s><svg><use href='#r7c7b'/></svg></i><i class=g><s>内</s><svg><use href='#r5185'/></svg></i><i class=g><s>容</s><svg><use href='#r5bb9'/></svg></i><i class=g><s>月</s><svg><use href='#r6708'/></svg></i><i class=g><s>均</s><svg><use href='#r5747'/></svg></i>500<i class=g><s>万</s><svg><use href='#r4e07'/></svg></i><i class=g><s>播</s><svg><use href='#r64ad'/></svg></i><i class=g><s>放</s><svg><use href='#r653e'/></svg></i></span></div>
<div class='cell' style='left:936px;top:199px;width:112px;height:44px;justify-content:flex-start;white-space:nowrap;padding-left:10px;align-items:flex-start;padding-top:6px'><span><i class=g><s>强</s><svg><use href='#r5f3a'/></svg></i><i class=g><s>（</s><svg><use href='#rff08'/></svg></i><i class=g><s>产</s><svg><use href='#r4ea7'/></svg></i></span></div>
<div class='rh' style='top:245px;height:44px'>4</div>
<div class='cell' style='left:397px;top:246px;width:36px;height:44px;white-space:nowrap'><span>3</span></div>
<div class='cell' style='left:433px;top:246px;width:59px;height:44px;white-space:nowrap'><span></span></div>
<div class='cell' style='left:492px;top:246px;width:83px;height:44px;white-space:nowrap'><span><i class=g><s>未</s><svg><use href='#r672a'/></svg></i><i class=g><s>知</s><svg><use href='#r77e5'/></svg></i></span></div>
<div class='cell' style='left:575px;top:246px;width:83px;height:44px;white-space:nowrap'><span><i class=g><s>新</s><svg><use href='#r65b0'/></svg></i><i class=g><s>媒</s><svg><use href='#r5a92'/></svg></i><i class=g><s>体</s><svg><use href='#r4f53'/></svg></i><i class=g><s>运</s><svg><use href='#r8fd0'/></svg></i><i class=g><s>营</s><svg><use href='#r8425'/></svg></i></span></div>
<div class='cell' style='left:658px;top:246px;width:71px;height:44px;white-space:nowrap'><span><i class=g><s>未</s><svg><use href='#r672a'/></svg></i><i class=g><s>知</s><svg><use href='#r77e5'/></svg></i></span></div>
<div class='cell' style='left:729px;top:246px;width:207px;height:44px;white-space:nowrap'><span>MCN<i class=g><s>团</s><svg><use href='#r56e2'/></svg></i><i class=g><s>队</s><svg><use href='#r961f'/></svg></i><i class=g><s>管</s><svg><use href='#r7ba1'/></svg></i><i class=g><s>理</s><svg><use href='#r7406'/></svg></i><i class=g><s>，</s><svg><use href='#rff0c'/></svg></i><i class=g><s>单</s><svg><use href='#r5355'/></svg></i><i class=g><s>月</s><svg><use href='#r6708'/></svg></i><i class=g><s>营</s><svg><use href='#r8425'/></svg></i><i class=g><s>收</s><svg><use href='#r6536'/></svg></i><i class=g><s>破</s><svg><use href='#r7834'/></svg></i>50<i class=g><s>万</s><svg><use href='#r4e07'/></svg></i></span></div>
<div class='cell' style='left:936px;top:244px;width:112px;height:44px;justify-content:flex-start;white-space:nowrap;padding-left:10px'><span></span></div>
<div class='rh' style='top:290px;height:44px'>5</div>
<div class='cell' style='left:397px;top:291px;width:36px;height:44px;white-space:nowrap'><span>4</span></div>
<div class='cell' style='left:433px;top:291px;width:59px;height:44px;white-space:nowrap'><span></span></div>
<div class='cell' style='left:492px;top:291px;width:83px;height:44px;white-space:nowrap'><span><i class=g><s>中</s><svg><use href='#r4e2d'/></svg></i><i class=g><s>科</s><svg><use href='#r79d1'/></svg></i><i class=g><s>院</s><svg><use href='#r9662'/></svg></i></span></div>
<div class='cell' style='left:575px;top:291px;width:83px;height:44px;white-space:nowrap'><span><i class=g><s>硕</s><svg><use href='#r7855'/></svg></i><i class=g><s>士</s><svg><use href='#r58eb'/></svg></i></span></div>
<div class='cell' style='left:658px;top:291px;width:71px;height:44px;white-space:nowrap'><span>B<i class=g><s>站</s><svg><use href='#r7ad9'/></svg></i>18<i class=g><s>万</s><svg><use href='#r4e07'/></svg></i><i class=g><s>粉</s><svg><use href='#r7c89'/></svg></i></span></div>
<div class='cell' style='left:729px;top:291px;width:207px;height:44px;white-space:nowrap'><span><i class=g><s>论</s><svg><use href='#r8bba'/></svg></i><i class=g><s>文</s><svg><use href='#r6587'/></svg></i><i class=g><s>解</s><svg><use href='#r89e3'/></svg></i><i class=g><s>读</s><svg><use href='#r8bfb'/></svg></i><i class=g><s>内</s><svg><use href='#r5185'/></svg></i><i class=g><s>容</s><svg><use href='#r5bb9'/></svg></i></span></div>
<div class='cell' style='left:936px;top:289px;width:112px;height:44px;justify-content:flex-start;white-space:nowrap;padding-left:10px'><span><i class=g><s>强</s><svg><use href='#r5f3a'/></svg></i><i class=g><s>（</s><svg><use href='#rff08'/></svg></i><i class=g><s>学</s><svg><use href='#r5b66'/></svg></i></span></div>
<div class='rh' style='top:335px;height:44px'>6</div>
<div class='cell' style='left:397px;top:336px;width:36px;height:44px;white-space:nowrap'><span>5</span></div>
<div class='cell' style='left:433px;top:336px;width:59px;height:44px;white-space:nowrap'><span></span></div>
<div class='cell' style='left:492px;top:336px;width:83px;height:44px;white-space:nowrap'><span><i class=g><s>上</s><svg><use href='#r4e0a'/></svg></i><i class=g><s>海</s><svg><use href='#r6d77'/></svg></i><i class=g><s>交</s><svg><use href='#r4ea4'/></svg></i><i class=g><s>通</s><svg><use href='#r901a'/></svg></i><i class=g><s>大</s><svg><use href='#r5927'/></svg></i><i class=g><s>学</s><svg><use href='#r5b66'/></svg></i></span></div>
<div class='cell' style='left:575px;top:336px;width:83px;height:44px;white-space:nowrap'><span><i class=g><s>传</s><svg><use href='#r4f20'/></svg></i><i class=g><s>播</s><svg><use href='#r64ad'/></svg></i><i class=g><s>学</s><svg><use href='#r5b66'/></svg></i></span></div>
<div class='cell' style='left:658px;top:336px;width:71px;height:44px;white-space:nowrap'><span><i class=g><s>未</s><svg><use href='#r672a'/></svg></i><i class=g><s>知</s><svg><use href='#r77e5'/></svg></i></span></div>
<div class='cell' style='left:729px;top:336px;width:207px;height:44px;white-space:nowrap'><span><i class=g><s>爆</s><svg><use href='#r7206'/></svg></i><i class=g><s>款</s><svg><use href='#r6b3e'/></svg></i><i class=g><s>视</s><svg><use href='#r89c6'/></svg></i><i class=g><s>频</s><svg><use href='#r9891'/></svg></i>280<i class=g><s>万</s><svg><use href='#r4e07'/></svg></i><i class=g><s>播</s><svg><use href='#r64ad'/></svg></i><i class=g><s>放</s><svg><use href='#r653e'/></svg></i></span></div>
<div class='cell' style='left:936px;top:334px;width:112px;height:44px;justify-content:flex-start;white-space:nowrap;padding-left:10px'><span></span></div>
<div class='rh' style='top:380px;height:43px'>7</div>
<div class='cell' style='left:397px;top:381px;width:36px;height:43px;white-space:nowrap'><span>6</span></div>
<div class='cell' style='left:433px;top:381px;width:59px;height:43px;white-space:nowrap'><span></span></div>
<div class='cell' style='left:492px;top:381px;width:83px;height:43px;white-space:nowrap'><span><i class=g><s>中</s><svg><use href='#r4e2d'/></svg></i><i class=g><s>国</s><svg><use href='#r56fd'/></svg></i><i class=g><s>人</s><svg><use href='#r4eba'/></svg></i><i class=g><s>民</s><svg><use href='#r6c11'/></svg></i><i class=g><s>大</s><svg><use href='#r5927'/></svg></i><i class=g><s>学</s><svg><use href='#r5b66'/></svg></i></span></div>
<div class='cell' style='left:575px;top:381px;width:83px;height:43px;white-space:nowrap'><span><i class=g><s>学</s><svg><use href='#r5b66'/></svg></i><i class=g><s>士</s><svg><use href='#r58eb'/></svg></i></span></div>
<div class='cell' style='left:658px;top:381px;width:71px;height:43px;white-space:nowrap'><span><i class=g><s>未</s><svg><use href='#r672a'/></svg></i><i class=g><s>知</s><svg><use href='#r77e5'/></svg></i></span></div>
<div class='cell' style='left:729px;top:381px;width:207px;height:43px;white-space:nowrap'><span><i class=g><s>月</s><svg><use href='#r6708'/></svg></i><i class=g><s>均</s><svg><use href='#r5747'/></svg></i><i class=g><s>获</s><svg><use href='#r83b7'/></svg></i><i class=g><s>客</s><svg><use href='#r5ba2'/></svg></i>5<i class=g><s>万</s><svg><use href='#r4e07'/></svg></i>+</span></div>
<div class='cell' style='left:936px;top:379px;width:112px;height:43px;justify-content:flex-start;white-space:nowrap;padding-left:10px'><span></span></div>
<div class='rh' style='top:424px;height:44px'>8</div>
<div class='cell' style='left:397px;top:425px;width:36px;height:44px;white-space:nowrap'><span>7</span></div>
<div class='cell' style='left:433px;top:425px;width:59px;height:44px;white-space:nowrap'><span></span></div>
<div class='cell' style='left:492px;top:425px;width:83px;height:44px;white-space:nowrap'><span><i class=g><s>北</s><svg><use href='#r5317'/></svg></i><i class=g><s>京</s><svg><use href='#r4eac'/></svg></i><i class=g><s>大</s><svg><use href='#r5927'/></svg></i><i class=g><s>学</s><svg><use href='#r5b66'/></svg></i></span></div>
<div class='cell' style='left:575px;top:425px;width:83px;height:44px;white-space:nowrap'><span><i class=g><s>新</s><svg><use href='#r65b0'/></svg></i><i class=g><s>闻</s><svg><use href='#r95fb'/></svg></i><i class=g><s>硕</s><svg><use href='#r7855'/></svg></i><i class=g><s>士</s><svg><use href='#r58eb'/></svg></i></span></div>
<div class='cell' style='left:658px;top:425px;width:71px;height:44px;white-space:nowrap'><span><i class=g><s>未</s><svg><use href='#r672a'/></svg></i><i class=g><s>知</s><svg><use href='#r77e5'/></svg></i></span></div>
<div class='cell' style='left:729px;top:425px;width:207px;height:44px;white-space:nowrap'><span><i class=g><s>爆</s><svg><use href='#r7206'/></svg></i><i class=g><s>款</s><svg><use href='#r6b3e'/></svg></i><i class=g><s>文</s><svg><use href='#r6587'/></svg></i><i class=g><s>章</s><svg><use href='#r7ae0'/></svg></i><i class=g><s>单</s><svg><use href='#r5355'/></svg></i><i class=g><s>篇</s><svg><use href='#r7bc7'/></svg></i>100<i class=g><s>万</s><svg><use href='#r4e07'/></svg></i>+</span></div>
<div class='cell' style='left:936px;top:423px;width:112px;height:44px;justify-content:flex-start;white-space:nowrap;padding-left:10px'><span></span></div>
<div class='rh' style='top:469px;height:44px'>9</div>
<div class='cell' style='left:397px;top:470px;width:36px;height:44px;white-space:nowrap'><span>8</span></div>
<div class='cell' style='left:433px;top:470px;width:59px;height:44px;white-space:nowrap'><span></span></div>
<div class='cell' style='left:492px;top:470px;width:83px;height:44px;white-space:nowrap'><span><i class=g><s>未</s><svg><use href='#r672a'/></svg></i><i class=g><s>知</s><svg><use href='#r77e5'/></svg></i></span></div>
<div class='cell' style='left:575px;top:470px;width:83px;height:44px;white-space:nowrap'><span><i class=g><s>科</s><svg><use href='#r79d1'/></svg></i><i class=g><s>技</s><svg><use href='#r6280'/></svg></i><i class=g><s>内</s><svg><use href='#r5185'/></svg></i><i class=g><s>容</s><svg><use href='#r5bb9'/></svg></i><i class=g><s>创</s><svg><use href='#r521b'/></svg></i><i class=g><s>作</s><svg><use href='#r4f5c'/></svg></i><br><i class=g><s>者</s><svg><use href='#r8005'/></svg></i></span></div>
<div class='cell' style='left:658px;top:470px;width:71px;height:44px;white-space:nowrap'><span>80<i class=g><s>万</s><svg><use href='#r4e07'/></svg></i>+</span></div>
<div class='cell' style='left:729px;top:470px;width:207px;height:44px;white-space:nowrap'><span><i class=g><s>单</s><svg><use href='#r5355'/></svg></i><i class=g><s>条</s><svg><use href='#r6761'/></svg></i><i class=g><s>视</s><svg><use href='#r89c6'/></svg></i><i class=g><s>频</s><svg><use href='#r9891'/></svg></i>1500<i class=g><s>万</s><svg><use href='#r4e07'/></svg></i><i class=g><s>播</s><svg><use href='#r64ad'/></svg></i><i class=g><s>放</s><svg><use href='#r653e'/></svg></i><i class=g><s>，</s><svg><use href='#rff0c'/></svg></i><i class=g><s>连</s><svg><use href='#r8fde'/></svg></i><i class=g><s>续</s><svg><use href='#r7eed'/></svg></i>6<i class=g><s>个</s><svg><use href='#r4e2a'/></svg></i><i class=g><s>月</s><svg><use href='#r6708'/></svg></i><i class=g><s>抖</s><svg><use href='#r6296'/></svg></i><br><i class=g><s>音</s><svg><use href='#r97f3'/></svg></i><i class=g><s>科</s><svg><use href='#r79d1'/></svg></i><i class=g><s>技</s><svg><use href='#r6280'/></svg></i>TOP100</span></div>
<div class='cell' style='left:936px;top:468px;width:112px;height:44px;justify-content:flex-start;white-space:nowrap;padding-left:10px'><span></span></div>
<div class='rh' style='top:514px;height:44px'>10</div>
<div class='cell' style='left:397px;top:515px;width:36px;height:44px;white-space:nowrap'><span>9</span></div>
<div class='cell' style='left:433px;top:515px;width:59px;height:44px;white-space:nowrap'><span></span></div>
<div class='cell' style='left:492px;top:515px;width:83px;height:44px;white-space:nowrap'><span><i class=g><s>浙</s><svg><use href='#r6d59'/></svg></i><i class=g><s>江</s><svg><use href='#r6c5f'/></svg></i><i class=g><s>传</s><svg><use href='#r4f20'/></svg></i><i class=g><s>媒</s><svg><use href='#r5a92'/></svg></i><i class=g><s>学</s><svg><use href='#r5b66'/></svg></i><i class=g><s>院</s><svg><use href='#r9662'/></svg></i></span></div>
<div class='cell' style='left:575px;top:515px;width:83px;height:44px;white-space:nowrap'><span><i class=g><s>学</s><svg><use href='#r5b66'/></svg></i><i class=g><s>生</s><svg><use href='#r751f'/></svg></i></span></div>
<div class='cell' style='left:658px;top:515px;width:71px;height:44px;white-space:nowrap'><span><i class=g><s>未</s><svg><use href='#r672a'/></svg></i><i class=g><s>知</s><svg><use href='#r77e5'/></svg></i></span></div>
<div class='cell' style='left:729px;top:515px;width:207px;height:44px;white-space:nowrap'><span><i class=g><s>有</s><svg><use href='#r6709'/></svg></i><i class=g><s>作</s><svg><use href='#r4f5c'/></svg></i><i class=g><s>品</s><svg><use href='#r54c1'/></svg></i><i class=g><s>集</s><svg><use href='#r96c6'/></svg></i></span></div>
<div class='cell' style='left:936px;top:513px;width:112px;height:44px;justify-content:flex-start;white-space:nowrap;padding-left:10px'><span></span></div>
<div class='rh' style='top:559px;height:44px'>11</div>
<div class='cell' style='left:397px;top:560px;width:36px;height:44px;white-space:nowrap'><span>10</span></div>
<div class='cell' style='left:433px;top:560px;width:59px;height:44px;white-space:nowrap'><span></span></div>
<div class='cell' style='left:492px;top:560px;width:83px;height:44px;white-space:nowrap'><span><i class=g><s>高</s><svg><use href='#r9ad8'/></svg></i><i class=g><s>中</s><svg><use href='#r4e2d'/></svg></i></span></div>
<div class='cell' style='left:575px;top:560px;width:83px;height:44px;white-space:nowrap'><span><i class=g><s>草</s><svg><use href='#r8349'/></svg></i><i class=g><s>根</s><svg><use href='#r6839'/></svg></i><i class=g><s>创</s><svg><use href='#r521b'/></svg></i><i class=g><s>业</s><svg><use href='#r4e1a'/></svg></i><i class=g><s>者</s><svg><use href='#r8005'/></svg></i></span></div>
<div class='cell' style='left:658px;top:560px;width:71px;height:44px;white-space:nowrap'><span>30<i class=g><s>万</s><svg><use href='#r4e07'/></svg></i>+</span></div>
<div class='cell' style='left:729px;top:560px;width:207px;height:44px;white-space:nowrap'><span>5000+<i class=g><s>学</s><svg><use href='#r5b66'/></svg></i><i class=g><s>员</s><svg><use href='#r5458'/></svg></i><i class=g><s>，</s><svg><use href='#rff0c'/></svg></i><i class=g><s>单</s><svg><use href='#r5355'/></svg></i><i class=g><s>月</s><svg><use href='#r6708'/></svg></i><i class=g><s>最</s><svg><use href='#r6700'/></svg></i><i class=g><s>高</s><svg><use href='#r9ad8'/></svg></i><i class=g><s>收</s><svg><use href='#r6536'/></svg></i><i class=g><s>入</s><svg><use href='#r5165'/></svg></i>8<i class=g><s>万</s><svg><use href='#r4e07'/></svg></i></span></div>
<div class='cell' style='left:936px;top:558px;width:112px;height:44px;justify-content:flex-start;white-space:nowrap;padding-left:10px;align-items:flex-start;padding-top:6px'><span><i class=g><s>实</s><svg><use href='#r5b9e'/></svg></i><i class=g><s>战</s><svg><use href='#r6218'/></svg></i><i class=g><s>派</s><svg><use href='#r6d3e'/></svg></i></span></div>
<div class='rh' style='top:604px;height:45px'>12</div>
<div class='a' style='left:448px;top:173px;width:7px;height:7px;background:#222'></div>
<div class='a' style='left:455px;top:173px;width:8px;height:7px;background:#111'></div>
<div class='a' style='left:463px;top:173px;width:7px;height:7px;background:#555'></div>
<div class='a' style='left:448px;top:217px;width:7px;height:8px;background:#eee'></div>
<div class='a' style='left:448px;top:263px;width:7px;height:7px;background:#333'></div>
<div class='a' style='left:463px;top:263px;width:7px;height:7px;background:#333'></div>
<div class='a' style='left:448px;top:308px;width:7px;height:7px;background:#555'></div>
<div class='a' style='left:455px;top:308px;width:15px;height:7px;background:#efefef'></div>
<div class='a' style='left:470px;top:308px;width:7px;height:7px;background:#999'></div>
<div class='a' style='left:441px;top:353.5px;width:7px;height:7.5px;background:#f6f6f6'></div>
<div class='a' style='left:463px;top:353.5px;width:7px;height:7.5px;background:#111'></div>
<div class='a' style='left:470px;top:353.5px;width:7px;height:7.5px;background:#f6f6f6'></div>
<div class='a' style='left:448px;top:399px;width:7px;height:7px;background:#111'></div>
<div class='a' style='left:463px;top:399px;width:7px;height:7px;background:#333'></div>
<div class='a' style='left:470px;top:392px;width:7px;height:7px;background:#e6e6e6'></div>
<div class='a' style='left:448px;top:444px;width:7px;height:7px;background:#ccc'></div>
<div class='a' style='left:455px;top:444px;width:8px;height:7px;background:#222'></div>
<div class='a' style='left:455px;top:437px;width:8px;height:7px;background:#eaeaea'></div>
<div class='a' style='left:463px;top:437px;width:14px;height:7px;background:#f0f0f0'></div>
<div class='a' style='left:441px;top:444px;width:7px;height:7px;background:#f5f5f5'></div>
<div class='a' style='left:455px;top:489px;width:15px;height:7.4px;background:#111'></div>
<div class='a' style='left:470px;top:481.5px;width:7px;height:7.5px;background:#bbb'></div>
<div class='a' style='left:470px;top:489px;width:7px;height:7.4px;background:#f0f0f0'></div>
<div class='a' style='left:448px;top:534px;width:7px;height:7px;background:#999'></div>
<div class='a' style='left:463px;top:534px;width:7px;height:7px;background:#333'></div>
<div class='a' style='left:470px;top:527px;width:7px;height:7px;background:#ccc'></div>
<div class='a' style='left:470px;top:534px;width:7px;height:7px;background:#f3f3f3'></div>
<div class='a' style='left:448px;top:572px;width:7px;height:7px;background:#333'></div>
<div class='a' style='left:448px;top:579px;width:7px;height:7.5px;background:#222'></div>
<div class='a' style='left:455px;top:579px;width:8px;height:7.5px;background:#555'></div>
<div class='a' style='left:463px;top:579px;width:14px;height:7.5px;background:#111'></div>
<svg style='left:0;top:0' width='1000' height='654'><g stroke='#000' stroke-opacity='0.74' stroke-width='1.4'><path d='M432.80 120V612'/><path d='M491.96 120V612'/><path d='M574.74 120V612'/><path d='M657.66 120V612'/><path d='M728.90 120V612'/><path d='M936.20 120V612'/><path d='M397 154.30H977'/><path d='M397 199.27H977'/><path d='M397 244.13H977'/><path d='M397 288.99H977'/><path d='M397 333.85H977'/><path d='M397 378.71H977'/><path d='M397 423.57H977'/><path d='M397 468.43H977'/><path d='M397 513.29H977'/><path d='M397 558.15H977'/><path d='M397 603.01H977'/></g></svg>
<div class='a' style='left:397px;top:155px;width:1px;height:457px;background:#cfcfcf'></div>
<div class='a' style='left:364px;top:198px;width:33px;height:1px;background:#ececec'></div>
<div class='a' style='left:364px;top:243px;width:33px;height:1px;background:#ececec'></div>
<div class='a' style='left:364px;top:288px;width:33px;height:1px;background:#ececec'></div>
<div class='a' style='left:364px;top:333px;width:33px;height:1px;background:#ececec'></div>
<div class='a' style='left:364px;top:378px;width:33px;height:1px;background:#ececec'></div>
<div class='a' style='left:364px;top:422px;width:33px;height:1px;background:#ececec'></div>
<div class='a' style='left:364px;top:467px;width:33px;height:1px;background:#ececec'></div>
<div class='a' style='left:364px;top:512px;width:33px;height:1px;background:#ececec'></div>
<div class='a' style='left:364px;top:557px;width:33px;height:1px;background:#ececec'></div>
<div class='a' style='left:364px;top:602px;width:33px;height:1px;background:#ececec'></div>
<div class='a' style='left:396px;top:119px;width:38px;height:37px;border:2px solid #1e7145'></div>
<div class='a' style='left:430.5px;top:152px;width:5px;height:5px;border-radius:50%;background:#1e7145'></div>
</div></div>
<div class='a' style='left:974px;top:104px;width:2px;height:508px;background:#c8c8c8'></div>
<div class='a' style='left:977px;top:104px;width:14px;height:508px;background:#e8e8e8'></div>
<div class='a' style='left:976px;top:104px;width:1px;height:508px;background:#fff'></div>
<div class='a' style='left:978px;top:104.5px;width:13px;height:12.5px;background:#fff;border:1px solid #c8c8c8'></div>
<div class='a' style='left:978px;top:117px;width:13px;height:241px;background:#fff;border:1px solid #c8c8c8'></div>
<div class='a' style='left:978px;top:599px;width:13px;height:12.5px;background:#fff;border:1px solid #c8c8c8'></div>
<svg style='left:0;top:0' width='1000' height='654'><path d='M981.3 112.6h6.4l-3.2-3.6z' fill='#666'/><path d='M981.3 603.5h6.4l-3.2 3.6z' fill='#666'/></svg>
<div class='a' style='left:364px;top:612px;width:629px;height:23px;background:#f4f4f4;border-top:1px solid #cdcdcd'></div>
<svg style='left:0;top:0' width='1000' height='654'><path d='M390 622v6l-4-3z' fill='#bdbdbd'/><path d='M410.5 622v6l4-3z' fill='#bdbdbd'/></svg>
<div class='a' style='left:448px;top:612px;width:89px;height:21px;background:#fff;border-left:1px solid #cfcfcf;border-right:1px solid #cfcfcf'></div>
<div class='a' style='left:448px;top:631px;width:89px;height:2px;background:#1e7145'></div>
<div class='a' style='left:448px;top:615px;width:89px;text-align:center;font-size:11.3px;line-height:17px;color:#2b7a4b;font-family:"Liberation Serif",serif;font-weight:bold'><i class=g><s>候</s><svg><use href='#s5019'/></svg></i><i class=g><s>选</s><svg><use href='#s9009'/></svg></i><i class=g><s>人</s><svg><use href='#s4eba'/></svg></i><i class=g><s>评</s><svg><use href='#s8bc4'/></svg></i><i class=g><s>分</s><svg><use href='#s5206'/></svg></i><i class=g><s>表</s><svg><use href='#s8868'/></svg></i></div>
<svg style='left:0;top:0' width='1000' height='654'>
<circle cx='572' cy='623.8' r='6' fill='none' stroke='#666' stroke-width='1.3'/>
<path d='M568.7 623.8h6.6M572 620.5v6.6' stroke='#666' stroke-width='1.5'/>
<g fill='#aaa'><circle cx='718.3' cy='618.8' r='0.8'/><circle cx='718.3' cy='622.5' r='0.8'/><circle cx='718.3' cy='626.2' r='0.8'/></g>
</svg>
<div class='a' style='left:730.5px;top:618.5px;width:245px;height:12px;background:#e8e8e8'></div>
<div class='a' style='left:730.5px;top:618.5px;width:12.5px;height:12px;background:#fff;border:1px solid #c8c8c8'></div>
<div class='a' style='left:743px;top:618.5px;width:62px;height:12px;background:#fff;border:1px solid #c8c8c8'></div>
<div class='a' style='left:963px;top:618.5px;width:12.5px;height:12px;background:#fff;border:1px solid #c8c8c8'></div>
<svg style='left:0;top:0' width='1000' height='654'><path d='M738.5 621.5v6l-3.5-3z' fill='#555'/><path d='M967.5 621.5v6l3.5-3z' fill='#555'/></svg>
<div class='a' style='left:364px;top:636px;width:629.5px;height:18px;background:#217346'></div>
<div class='a' style='left:372px;top:640px;font-size:9px;color:#e0ebe4;line-height:13px'><i class=g><s>就</s><svg><use href='#r5c31'/></svg></i><i class=g><s>绪</s><svg><use href='#r7eea'/></svg></i></div>
<svg style='left:0;top:0' width='1000' height='654'>
<g stroke='#eef5f0' stroke-width='1.2'><path d='M817.6 646h9.4M939 646h10M944 641v10'/></g>
<path d='M832.4 646.5h101.2' stroke='#dfe9e2' stroke-width='1'/>
<rect x='881.9' y='642' width='3.2' height='8' fill='#f0f5f1'/>
</svg>
<div class='a' style='left:960px;top:639px;font-size:11px;color:#eef5f0;line-height:15px'>100%</div>
</body></html>
